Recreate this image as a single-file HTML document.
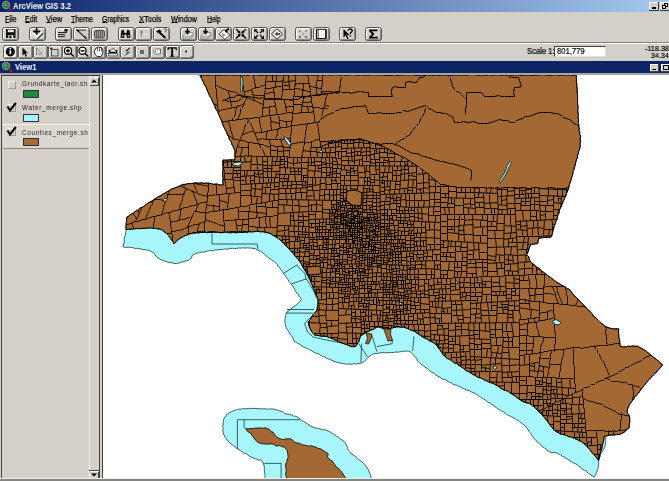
<!DOCTYPE html>
<html><head><meta charset="utf-8">
<style>
*{margin:0;padding:0;box-sizing:border-box}
html,body{width:669px;height:481px;overflow:hidden;background:#d4d0c8;font-family:"Liberation Sans",sans-serif;position:relative}
.a{position:absolute}
#title{left:0;top:0;width:669px;height:11.5px;background:linear-gradient(90deg,#0a246a 0%,#a6caf0 100%)}
.tt{color:#fff;font-weight:bold;font-size:9px;line-height:11px;white-space:nowrap;transform-origin:0 0}
.mn{font-size:8.5px;color:#000;white-space:nowrap;transform-origin:0 0;line-height:10px;top:13.6px}
.mn u{text-decoration:underline;text-underline-offset:0px}
.mn{-webkit-text-stroke:0.25px #000}
.b1{top:26.6px;height:14.4px;width:17.2px;border:1px solid #555;border-radius:2.5px;background:#d4d0c8;box-shadow:inset 1px 1px 0 #fff,inset -1px -1px 0 #8c8a84;overflow:hidden}
.b2{top:45px;height:14px;width:15px;border:1px solid #606060;border-radius:2px;background:#d4d0c8;box-shadow:inset 1px 1px 0 #fff,inset -1px -1px 0 #8c8a84;overflow:hidden}
.lg{font-size:6.3px;letter-spacing:0.7px;color:#1a1a1a;white-space:nowrap;line-height:8px;width:66px;overflow:hidden}
.ic{position:absolute;left:0;top:0}
.tt,.mn,.lg,.tx{will-change:transform}
.tx{-webkit-text-stroke:0.2px #000}
</style></head><body>
<div id="title" class="a"></div>
<svg class="a" style="left:1px;top:0px" width="12" height="12" viewBox="0 0 12 12">
<circle cx="5" cy="5" r="3.6" fill="#2a7a4a" stroke="#8a8a7a" stroke-width="1.2"/>
<path d="M3.5 3.5 L5.5 3 L6 5.5 L4 6.5Z" fill="#30d040"/>
<path d="M4.5 3 L6.5 3.5 L6 6Z" fill="#4060e0"/>
<line x1="7.6" y1="7.6" x2="11" y2="11" stroke="#c02010" stroke-width="1.4"/>
</svg>
<div class="a tt" style="left:13px;top:0.5px;transform:scaleX(0.85)">ArcView GIS 3.2</div>
<div class="a" style="left:649px;top:1.5px;width:10px;height:9px;background:#d4d0c8;box-shadow:inset -1px -1px 0 #404040,inset 1px 1px 0 #fff"><div class="a" style="left:3px;top:5.5px;width:4px;height:1.5px;background:#000"></div></div>
<div class="a" style="left:660px;top:1.5px;width:10px;height:9px;background:#d4d0c8;box-shadow:inset -1px -1px 0 #404040,inset 1px 1px 0 #fff"><div class="a" style="left:4px;top:1.5px;width:4px;height:3.5px;border:1px solid #000;border-top-width:1.5px"></div><div class="a" style="left:2px;top:3.5px;width:4px;height:3.5px;border:1px solid #000;border-top-width:1.5px;background:#d4d0c8"></div></div>


<div class="a mn" style="left:4.5px;transform:scaleX(0.83)"><u>F</u>ile</div>
<div class="a mn" style="left:24.6px;transform:scaleX(0.83)"><u>E</u>dit</div>
<div class="a mn" style="left:45.7px;transform:scaleX(0.88)"><u>V</u>iew</div>
<div class="a mn" style="left:70.9px;transform:scaleX(0.83)"><u>T</u>heme</div>
<div class="a mn" style="left:102.3px;transform:scaleX(0.80)"><u>G</u>raphics</div>
<div class="a mn" style="left:139px;transform:scaleX(0.88)"><u>X</u>Tools</div>
<div class="a mn" style="left:171.4px;transform:scaleX(0.86)"><u>W</u>indow</div>
<div class="a mn" style="left:207px;transform:scaleX(0.78)"><u>H</u>elp</div>

<div class="a b1" style="left:2.3px"></div><div class="a b1" style="left:28.8px"></div><div class="a b1" style="left:54.5px"></div><div class="a b1" style="left:72.8px"></div><div class="a b1" style="left:91px"></div><div class="a b1" style="left:117.6px"></div><div class="a b1" style="left:134.8px"></div><div class="a b1" style="left:152.8px"></div><div class="a b1" style="left:179.8px"></div><div class="a b1" style="left:197.8px"></div><div class="a b1" style="left:215.3px"></div><div class="a b1" style="left:233px"></div><div class="a b1" style="left:250.8px"></div><div class="a b1" style="left:268.6px"></div><div class="a b1" style="left:295.2px"></div><div class="a b1" style="left:313.2px"></div><div class="a b1" style="left:339.2px"></div><div class="a b1" style="left:364.8px"></div>
<div class="a" style="left:0;top:42.2px;width:669px;height:1px;background:#808080"></div>
<div class="a" style="left:0;top:43.2px;width:669px;height:1px;background:#fff"></div>
<div class="a b2" style="left:3px;width:15px;background:#f0f0ec"></div><div class="a b2" style="left:17.5px;width:15px"></div><div class="a b2" style="left:32.5px;width:15px"></div><div class="a b2" style="left:47.5px;width:15px"></div><div class="a b2" style="left:62px;width:15px"></div><div class="a b2" style="left:76.5px;width:15px"></div><div class="a b2" style="left:91px;width:15px"></div><div class="a b2" style="left:105.5px;width:15px"></div><div class="a b2" style="left:120px;width:15px"></div><div class="a b2" style="left:134.5px;width:15px"></div><div class="a b2" style="left:149.5px;width:15px"></div><div class="a b2" style="left:164.5px;width:15px"></div><div class="a b2" style="left:179px;width:14.5px"></div><svg class="a" style="left:0;top:0" width="669" height="62" viewBox="0 0 669 62"><rect x="6" y="29" width="9.5" height="9" fill="#111"/><rect x="7.8" y="29.6" width="6" height="2.6" fill="#e8e8e8"/><rect x="8.3" y="35.2" width="5" height="2.8" fill="#e8e8e8"/><rect x="9.3" y="35.8" width="2.2" height="2.2" fill="#111"/><path d="M31.5 33 L37 38.5 L43 32.5 L41 31.5 L37 35.5 L33.5 32Z" fill="#f4f4f4"/><path d="M37 38.5 L43 32.5 L43.2 34 L37.5 39.5Z" fill="#222"/><rect x="33" y="30.6" width="7.2" height="1.8" fill="#000"/><rect x="35.7" y="28.2" width="1.8" height="6.4" fill="#000"/><rect x="58" y="30.5" width="9" height="8" fill="#c8c8c8"/><path d="M58 32.5H67M58 34.6H65M58 36.6H65" stroke="#222" stroke-width="1"/><rect x="64.5" y="29" width="3" height="2.6" fill="#000"/><path d="M60 31 L64 29.5" stroke="#fff" stroke-width="1.3"/><path d="M78 30.2H86" stroke="#333" stroke-width="1"/><path d="M76.5 29.5 L86.5 38.5" stroke="#000" stroke-width="1.6"/><path d="M79 31.5 L84 36" stroke="#ddd" stroke-width="0.6"/><rect x="94.5" y="30.5" width="10" height="7.5" rx="1.5" fill="#9a9a9a" stroke="#333" stroke-width="0.8"/><path d="M96.5 31V37.5M98.5 31V37.5M100.5 31V37.5M102.5 31V37.5" stroke="#444" stroke-width="0.7"/><path d="M120.5 37.5 L121.5 30.5 L123.5 29.5 L124.5 33 L126.5 33 L127.5 29.5 L129.5 30.5 L130.5 37.5 L127 38 L126.5 34.5 L124.5 34.5 L124 38Z" fill="#000"/><rect x="121.8" y="35" width="1.5" height="1.5" fill="#bbb"/><rect x="127.8" y="35" width="1.5" height="1.5" fill="#bbb"/><circle cx="141.5" cy="32" r="1.6" fill="#8a8a8a"/><path d="M141.5 33.5V37" stroke="#8a8a8a" stroke-width="0.9"/><path d="M143.5 34.5H147" stroke="#fff" stroke-width="1"/><path d="M156 31.5 L159.5 29.5 L161.5 31.5 L159 33.5Z" fill="#000"/><path d="M159 32 L165.5 38" stroke="#000" stroke-width="1.8"/><path d="M164 29.2 Q165.5 28 166.6 29.2 Q167 30.5 165.5 31.2 V32.2" fill="none" stroke="#000" stroke-width="0.7"/><path d="M183 35.5 L187 32.5 L193 32.5 L193 36.5 L189 39 L183 39Z" fill="#e8e8e8" stroke="#666" stroke-width="0.6"/><path d="M183 36.5H189M183 38H189M189 36.5L193 34M189 38L193 35.5" stroke="#777" stroke-width="0.6"/><path d="M187.5 28.3V33M185.5 31L187.5 33.5L189.5 31" stroke="#000" stroke-width="1.5" fill="none"/><path d="M201 35.5 L205 32.5 L211 32.5 L211 36.5 L207 39 L201 39Z" fill="#e8e8e8" stroke="#666" stroke-width="0.6"/><path d="M201 36.5H207M201 38H207M207 36.5L211 34M207 38L211 35.5" stroke="#777" stroke-width="0.6"/><path d="M205.5 28.3V33M203.5 31L205.5 33.5L207.5 31" stroke="#000" stroke-width="1.5" fill="none"/><path d="M219 34 L224 29.5 L230 35 L225 39.5Z" fill="#f2f2f2" stroke="#333" stroke-width="0.9"/><path d="M225.5 31.5 L229 28.5" stroke="#000" stroke-width="1.8"/><path d="M224.5 30 L226.5 33 L228 30.5Z" fill="#000"/><circle cx="223.5" cy="35" r="0.9" fill="none" stroke="#222" stroke-width="0.6"/><path d="M236 29 L240 33M246 29 L242 33M236 38.5 L240 34.5M246 38.5 L242 34.5" stroke="#000" stroke-width="1.4"/><path d="M240.5 33.5 L237.5 33 L240 30.5Z M241.5 33.5 L244.5 33 L242 30.5Z M240.5 34 L237.5 34.5 L240 37Z M241.5 34 L244.5 34.5 L242 37Z" fill="#000"/><path d="M255.5 30.5 L258 33M262.5 30.5 L260 33M255.5 37.5 L258 35M262.5 37.5 L260 35" stroke="#000" stroke-width="1.2"/><path d="M254 29 L257.5 29.2 L254.2 32.5Z M264 29 L260.5 29.2 L263.8 32.5Z M254 39 L257.5 38.8 L254.2 35.5Z M264 39 L260.5 38.8 L263.8 35.5Z" fill="#000"/><path d="M271.5 34 L277 28.8 L282.5 34 L277 39.2Z" fill="#f6f6f6" stroke="#222" stroke-width="1"/><path d="M274.5 34 L277.5 31.5V33H280V35H277.5V36.5Z" fill="#555"/><circle cx="300" cy="31" r="1.2" fill="#999"/><circle cx="306" cy="31" r="1.2" fill="#999"/><circle cx="300" cy="37" r="1.2" fill="#777"/><circle cx="306" cy="37" r="1.2" fill="#777"/><circle cx="303" cy="34" r="1.2" fill="#aaa"/><path d="M301 30H305M298 33V35" stroke="#fff" stroke-width="0.8"/><rect x="316.5" y="29.3" width="9.5" height="9.2" fill="#f8f8f8" stroke="#000" stroke-width="0.9"/><rect x="325" y="29.8" width="1.6" height="9" fill="#222"/><path d="M317.2 31H319M317.2 33H319M317.2 35H319M317.2 37H319" stroke="#000" stroke-width="0.8"/><path d="M343.5 29 L343.5 37.5 L345.5 35.5 L347.5 39 L348.7 38.4 L346.8 35 L349.5 35Z" fill="#000"/><path d="M347.8 30.5 Q348.5 28.8 350.3 28.8 Q352.3 29 352.2 30.8 Q352 32 350.6 32.6 L350.4 34" fill="none" stroke="#000" stroke-width="1.3"/><rect x="349.7" y="35" width="1.4" height="1.4" fill="#000"/><path d="M369 29.5H377.5V31.3H371.8L374.5 34L371.8 36.7H377.8V38.5H369V37L372 34L369 31Z" fill="#000"/><circle cx="10.3" cy="51.8" r="4.6" fill="#000"/><rect x="9.5" y="50.3" width="1.7" height="4" fill="#fff"/><rect x="9.5" y="48" width="1.7" height="1.4" fill="#fff"/><path d="M22.5 47.5 L22.5 55.5 L24.3 53.7 L25.8 56.8 L27 56.2 L25.6 53.2 L28 53.2Z" fill="#000"/><path d="M36.5 47.5 L36.5 55 M36.5 47.5 L42 54 L37.5 54" stroke="#777" stroke-width="0.8" fill="none"/><rect x="51.5" y="49.5" width="6.5" height="6.5" fill="none" stroke="#333" stroke-width="0.8"/><path d="M49.5 48.5H52.5M51 47V50" stroke="#222" stroke-width="0.8"/><circle cx="68" cy="50.8" r="3.6" fill="#fff" stroke="#000" stroke-width="1.3"/><path d="M66 50.8H70M68 48.8V52.8" stroke="#000" stroke-width="1.4"/><path d="M70.6 53.4 L73.8 56.6" stroke="#000" stroke-width="1.4"/><circle cx="82.5" cy="50.8" r="3.6" fill="#fff" stroke="#000" stroke-width="1.3"/><path d="M80.5 50.8H84.5" stroke="#000" stroke-width="1.4"/><path d="M85.1 53.4 L88.3 56.6" stroke="#000" stroke-width="1.4"/><path d="M94 51 L95.5 49.5 L96 48 L97.5 47.5 L98.5 47 L100 47.5 L101.5 47.5 L102.5 49 L103 51 L102.5 54 L101 56.5 L97 56.5 L95 54Z" fill="#fff" stroke="#000" stroke-width="0.8"/><path d="M97.5 48V51.5M99.5 47.5V51M101.5 48V51.5" stroke="#000" stroke-width="0.6"/><rect x="108.5" y="53.5" width="9" height="2.5" fill="#ddd" stroke="#333" stroke-width="0.7"/><circle cx="109.5" cy="51" r="1" fill="#000"/><circle cx="116.5" cy="51" r="1" fill="#000"/><path d="M110 51 L113 48 L116 51" stroke="#555" stroke-width="0.7" fill="none"/><rect x="109" y="52" width="8" height="1" fill="#000"/><path d="M129.5 47.5 L125 51 L128 51.5 L124 56.5 L130 52 L127 51.5 L130.5 48Z" fill="#333"/><rect x="140" y="50" width="4" height="4" fill="#666"/><circle cx="138.5" cy="48.5" r="0.6" fill="#888"/><circle cx="146" cy="55" r="0.6" fill="#888"/><circle cx="138.5" cy="55" r="0.6" fill="#888"/><path d="M153 51.5 L155.5 49 H160.5 V54 H155.5Z" fill="#f6f6f6" stroke="#555" stroke-width="0.8"/><circle cx="155.5" cy="51.5" r="0.7" fill="#333"/><path d="M167.5 47.3H176.8V50.3H176L175.3 48.6H173.1V55.6L174.6 56V56.8H169.7V56L171.2 55.6V48.6H169L168.3 50.3H167.5Z" fill="#000"/><path d="M176.5 56.5 L177.5 57.6 L178.3 56.5Z" fill="#000"/><circle cx="186" cy="51.5" r="1" fill="#000"/><path d="M191 56.5 L192 57.6 L192.8 56.5Z" fill="#000"/></svg>
<div class="a tx" style="left:526.5px;top:46px;font-size:8.5px;line-height:10px;white-space:nowrap;transform:scaleX(0.9);transform-origin:0 0">Scale 1:</div>
<div class="a" style="left:554.3px;top:45.6px;width:52px;height:11px;background:#fff;border-top:1px solid #404040;border-left:1px solid #404040;border-bottom:1px solid #e0e0e0;border-right:1px solid #e0e0e0"></div>
<div class="a tx" style="left:557px;top:46px;font-size:8.5px;line-height:10px;white-space:nowrap;transform:scaleX(0.9);transform-origin:0 0">801,779</div>
<div class="a tx" style="left:644.5px;top:44.5px;font-size:8px;line-height:7px;white-space:nowrap;transform:scaleX(0.9);transform-origin:0 0">-118.38</div>
<div class="a tx" style="left:651px;top:51.5px;font-size:8px;line-height:7px;white-space:nowrap;transform:scaleX(0.9);transform-origin:0 0">34.34</div>

<div class="a" style="left:0;top:61px;width:669px;height:12px;background:#0a2466"></div>
<svg class="a" style="left:1px;top:61px" width="12" height="12" viewBox="0 0 12 12">
<circle cx="5" cy="5" r="3.6" fill="#2a7a4a" stroke="#8a8a7a" stroke-width="1.2"/>
<path d="M3.5 3.5 L5.5 3 L6 5.5 L4 6.5Z" fill="#30d040"/>
<path d="M4.5 3 L6.5 3.5 L6 6Z" fill="#4060e0"/>
<line x1="7.6" y1="7.6" x2="11" y2="11" stroke="#c02010" stroke-width="1.4"/>
</svg>
<div class="a tt" style="left:15px;top:61.5px;transform:scaleX(0.85)">View1</div>
<div class="a" style="left:650px;top:63.5px;width:9px;height:8px;background:#d4d0c8;box-shadow:inset -1px -1px 0 #404040,inset 1px 1px 0 #fff"><div class="a" style="left:2px;top:5px;width:4px;height:1.2px;background:#000"></div></div>
<div class="a" style="left:661px;top:63.5px;width:9px;height:8px;background:#d4d0c8;box-shadow:inset -1px -1px 0 #404040,inset 1px 1px 0 #fff"><div class="a" style="left:2px;top:1.5px;width:6px;height:5px;border:1px solid #000;border-top-width:1.5px"></div></div>

<div class="a" style="left:0;top:73px;width:669px;height:2px;background:#a8a6a0"></div>
<!-- TOC -->
<div class="a" style="left:1px;top:75px;width:99px;height:404px;border-left:1px solid #404040;border-top:1px solid #404040;border-right:1px solid #404040;background:#d4d0c8"></div>
<div class="a" style="left:2.5px;top:124px;width:86px;height:24.5px;border-top:1px solid #f4f4f0;border-bottom:1px solid #8a8880;background:#dcd8d0"></div>
<div class="a" style="left:7.5px;top:81px;width:8.5px;height:7.5px;border-top:1px solid #f4f2ee;border-left:1px solid #f4f2ee;border-right:1px solid #9a9890;border-bottom:1px solid #9a9890;background:#d4d0c8"></div>
<div class="a" style="left:7.5px;top:104px;width:8.5px;height:7.5px;border-top:1px solid #f4f2ee;border-left:1px solid #f4f2ee;border-right:1px solid #9a9890;border-bottom:1px solid #9a9890;background:#d4d0c8"></div>
<div class="a" style="left:7.5px;top:128px;width:8.5px;height:7.5px;border-top:1px solid #f4f2ee;border-left:1px solid #f4f2ee;border-right:1px solid #9a9890;border-bottom:1px solid #9a9890;background:#d4d0c8"></div>
<svg class="a" style="left:5px;top:100px" width="14" height="40" viewBox="0 0 14 40">
<path d="M2.5 6.5 L5 10.5 L10.8 3" fill="none" stroke="#000" stroke-width="2.1"/>
<path d="M2.5 30.5 L5 34.5 L10.8 27" fill="none" stroke="#000" stroke-width="2.1"/>
</svg>
<div class="a lg" style="left:22px;top:80.2px">Grundkarte_laor.sh</div>
<div class="a lg" style="left:22px;top:104.4px">Water_merge.shp</div>
<div class="a lg" style="left:22px;top:128.6px">Counties_merge.sh</div>
<div class="a" style="left:22.5px;top:89.6px;width:16.5px;height:8px;background:#1f8a3c;border:1px solid #303030"></div>
<div class="a" style="left:22.5px;top:113.6px;width:16.5px;height:8px;background:#a8f4fc;border:1px solid #303030"></div>
<div class="a" style="left:22.5px;top:137.5px;width:16.5px;height:8px;background:#a86a38;border:1px solid #303030"></div>
<!-- scrollbar -->
<div class="a" style="left:89px;top:76px;width:9.5px;height:403px;background:#d4d0c8;border-left:1px solid #f0f0ec"></div>
<div class="a" style="left:89px;top:76.5px;width:9.5px;height:9.5px;background:#d4d0c8;box-shadow:inset 1px 1px 0 #fff,inset -1px -1px 0 #404040"></div>
<svg class="a" style="left:90px;top:78px" width="8" height="6"><path d="M1 4.5 L4 1.5 L7 4.5Z" fill="#000"/></svg>
<div class="a" style="left:89px;top:469.5px;width:9.5px;height:9.5px;background:#d4d0c8;box-shadow:inset 1px 1px 0 #fff,inset -1px -1px 0 #404040;border-top:1px solid #404040"></div>
<svg class="a" style="left:90px;top:472px" width="8" height="6"><path d="M1 1.5 L4 4.5 L7 1.5Z" fill="#000"/></svg>
<!-- divider -->
<div class="a" style="left:102px;top:75px;width:1px;height:404px;background:#404040"></div>
<div class="a" style="left:103px;top:75px;width:566px;height:404px;background:#fff"></div>

<svg class="a" style="left:0;top:0;filter:blur(0.22px)" width="669" height="481" viewBox="0 0 669 481">
<defs><clipPath id="cm"><path d="M200.0 75.0L199.8 75.0L200.0 75.1L200.4 74.7L200.2 75.2L200.6 74.8L201.5 75.0L201.8 75.0L202.1 74.8L202.6 75.3L203.1 75.2L203.8 74.7L204.6 75.1L205.0 74.7L206.2 75.0L207.0 75.3L207.9 75.3L208.6 75.2L209.7 75.3L211.0 74.7L211.6 74.8L213.4 75.0L214.3 74.9L215.5 74.9L216.7 75.1L218.3 75.3L219.7 75.3L221.3 75.3L222.7 74.8L224.4 75.3L226.0 75.0L227.5 74.8L229.2 75.1L230.6 74.7L232.7 75.3L234.0 75.2L236.1 74.8L237.9 75.2L240.2 74.7L242.0 74.7L244.0 74.9L246.2 75.3L248.0 75.3L249.9 74.7L252.3 74.7L254.2 74.9L256.7 74.8L258.5 75.3L261.0 75.3L263.7 74.9L265.7 75.0L268.2 75.1L270.5 75.1L273.2 75.0L275.3 75.2L277.6 74.9L280.6 75.0L282.9 74.7L285.3 75.1L287.6 75.1L290.6 74.7L293.3 75.0L295.9 74.9L298.6 75.2L300.8 74.7L304.0 75.3L306.4 75.0L309.4 74.9L312.0 74.9L314.8 75.1L317.5 74.9L320.7 74.7L323.4 75.2L326.0 74.8L329.3 74.8L331.7 75.0L334.9 74.7L337.6 74.9L340.8 75.0L343.8 74.8L346.4 75.1L349.7 75.0L352.2 74.7L355.3 74.8L358.5 75.2L361.0 74.8L364.4 75.1L367.4 74.9L369.9 74.9L373.4 74.8L376.1 74.9L379.1 74.9L382.5 74.8L384.9 75.3L388.5 75.3L391.2 75.3L394.5 74.8L397.4 75.2L400.3 75.0L403.1 74.9L406.0 74.7L409.2 74.9L412.4 74.7L415.4 75.1L418.4 75.3L421.4 75.1L423.7 75.2L426.8 74.9L430.0 75.0L432.8 75.3L435.9 74.9L438.5 75.3L441.6 75.2L444.4 74.8L447.4 75.2L450.0 75.2L453.4 75.2L456.1 74.7L458.8 75.3L461.2 74.8L464.1 75.0L467.0 75.0L470.0 74.7L472.2 74.7L475.0 74.7L478.3 75.2L480.3 75.0L483.1 74.9L485.8 75.1L488.5 74.9L490.8 74.9L493.3 75.0L496.3 74.9L498.3 74.8L501.0 75.1L503.7 74.9L506.2 75.1L508.3 74.9L510.7 75.1L513.0 75.1L515.3 74.8L517.6 75.1L519.5 74.9L522.0 75.3L524.5 74.9L526.6 75.2L528.3 75.0L530.2 75.2L532.6 75.3L534.7 75.1L536.6 75.0L538.1 75.1L539.9 74.8L542.3 74.7L543.6 74.7L545.9 74.8L547.1 75.2L548.8 75.2L550.8 75.2L552.6 75.1L554.0 74.7L555.5 75.0L556.9 74.7L558.4 75.3L559.3 74.9L560.9 75.2L562.0 74.8L563.2 75.1L564.7 74.9L565.6 74.9L566.6 74.9L567.4 75.0L569.0 74.9L569.8 74.8L570.6 75.2L571.4 75.0L572.0 75.1L573.0 74.8L573.0 75.2L574.2 75.0L574.4 75.2L574.7 74.8L575.1 75.1L575.5 74.8L576.0 75.3L576.0 75.1L576.2 75.2L576.4 74.8L576.4 75.0L576.2 75.0L576.4 76.1L576.3 77.5L576.5 79.6L576.4 81.9L576.8 84.0L576.9 86.7L577.3 89.2L577.2 92.0L577.5 94.3L577.6 97.1L577.5 99.0L577.6 100.9L577.5 103.3L577.9 105.7L578.1 107.3L577.8 109.5L577.8 112.0L578.4 114.3L578.1 116.4L578.2 118.2L578.6 119.9L578.3 122.4L578.7 124.0L578.8 126.2L579.2 128.6L579.1 130.4L579.7 132.5L579.8 134.4L580.6 136.2L580.4 137.9L580.3 140.2L580.4 142.0L580.0 144.2L580.3 145.5L580.0 147.5L579.4 149.6L578.6 151.4L578.4 153.4L577.5 155.4L577.4 157.6L576.4 160.0L576.0 161.4L575.5 163.3L575.2 165.4L574.5 167.0L574.0 169.4L573.1 171.6L572.9 173.2L572.5 175.3L571.5 177.8L571.1 179.8L570.5 181.7L569.7 183.5L569.0 185.8L568.9 187.4L568.2 189.0L567.5 191.4L566.4 193.6L566.0 195.4L564.9 197.4L564.3 199.3L563.2 201.1L562.6 203.2L561.7 205.2L561.0 207.0L560.1 208.7L559.3 210.5L559.1 213.0L558.0 214.7L557.4 217.2L557.0 219.3L556.1 220.9L555.4 222.8L554.8 224.9L554.1 226.4L553.8 228.0L552.9 231.2L552.1 234.6L551.7 236.2L551.2 237.0L550.3 237.1L548.1 237.6L545.2 237.4L542.4 237.7L540.0 238.1L539.0 238.0L538.1 240.9L537.8 243.4L536.2 243.7L532.8 244.2L531.0 244.5L530.3 245.6L529.2 248.1L528.3 251.0L527.2 253.9L526.7 254.6L529.0 257.0L529.1 258.3L530.0 261.0L531.2 262.1L531.9 263.0L533.6 264.1L535.4 266.1L537.0 267.4L539.0 268.3L540.9 270.1L542.3 271.3L544.2 272.7L545.7 273.7L547.4 275.4L549.1 276.4L550.7 277.6L551.9 278.6L553.6 279.9L555.6 281.3L557.2 282.5L559.5 283.7L561.4 285.0L563.3 286.0L565.6 287.1L567.0 288.5L568.9 289.1L570.0 290.0L571.3 291.7L572.4 293.7L573.5 294.6L574.3 295.9L576.3 297.2L577.7 298.9L579.3 300.6L581.4 302.6L583.7 305.0L584.6 306.0L586.0 307.7L587.4 308.9L589.2 310.8L591.0 312.3L592.4 314.3L593.8 316.5L595.6 317.6L597.5 319.4L599.2 321.1L600.4 322.4L602.3 323.9L603.8 325.2L604.9 326.2L608.2 327.6L610.9 328.4L614.2 329.0L616.2 328.6L618.1 329.1L618.6 328.7L618.7 329.1L618.5 331.1L618.7 333.8L618.9 337.5L619.7 340.3L619.9 343.3L620.0 345.5L619.8 346.0L623.6 347.0L625.3 346.6L626.5 346.8L628.8 346.2L630.4 346.4L632.4 346.0L634.9 346.2L637.7 346.3L639.8 347.4L641.5 348.4L643.3 349.3L645.3 350.5L647.0 352.0L649.4 353.8L651.2 355.3L653.6 357.3L655.6 358.8L657.3 360.2L659.1 361.5L660.3 363.2L661.5 363.7L661.9 364.8L662.3 364.8L661.8 365.9L660.2 367.9L657.3 371.0L656.5 372.3L655.0 373.3L653.6 374.6L652.8 375.8L651.1 377.3L649.3 379.3L647.8 380.6L646.2 382.9L644.8 384.8L643.7 385.9L642.3 388.1L640.9 389.4L639.7 391.4L638.4 393.2L636.9 394.6L635.2 396.4L634.2 398.3L632.3 400.7L631.2 402.4L630.0 403.8L629.1 405.6L628.5 406.9L627.8 408.0L627.2 411.5L627.6 413.3L628.8 414.7L629.6 417.0L629.8 419.5L629.7 422.1L629.2 425.1L629.2 426.9L628.9 428.0L628.1 428.7L626.2 430.4L624.1 432.3L621.0 433.8L619.2 434.4L616.5 434.6L614.3 435.0L611.1 435.1L608.3 435.4L606.6 436.0L605.1 436.3L604.3 436.0L604.3 436.8L603.9 437.8L603.7 440.1L603.2 442.4L602.4 445.2L601.8 448.6L600.7 451.7L599.9 454.0L599.7 456.7L599.1 459.0L598.5 460.4L598.7 460.7L598.3 460.3L597.6 459.6L596.9 458.0L595.0 456.2L593.6 454.1L591.7 452.4L590.2 450.3L588.5 448.1L586.2 445.6L584.4 444.1L583.0 442.8L581.0 441.4L578.9 440.5L576.8 439.3L575.1 438.8L572.7 437.7L571.1 436.9L568.8 436.7L567.3 436.0L565.2 435.0L562.9 434.5L561.6 434.2L559.9 433.9L558.2 432.5L556.0 431.6L554.4 430.0L553.2 428.7L551.6 427.2L550.2 425.2L549.0 423.7L547.7 421.4L546.0 419.7L544.8 418.0L543.5 416.6L542.2 415.1L540.2 412.9L538.9 411.7L537.2 410.1L535.7 408.2L533.9 406.6L532.8 406.0L531.4 404.7L529.2 403.2L526.9 403.0L524.9 402.3L522.4 401.3L520.6 400.2L518.6 398.7L517.1 397.9L515.0 396.0L513.0 394.7L511.2 393.5L509.5 392.4L507.6 391.1L505.1 390.4L503.3 389.7L501.8 388.9L500.0 387.8L498.2 386.2L496.9 385.5L494.2 384.0L492.7 383.2L491.2 382.9L488.8 381.9L486.9 381.0L485.1 380.4L482.7 379.0L480.7 378.0L478.2 377.5L476.2 376.2L474.3 375.0L472.9 374.5L470.6 372.9L468.7 371.6L466.8 371.0L464.8 369.3L463.1 368.0L461.6 367.3L460.1 366.1L458.3 365.0L456.6 363.4L454.4 363.0L452.4 361.4L451.0 360.3L449.4 359.1L447.6 358.7L446.0 357.5L444.8 356.0L443.1 354.8L442.1 352.9L440.5 350.8L439.8 349.2L438.3 348.0L437.5 345.9L435.9 344.8L434.4 343.4L432.0 341.8L430.0 341.2L427.9 339.6L426.0 338.6L424.7 338.0L422.0 336.6L420.0 335.0L418.0 333.7L416.8 333.1L414.8 331.4L412.6 330.6L410.1 329.8L407.8 328.6L405.3 327.7L403.0 327.0L400.7 327.2L398.8 326.9L396.6 326.9L393.5 327.6L390.8 328.4L387.8 329.0L384.9 329.1L383.1 328.2L381.0 327.8L379.1 326.9L377.1 327.1L374.7 328.4L373.1 329.5L370.5 330.2L368.9 331.3L366.5 332.1L364.6 333.5L362.6 334.7L360.2 336.4L359.7 338.9L358.7 342.2L357.1 344.2L356.1 345.9L354.4 346.6L351.1 346.6L349.2 345.9L346.7 344.5L343.9 343.7L341.8 342.8L339.3 342.0L337.2 340.9L335.1 340.0L332.8 338.9L330.6 338.1L328.8 337.4L326.4 336.4L324.0 336.2L321.1 336.2L319.1 335.7L316.6 335.4L314.7 335.0L313.2 333.6L311.6 331.5L310.4 329.1L309.2 326.6L308.5 323.2L308.2 321.8L308.8 321.4L310.4 319.4L311.7 317.2L313.1 314.8L314.7 313.1L316.6 310.8L317.3 308.2L317.4 306.5L317.9 304.3L318.0 301.5L318.0 299.5L317.4 297.3L316.3 295.1L315.1 292.2L314.5 290.3L313.4 288.4L312.6 286.2L311.9 284.4L310.8 282.0L310.0 279.9L308.9 278.2L308.2 276.1L306.9 274.3L306.0 272.1L305.0 270.4L304.0 269.0L302.9 267.0L302.0 265.3L300.9 263.2L299.5 261.2L298.4 259.6L296.9 258.0L295.5 256.6L294.0 254.4L292.9 253.1L290.9 251.1L289.6 249.5L288.6 248.2L287.0 247.0L285.2 245.1L283.9 243.5L282.5 242.1L280.8 240.3L279.2 239.2L277.7 238.0L275.0 236.4L273.4 235.6L270.8 233.8L269.0 233.2L266.9 232.5L265.3 232.3L262.8 231.7L260.7 231.8L258.0 231.4L256.2 231.3L254.4 231.6L252.6 231.9L251.0 231.8L248.8 231.7L247.0 232.4L244.8 232.1L242.8 232.5L240.0 232.5L238.3 232.3L236.3 232.8L234.3 232.6L232.6 232.4L230.6 232.8L228.5 232.6L225.9 232.1L223.9 232.3L221.6 232.7L219.5 232.6L218.0 232.1L216.0 232.3L213.6 232.2L212.0 232.4L209.3 232.4L207.3 232.7L205.4 232.2L202.9 232.5L200.7 232.5L198.8 232.9L197.0 232.6L195.1 233.0L193.7 233.1L192.0 233.5L189.7 233.8L187.5 234.8L185.3 235.6L183.7 236.3L182.3 237.2L180.7 238.0L178.3 239.3L176.4 241.7L174.6 243.0L174.0 243.6L173.6 243.5L173.4 242.1L172.6 241.2L171.1 239.5L169.7 237.0L168.1 235.0L166.2 233.2L163.7 231.4L162.0 230.0L159.4 229.0L157.7 228.9L155.6 228.4L153.4 228.4L150.6 227.8L148.3 228.1L145.2 228.4L142.8 228.3L140.0 228.7L137.2 228.5L134.1 228.9L132.3 228.9L130.1 229.2L128.2 229.5L127.2 229.4L126.0 229.6L126.0 229.6L125.9 228.8L126.0 226.3L126.2 223.4L126.7 220.2L126.5 218.2L126.9 217.3L126.8 217.2L127.1 216.7L127.9 216.9L128.9 216.1L129.5 215.1L130.6 214.5L132.3 213.5L133.7 212.8L135.0 211.6L137.0 210.4L138.6 209.4L140.2 207.9L142.8 207.0L144.7 205.7L146.4 204.2L149.1 202.4L151.1 201.5L153.3 200.0L155.5 198.5L157.9 197.0L160.3 195.8L162.9 194.2L165.1 192.9L167.4 191.5L169.4 190.6L171.4 189.1L173.3 188.5L175.3 187.7L177.4 187.0L179.3 186.1L180.7 185.4L183.0 184.4L185.6 184.3L188.4 183.5L190.5 183.7L193.5 183.2L196.2 182.8L198.8 183.2L201.5 182.8L203.8 183.3L206.8 183.1L208.7 183.2L211.5 183.6L213.5 184.3L215.6 184.1L217.5 184.1L218.8 184.9L220.1 184.6L221.4 185.0L222.5 185.0L222.9 185.3L222.9 185.4L223.1 184.9L223.0 183.4L222.7 181.4L223.1 178.7L222.7 175.8L222.6 172.6L223.0 169.6L223.0 166.4L222.6 163.6L222.8 161.7L222.9 160.3L222.9 160.0L224.0 160.1L226.2 160.2L229.0 159.9L231.7 159.7L234.3 160.0L235.0 160.0L234.7 159.5L235.0 157.3L234.8 154.3L235.0 151.7L234.5 150.0L234.5 149.8L232.7 145.7L231.9 144.6L231.6 143.1L231.2 141.8L229.9 140.2L229.1 138.7L228.9 137.0L227.5 134.9L226.8 132.8L225.8 130.7L224.8 128.8L223.8 126.9L222.8 124.8L221.9 122.0L221.3 120.2L220.4 118.0L219.3 115.6L218.4 113.9L217.7 111.6L216.5 110.0L215.3 108.2L214.9 105.9L213.7 103.7L212.4 101.3L211.4 98.6L210.0 96.7L208.9 94.0L207.7 91.5L206.9 89.4L206.0 86.9L204.4 84.6L203.4 82.5L202.8 80.9L201.8 79.0L201.0 77.5L200.8 76.4L200.6 75.8L200.0 75.1L200.0 75.0Z"/></clipPath><clipPath id="cf"><polygon clip-rule="evenodd" points="100.0,70.0 700.0,70.0 700.0,490.0 100.0,490.0 100.0,70.0 330.0,74.0 590.0,74.0 590.0,188.0 570.0,188.0 460.0,187.0 440.0,184.0 425.0,172.0 410.0,161.0 392.0,151.0 380.0,145.0 359.0,139.0 320.0,141.0 320.0,119.0 340.0,92.0 330.0,74.0"/></clipPath><clipPath id="cv"><rect x="103" y="75" width="566" height="404"/></clipPath></defs>
<g clip-path="url(#cv)">
<path d="M126.0 229.6L126.0 230.5L125.7 232.6L125.2 235.4L124.2 238.3L124.3 241.6L123.7 244.0L123.1 246.1L123.0 247.0L123.4 247.1L124.0 246.9L125.7 247.5L128.0 247.2L130.3 247.4L132.7 247.6L135.0 248.4L137.8 248.3L141.1 249.1L143.2 249.5L145.7 249.7L147.5 250.3L149.3 250.4L152.2 252.0L154.1 253.2L155.0 254.8L156.1 256.4L158.3 258.2L159.8 259.1L161.4 260.0L163.6 260.6L166.0 261.5L167.7 262.2L170.1 262.5L172.3 262.9L174.0 263.4L176.2 263.6L177.7 263.3L180.1 262.7L181.9 261.8L184.1 261.8L186.0 260.9L188.4 260.3L189.7 259.3L191.1 258.0L191.8 256.9L192.1 255.4L194.5 254.1L198.7 252.6L199.7 252.7L201.2 252.0L203.2 252.1L204.7 251.9L206.8 251.2L208.6 250.8L210.6 250.5L213.2 250.8L215.1 249.8L218.0 249.9L220.0 249.4L222.5 249.6L224.8 249.0L227.0 249.1L229.4 248.6L232.3 248.2L234.6 248.6L236.8 248.3L238.7 248.0L240.8 248.1L243.0 247.8L245.4 248.1L247.2 247.8L248.5 248.1L250.0 248.0L253.0 248.3L255.6 248.8L258.0 250.3L260.4 251.1L261.9 252.0L263.2 253.1L265.2 254.8L266.2 255.9L267.8 257.0L268.9 258.0L270.0 258.7L272.6 260.6L274.3 261.7L276.0 263.1L277.3 264.6L278.4 266.3L279.8 267.7L280.6 269.4L282.0 271.3L283.4 273.2L284.6 274.7L285.9 276.6L286.8 278.1L288.2 279.8L289.1 281.5L290.7 283.2L291.8 285.0L293.3 287.1L294.5 289.0L295.8 291.6L297.9 293.8L299.2 296.2L300.4 297.6L301.2 299.1L301.3 299.5L299.1 302.4L297.9 303.5L296.3 305.0L294.5 306.5L292.3 307.5L291.1 309.0L289.0 310.6L287.0 312.0L286.0 314.0L285.6 315.6L285.2 318.1L284.8 320.6L285.1 323.2L285.7 325.9L286.2 327.5L287.5 329.8L288.9 331.9L290.0 334.0L291.0 335.4L292.4 337.0L293.4 339.1L294.0 340.9L295.8 342.2L297.2 343.0L299.3 344.1L301.3 345.4L303.6 347.1L306.0 348.0L307.8 348.8L309.6 349.9L311.1 350.4L313.2 351.7L315.4 352.9L317.0 353.4L319.1 354.1L320.6 355.3L322.3 356.3L324.6 356.9L326.5 358.3L328.2 358.8L329.9 359.6L332.3 360.4L333.7 361.1L336.4 362.2L338.4 362.5L340.8 363.2L342.7 363.6L345.3 364.0L347.7 364.1L349.4 364.1L351.7 364.2L354.2 363.8L356.7 364.0L358.2 363.6L360.2 363.3L362.6 362.7L364.6 360.9L366.0 359.7L367.7 357.7L370.1 355.9L371.8 354.6L373.9 353.8L376.2 353.5L379.1 353.1L381.0 352.7L382.9 352.7L384.9 352.7L386.9 352.7L389.3 352.5L391.7 352.6L393.7 352.4L395.5 352.0L398.1 352.2L400.7 351.7L402.4 351.5L404.7 351.2L406.8 351.1L408.2 351.0L411.0 352.3L412.6 353.9L413.9 355.6L415.7 357.5L417.0 359.7L418.2 361.5L419.5 363.1L422.4 365.0L423.8 365.9L424.9 367.3L427.0 368.1L428.4 369.7L430.2 370.9L431.8 372.4L434.2 373.4L435.8 375.2L438.0 376.2L439.9 377.3L441.1 378.3L443.6 379.4L445.3 379.7L447.3 380.8L449.1 382.2L451.0 382.6L452.7 384.0L454.4 384.7L456.5 385.2L458.3 386.3L460.5 387.0L462.3 388.2L464.5 388.9L467.0 390.2L469.3 390.7L470.9 391.7L472.9 392.6L474.9 393.3L476.2 394.2L478.2 395.6L479.9 396.6L481.6 397.8L483.2 398.7L485.2 400.0L486.6 401.1L488.1 402.3L490.0 403.0L491.6 404.4L493.8 405.6L495.8 407.2L497.5 408.7L500.0 410.0L501.2 410.7L503.3 411.8L505.2 413.0L506.7 414.3L508.4 415.4L510.4 416.2L513.0 417.7L514.4 418.4L516.7 419.9L518.4 420.6L519.8 421.8L521.0 422.7L522.4 423.7L524.8 425.5L526.1 427.0L527.4 428.7L528.2 430.0L529.1 431.6L530.6 433.3L531.6 435.0L532.9 436.7L533.8 438.2L535.9 440.5L537.1 441.5L539.2 443.4L540.9 444.6L542.6 446.9L544.6 448.1L546.2 449.3L547.7 450.5L549.3 451.7L551.9 452.6L554.1 452.4L556.0 452.9L557.4 453.3L558.9 454.0L560.6 455.0L562.4 456.4L565.0 457.4L566.4 458.6L568.3 459.4L570.0 460.8L571.6 461.8L573.7 463.0L575.9 463.9L577.3 465.0L579.0 466.1L580.7 467.4L582.9 469.4L584.9 470.4L586.7 471.8L588.5 473.3L589.7 474.2L592.6 476.0L594.2 477.0L594.5 477.0L595.1 475.7L596.1 474.0L596.4 472.6L597.5 469.7L598.3 467.6L598.7 464.0L598.7 460.7L598.5 459.0L599.4 457.9L600.0 456.2L600.2 454.8L601.2 453.3L602.0 452.1L602.9 450.3L603.6 449.4L604.4 447.4L605.2 445.6L605.3 443.6L605.5 441.8L605.8 439.7L605.1 437.1L603.5 434.9L602.3 432.4L600.1 429.6L597.6 426.9L594.0 423.4L590.0 420.0L589.3 419.1L587.8 418.4L586.8 418.0L586.3 416.9L584.7 415.9L583.7 415.2L582.7 414.7L581.3 413.5L580.4 412.7L578.8 412.0L577.7 411.0L576.4 410.3L575.3 409.6L574.0 408.8L572.5 407.8L570.9 407.1L569.6 406.2L568.1 405.1L566.3 404.3L564.8 402.8L563.0 401.9L561.6 401.3L560.0 399.9L558.7 399.2L556.5 397.9L554.9 397.1L553.7 396.5L551.8 395.0L549.9 394.0L548.1 392.8L546.5 392.3L544.8 390.7L542.8 389.7L541.1 388.9L539.4 388.0L537.0 386.6L535.7 385.7L533.5 384.6L531.8 383.8L529.7 382.8L527.8 381.1L526.0 380.2L523.5 379.5L521.6 378.1L519.9 377.2L517.9 375.6L515.8 374.5L514.0 373.5L512.1 372.3L509.8 371.2L508.3 370.4L506.2 369.2L503.8 367.7L502.1 366.8L499.5 365.5L497.5 364.7L496.1 363.2L494.0 362.2L491.9 361.4L489.8 360.3L487.6 358.6L485.7 357.9L483.4 356.6L481.5 355.2L479.5 354.3L477.6 353.4L475.5 352.5L473.8 351.4L471.7 350.1L469.7 349.1L467.6 347.8L465.8 346.6L463.6 345.2L461.5 344.3L459.9 343.5L458.1 342.1L456.3 341.0L454.3 339.8L452.4 339.1L450.7 338.2L448.7 337.1L446.9 335.9L444.7 334.8L443.3 333.6L441.6 332.8L439.4 331.3L437.7 330.4L436.2 329.9L434.6 328.7L432.6 327.4L431.1 326.7L429.5 325.6L428.0 324.5L426.0 323.6L424.6 323.1L422.8 322.0L421.7 320.7L420.0 320.0L417.7 318.8L416.2 317.8L414.2 316.2L412.0 315.0L410.4 313.6L408.0 312.5L406.6 310.9L404.0 309.6L402.5 308.7L400.4 307.1L398.8 306.1L397.0 304.9L394.7 303.5L393.4 302.5L391.3 301.2L389.7 299.9L387.6 298.5L386.3 297.1L384.0 295.6L382.2 294.2L380.5 293.3L378.7 292.2L377.4 290.9L375.8 289.6L374.1 288.5L372.2 287.3L370.2 285.4L368.5 284.2L367.0 283.2L365.6 282.1L363.5 280.7L362.2 279.4L360.2 278.4L358.8 277.2L357.2 276.2L355.9 274.4L354.2 273.7L352.3 272.1L350.8 271.1L349.4 270.3L347.5 268.7L346.0 267.9L344.7 266.6L342.8 265.4L341.6 264.4L339.5 263.2L338.0 262.3L336.4 261.0L334.8 260.0L333.9 259.0L332.0 258.3L330.2 256.9L329.2 255.6L327.6 254.9L325.6 253.8L324.3 252.9L322.8 251.8L321.1 251.5L319.7 250.2L318.0 249.2L317.1 248.6L315.2 247.3L313.6 246.9L312.1 246.0L310.9 245.2L309.2 244.0L307.3 243.7L306.0 243.1L304.8 242.4L303.0 241.7L301.7 240.9L300.0 240.0L297.6 239.3L295.6 238.5L293.8 237.1L291.2 236.4L289.1 235.6L287.0 234.8L284.5 234.3L282.3 233.6L280.7 233.4L278.1 232.2L276.4 232.3L274.1 231.2L271.7 231.3L270.1 230.2L267.5 230.1L265.5 229.9L263.4 229.5L261.2 229.0L259.7 228.8L257.0 228.1L255.4 228.0L253.1 227.8L251.2 227.9L249.0 227.5L247.0 227.2L245.3 226.8L243.1 227.0L240.8 226.9L239.1 226.6L237.2 226.7L234.9 226.4L232.9 226.2L231.2 225.8L229.2 226.1L227.6 226.3L225.5 226.0L223.8 226.2L222.1 226.2L219.7 225.5L218.3 225.4L216.1 225.8L214.3 225.5L212.8 225.4L210.7 225.7L208.6 225.3L207.1 225.4L205.1 225.2L203.2 224.9L201.6 224.8L200.0 225.0L197.9 224.7L195.0 225.0L192.8 224.6L190.3 224.8L187.4 224.8L184.7 224.6L182.5 224.7L179.8 224.6L176.6 224.6L174.4 225.1L171.2 224.9L169.0 225.4L166.4 225.2L163.6 225.4L161.1 226.0L158.4 225.9L156.1 226.1L153.0 226.7L150.6 226.5L148.6 227.1L146.6 227.4L143.8 227.5L142.3 227.4L140.2 227.7L138.0 227.7L136.5 228.3L134.9 228.5L132.9 228.5L131.5 229.2L130.2 228.7L129.2 228.9L128.3 229.4L127.6 229.2L126.6 229.5L126.5 229.5L126.1 229.9L126.0 229.6Z" fill="#a6f6fc" stroke="#1a3a3a" stroke-width="0.8"/>
<path d="M222.8 426.4L223.1 424.2L223.3 421.4L223.6 419.3L224.9 417.2L226.2 415.2L227.5 414.1L229.0 413.0L231.2 411.7L233.1 411.1L235.0 410.2L237.4 409.6L239.6 409.0L241.6 409.0L243.7 408.6L245.4 408.8L248.2 408.5L250.2 408.3L253.1 408.5L255.0 408.4L257.2 408.6L258.8 408.7L261.1 408.9L263.7 408.7L265.8 408.9L268.1 409.2L269.7 408.9L272.1 409.0L273.9 409.1L275.5 409.6L278.3 410.2L279.8 411.0L281.7 411.4L283.4 412.2L284.8 413.5L286.7 414.0L289.1 414.3L291.4 414.9L293.4 416.0L295.8 416.3L298.0 417.4L299.8 418.4L301.5 420.2L303.3 421.3L305.7 422.7L307.7 424.0L309.2 425.3L311.8 426.6L313.8 427.4L315.9 428.0L318.3 428.4L320.0 428.9L322.8 429.7L325.1 429.8L327.6 430.8L329.6 431.5L331.2 432.8L332.9 433.5L335.2 435.2L336.6 436.3L338.5 437.3L340.5 439.1L342.2 440.1L344.3 441.6L345.3 442.8L346.4 444.8L347.2 446.5L347.7 448.6L348.5 450.4L350.0 451.9L351.2 453.7L353.0 454.9L354.8 456.0L356.4 457.3L358.2 458.9L360.3 460.6L361.8 461.8L363.5 463.3L365.4 465.3L366.6 467.8L368.2 469.4L369.1 471.8L370.1 474.1L370.7 475.8L371.4 478.8L371.3 481.0L371.0 481.3L370.9 480.9L370.5 481.2L369.5 481.0L368.3 480.9L367.1 481.1L366.1 480.8L364.6 480.7L362.6 481.1L361.0 481.3L359.2 481.1L356.7 481.2L354.5 481.1L352.7 481.3L350.2 481.0L347.5 481.2L344.5 481.3L342.3 481.0L339.4 481.0L336.2 481.1L333.1 481.2L330.8 480.9L327.8 480.7L324.7 480.8L321.7 481.0L318.6 480.7L315.0 481.2L312.3 481.0L308.9 480.8L306.1 480.7L303.6 481.2L300.7 481.1L297.4 480.7L294.8 480.7L292.0 481.0L289.3 480.7L286.5 481.0L284.0 481.0L281.7 480.8L279.5 481.0L277.5 480.8L275.4 481.0L274.1 480.9L271.9 480.9L270.5 481.1L269.5 481.0L267.9 480.9L267.1 481.0L266.3 481.3L265.9 481.1L265.7 481.1L265.4 481.0L265.6 480.3L265.4 479.1L264.9 476.5L264.9 473.4L264.4 471.2L264.3 468.7L264.3 466.7L263.6 464.0L263.1 462.5L262.1 461.1L260.7 460.1L258.5 460.0L255.8 459.0L253.1 457.8L251.8 457.3L249.7 456.3L247.9 455.0L246.7 453.9L244.7 453.4L242.7 452.3L240.8 450.8L238.9 449.7L237.4 448.8L235.7 447.6L233.8 445.9L231.9 444.5L230.4 443.4L229.0 441.9L227.5 440.5L226.2 438.7L224.8 436.8L223.9 434.6L223.3 432.9L222.8 430.8L223.2 428.4L222.8 426.4Z" fill="#a6f6fc" stroke="#1a3a3a" stroke-width="0.8"/>
<path d="M212.0 233.5L212.0 244.0L257.0 244.0L258.0 249.0M283.1 273.7L296.9 264.9L299.1 267.8L305.0 273.7L306.0 280.0M291.8 283.9L306.4 278.8L313.7 291.1L316.6 298.4M318.4 300.0L319.1 310.2L313.3 314.6L304.6 323.3L307.5 332.0L313.3 337.1L326.4 340.0L345.3 343.7L355.0 347.0M287.0 309.5L314.0 309.5M286.0 313.1L313.3 313.1M361.6 343.7L360.9 362.6M371.8 335.0L376.9 351.7M376.9 346.6L392.2 343.7L392.2 339.3M414.0 336.4L412.6 351.0M358.7 343.7L367.5 356.8M237.4 419.7L300.2 419.7M237.4 419.7L237.4 448.8M244.1 419.7L244.1 428.0M264.3 463.4L281.1 463.4L281.1 481.0" fill="none" stroke="#1a3a3a" stroke-width="0.8"/>
<path d="M200.0 75.0L199.8 75.0L200.0 75.1L200.4 74.7L200.2 75.2L200.6 74.8L201.5 75.0L201.8 75.0L202.1 74.8L202.6 75.3L203.1 75.2L203.8 74.7L204.6 75.1L205.0 74.7L206.2 75.0L207.0 75.3L207.9 75.3L208.6 75.2L209.7 75.3L211.0 74.7L211.6 74.8L213.4 75.0L214.3 74.9L215.5 74.9L216.7 75.1L218.3 75.3L219.7 75.3L221.3 75.3L222.7 74.8L224.4 75.3L226.0 75.0L227.5 74.8L229.2 75.1L230.6 74.7L232.7 75.3L234.0 75.2L236.1 74.8L237.9 75.2L240.2 74.7L242.0 74.7L244.0 74.9L246.2 75.3L248.0 75.3L249.9 74.7L252.3 74.7L254.2 74.9L256.7 74.8L258.5 75.3L261.0 75.3L263.7 74.9L265.7 75.0L268.2 75.1L270.5 75.1L273.2 75.0L275.3 75.2L277.6 74.9L280.6 75.0L282.9 74.7L285.3 75.1L287.6 75.1L290.6 74.7L293.3 75.0L295.9 74.9L298.6 75.2L300.8 74.7L304.0 75.3L306.4 75.0L309.4 74.9L312.0 74.9L314.8 75.1L317.5 74.9L320.7 74.7L323.4 75.2L326.0 74.8L329.3 74.8L331.7 75.0L334.9 74.7L337.6 74.9L340.8 75.0L343.8 74.8L346.4 75.1L349.7 75.0L352.2 74.7L355.3 74.8L358.5 75.2L361.0 74.8L364.4 75.1L367.4 74.9L369.9 74.9L373.4 74.8L376.1 74.9L379.1 74.9L382.5 74.8L384.9 75.3L388.5 75.3L391.2 75.3L394.5 74.8L397.4 75.2L400.3 75.0L403.1 74.9L406.0 74.7L409.2 74.9L412.4 74.7L415.4 75.1L418.4 75.3L421.4 75.1L423.7 75.2L426.8 74.9L430.0 75.0L432.8 75.3L435.9 74.9L438.5 75.3L441.6 75.2L444.4 74.8L447.4 75.2L450.0 75.2L453.4 75.2L456.1 74.7L458.8 75.3L461.2 74.8L464.1 75.0L467.0 75.0L470.0 74.7L472.2 74.7L475.0 74.7L478.3 75.2L480.3 75.0L483.1 74.9L485.8 75.1L488.5 74.9L490.8 74.9L493.3 75.0L496.3 74.9L498.3 74.8L501.0 75.1L503.7 74.9L506.2 75.1L508.3 74.9L510.7 75.1L513.0 75.1L515.3 74.8L517.6 75.1L519.5 74.9L522.0 75.3L524.5 74.9L526.6 75.2L528.3 75.0L530.2 75.2L532.6 75.3L534.7 75.1L536.6 75.0L538.1 75.1L539.9 74.8L542.3 74.7L543.6 74.7L545.9 74.8L547.1 75.2L548.8 75.2L550.8 75.2L552.6 75.1L554.0 74.7L555.5 75.0L556.9 74.7L558.4 75.3L559.3 74.9L560.9 75.2L562.0 74.8L563.2 75.1L564.7 74.9L565.6 74.9L566.6 74.9L567.4 75.0L569.0 74.9L569.8 74.8L570.6 75.2L571.4 75.0L572.0 75.1L573.0 74.8L573.0 75.2L574.2 75.0L574.4 75.2L574.7 74.8L575.1 75.1L575.5 74.8L576.0 75.3L576.0 75.1L576.2 75.2L576.4 74.8L576.4 75.0L576.2 75.0L576.4 76.1L576.3 77.5L576.5 79.6L576.4 81.9L576.8 84.0L576.9 86.7L577.3 89.2L577.2 92.0L577.5 94.3L577.6 97.1L577.5 99.0L577.6 100.9L577.5 103.3L577.9 105.7L578.1 107.3L577.8 109.5L577.8 112.0L578.4 114.3L578.1 116.4L578.2 118.2L578.6 119.9L578.3 122.4L578.7 124.0L578.8 126.2L579.2 128.6L579.1 130.4L579.7 132.5L579.8 134.4L580.6 136.2L580.4 137.9L580.3 140.2L580.4 142.0L580.0 144.2L580.3 145.5L580.0 147.5L579.4 149.6L578.6 151.4L578.4 153.4L577.5 155.4L577.4 157.6L576.4 160.0L576.0 161.4L575.5 163.3L575.2 165.4L574.5 167.0L574.0 169.4L573.1 171.6L572.9 173.2L572.5 175.3L571.5 177.8L571.1 179.8L570.5 181.7L569.7 183.5L569.0 185.8L568.9 187.4L568.2 189.0L567.5 191.4L566.4 193.6L566.0 195.4L564.9 197.4L564.3 199.3L563.2 201.1L562.6 203.2L561.7 205.2L561.0 207.0L560.1 208.7L559.3 210.5L559.1 213.0L558.0 214.7L557.4 217.2L557.0 219.3L556.1 220.9L555.4 222.8L554.8 224.9L554.1 226.4L553.8 228.0L552.9 231.2L552.1 234.6L551.7 236.2L551.2 237.0L550.3 237.1L548.1 237.6L545.2 237.4L542.4 237.7L540.0 238.1L539.0 238.0L538.1 240.9L537.8 243.4L536.2 243.7L532.8 244.2L531.0 244.5L530.3 245.6L529.2 248.1L528.3 251.0L527.2 253.9L526.7 254.6L529.0 257.0L529.1 258.3L530.0 261.0L531.2 262.1L531.9 263.0L533.6 264.1L535.4 266.1L537.0 267.4L539.0 268.3L540.9 270.1L542.3 271.3L544.2 272.7L545.7 273.7L547.4 275.4L549.1 276.4L550.7 277.6L551.9 278.6L553.6 279.9L555.6 281.3L557.2 282.5L559.5 283.7L561.4 285.0L563.3 286.0L565.6 287.1L567.0 288.5L568.9 289.1L570.0 290.0L571.3 291.7L572.4 293.7L573.5 294.6L574.3 295.9L576.3 297.2L577.7 298.9L579.3 300.6L581.4 302.6L583.7 305.0L584.6 306.0L586.0 307.7L587.4 308.9L589.2 310.8L591.0 312.3L592.4 314.3L593.8 316.5L595.6 317.6L597.5 319.4L599.2 321.1L600.4 322.4L602.3 323.9L603.8 325.2L604.9 326.2L608.2 327.6L610.9 328.4L614.2 329.0L616.2 328.6L618.1 329.1L618.6 328.7L618.7 329.1L618.5 331.1L618.7 333.8L618.9 337.5L619.7 340.3L619.9 343.3L620.0 345.5L619.8 346.0L623.6 347.0L625.3 346.6L626.5 346.8L628.8 346.2L630.4 346.4L632.4 346.0L634.9 346.2L637.7 346.3L639.8 347.4L641.5 348.4L643.3 349.3L645.3 350.5L647.0 352.0L649.4 353.8L651.2 355.3L653.6 357.3L655.6 358.8L657.3 360.2L659.1 361.5L660.3 363.2L661.5 363.7L661.9 364.8L662.3 364.8L661.8 365.9L660.2 367.9L657.3 371.0L656.5 372.3L655.0 373.3L653.6 374.6L652.8 375.8L651.1 377.3L649.3 379.3L647.8 380.6L646.2 382.9L644.8 384.8L643.7 385.9L642.3 388.1L640.9 389.4L639.7 391.4L638.4 393.2L636.9 394.6L635.2 396.4L634.2 398.3L632.3 400.7L631.2 402.4L630.0 403.8L629.1 405.6L628.5 406.9L627.8 408.0L627.2 411.5L627.6 413.3L628.8 414.7L629.6 417.0L629.8 419.5L629.7 422.1L629.2 425.1L629.2 426.9L628.9 428.0L628.1 428.7L626.2 430.4L624.1 432.3L621.0 433.8L619.2 434.4L616.5 434.6L614.3 435.0L611.1 435.1L608.3 435.4L606.6 436.0L605.1 436.3L604.3 436.0L604.3 436.8L603.9 437.8L603.7 440.1L603.2 442.4L602.4 445.2L601.8 448.6L600.7 451.7L599.9 454.0L599.7 456.7L599.1 459.0L598.5 460.4L598.7 460.7L598.3 460.3L597.6 459.6L596.9 458.0L595.0 456.2L593.6 454.1L591.7 452.4L590.2 450.3L588.5 448.1L586.2 445.6L584.4 444.1L583.0 442.8L581.0 441.4L578.9 440.5L576.8 439.3L575.1 438.8L572.7 437.7L571.1 436.9L568.8 436.7L567.3 436.0L565.2 435.0L562.9 434.5L561.6 434.2L559.9 433.9L558.2 432.5L556.0 431.6L554.4 430.0L553.2 428.7L551.6 427.2L550.2 425.2L549.0 423.7L547.7 421.4L546.0 419.7L544.8 418.0L543.5 416.6L542.2 415.1L540.2 412.9L538.9 411.7L537.2 410.1L535.7 408.2L533.9 406.6L532.8 406.0L531.4 404.7L529.2 403.2L526.9 403.0L524.9 402.3L522.4 401.3L520.6 400.2L518.6 398.7L517.1 397.9L515.0 396.0L513.0 394.7L511.2 393.5L509.5 392.4L507.6 391.1L505.1 390.4L503.3 389.7L501.8 388.9L500.0 387.8L498.2 386.2L496.9 385.5L494.2 384.0L492.7 383.2L491.2 382.9L488.8 381.9L486.9 381.0L485.1 380.4L482.7 379.0L480.7 378.0L478.2 377.5L476.2 376.2L474.3 375.0L472.9 374.5L470.6 372.9L468.7 371.6L466.8 371.0L464.8 369.3L463.1 368.0L461.6 367.3L460.1 366.1L458.3 365.0L456.6 363.4L454.4 363.0L452.4 361.4L451.0 360.3L449.4 359.1L447.6 358.7L446.0 357.5L444.8 356.0L443.1 354.8L442.1 352.9L440.5 350.8L439.8 349.2L438.3 348.0L437.5 345.9L435.9 344.8L434.4 343.4L432.0 341.8L430.0 341.2L427.9 339.6L426.0 338.6L424.7 338.0L422.0 336.6L420.0 335.0L418.0 333.7L416.8 333.1L414.8 331.4L412.6 330.6L410.1 329.8L407.8 328.6L405.3 327.7L403.0 327.0L400.7 327.2L398.8 326.9L396.6 326.9L393.5 327.6L390.8 328.4L387.8 329.0L384.9 329.1L383.1 328.2L381.0 327.8L379.1 326.9L377.1 327.1L374.7 328.4L373.1 329.5L370.5 330.2L368.9 331.3L366.5 332.1L364.6 333.5L362.6 334.7L360.2 336.4L359.7 338.9L358.7 342.2L357.1 344.2L356.1 345.9L354.4 346.6L351.1 346.6L349.2 345.9L346.7 344.5L343.9 343.7L341.8 342.8L339.3 342.0L337.2 340.9L335.1 340.0L332.8 338.9L330.6 338.1L328.8 337.4L326.4 336.4L324.0 336.2L321.1 336.2L319.1 335.7L316.6 335.4L314.7 335.0L313.2 333.6L311.6 331.5L310.4 329.1L309.2 326.6L308.5 323.2L308.2 321.8L308.8 321.4L310.4 319.4L311.7 317.2L313.1 314.8L314.7 313.1L316.6 310.8L317.3 308.2L317.4 306.5L317.9 304.3L318.0 301.5L318.0 299.5L317.4 297.3L316.3 295.1L315.1 292.2L314.5 290.3L313.4 288.4L312.6 286.2L311.9 284.4L310.8 282.0L310.0 279.9L308.9 278.2L308.2 276.1L306.9 274.3L306.0 272.1L305.0 270.4L304.0 269.0L302.9 267.0L302.0 265.3L300.9 263.2L299.5 261.2L298.4 259.6L296.9 258.0L295.5 256.6L294.0 254.4L292.9 253.1L290.9 251.1L289.6 249.5L288.6 248.2L287.0 247.0L285.2 245.1L283.9 243.5L282.5 242.1L280.8 240.3L279.2 239.2L277.7 238.0L275.0 236.4L273.4 235.6L270.8 233.8L269.0 233.2L266.9 232.5L265.3 232.3L262.8 231.7L260.7 231.8L258.0 231.4L256.2 231.3L254.4 231.6L252.6 231.9L251.0 231.8L248.8 231.7L247.0 232.4L244.8 232.1L242.8 232.5L240.0 232.5L238.3 232.3L236.3 232.8L234.3 232.6L232.6 232.4L230.6 232.8L228.5 232.6L225.9 232.1L223.9 232.3L221.6 232.7L219.5 232.6L218.0 232.1L216.0 232.3L213.6 232.2L212.0 232.4L209.3 232.4L207.3 232.7L205.4 232.2L202.9 232.5L200.7 232.5L198.8 232.9L197.0 232.6L195.1 233.0L193.7 233.1L192.0 233.5L189.7 233.8L187.5 234.8L185.3 235.6L183.7 236.3L182.3 237.2L180.7 238.0L178.3 239.3L176.4 241.7L174.6 243.0L174.0 243.6L173.6 243.5L173.4 242.1L172.6 241.2L171.1 239.5L169.7 237.0L168.1 235.0L166.2 233.2L163.7 231.4L162.0 230.0L159.4 229.0L157.7 228.9L155.6 228.4L153.4 228.4L150.6 227.8L148.3 228.1L145.2 228.4L142.8 228.3L140.0 228.7L137.2 228.5L134.1 228.9L132.3 228.9L130.1 229.2L128.2 229.5L127.2 229.4L126.0 229.6L126.0 229.6L125.9 228.8L126.0 226.3L126.2 223.4L126.7 220.2L126.5 218.2L126.9 217.3L126.8 217.2L127.1 216.7L127.9 216.9L128.9 216.1L129.5 215.1L130.6 214.5L132.3 213.5L133.7 212.8L135.0 211.6L137.0 210.4L138.6 209.4L140.2 207.9L142.8 207.0L144.7 205.7L146.4 204.2L149.1 202.4L151.1 201.5L153.3 200.0L155.5 198.5L157.9 197.0L160.3 195.8L162.9 194.2L165.1 192.9L167.4 191.5L169.4 190.6L171.4 189.1L173.3 188.5L175.3 187.7L177.4 187.0L179.3 186.1L180.7 185.4L183.0 184.4L185.6 184.3L188.4 183.5L190.5 183.7L193.5 183.2L196.2 182.8L198.8 183.2L201.5 182.8L203.8 183.3L206.8 183.1L208.7 183.2L211.5 183.6L213.5 184.3L215.6 184.1L217.5 184.1L218.8 184.9L220.1 184.6L221.4 185.0L222.5 185.0L222.9 185.3L222.9 185.4L223.1 184.9L223.0 183.4L222.7 181.4L223.1 178.7L222.7 175.8L222.6 172.6L223.0 169.6L223.0 166.4L222.6 163.6L222.8 161.7L222.9 160.3L222.9 160.0L224.0 160.1L226.2 160.2L229.0 159.9L231.7 159.7L234.3 160.0L235.0 160.0L234.7 159.5L235.0 157.3L234.8 154.3L235.0 151.7L234.5 150.0L234.5 149.8L232.7 145.7L231.9 144.6L231.6 143.1L231.2 141.8L229.9 140.2L229.1 138.7L228.9 137.0L227.5 134.9L226.8 132.8L225.8 130.7L224.8 128.8L223.8 126.9L222.8 124.8L221.9 122.0L221.3 120.2L220.4 118.0L219.3 115.6L218.4 113.9L217.7 111.6L216.5 110.0L215.3 108.2L214.9 105.9L213.7 103.7L212.4 101.3L211.4 98.6L210.0 96.7L208.9 94.0L207.7 91.5L206.9 89.4L206.0 86.9L204.4 84.6L203.4 82.5L202.8 80.9L201.8 79.0L201.0 77.5L200.8 76.4L200.6 75.8L200.0 75.1L200.0 75.0Z" fill="#a36834" stroke="#000" stroke-width="0.8"/>
<g clip-path="url(#cm)"><g clip-path="url(#cf)"><path transform="translate(0.5 0.5)" d="M342 74l0 3 0 2 0 3 0 2 0 3 0 2 0 3 1 2-1 3 0 2 0 3 0 2 0 3 0 2 0 3 0 2-1 3 1 2-1 3 0 2 0 3 0 2 0 3 0 2 0 3 0 2 0 3 0 2 0 3 0 2 0 3 0 2 0 3 0 2 0 3 0 2 0 3 0 2-1 3 0 2 0 3 0 2 0 3 0 2 0 3 0 2 0 3 0 2 0 3 0 2 0 3 0 2 0 3 0 2 0 3 0 2 0 3 0 2 0 3 0 2-1 3 0 2 0 3 0 2 0 3 0 2 0 3 0 2 0 3 0 2 0 3 0 2 0 3 0 2 0 3 0 2 0 3 0 2 0 3 0 2 0 3 0 3-1 2 0 3 0 2 0 3 0 2 0 3 0 2 0 3 0 2 0 3 0 2 0 3 0 2 0 3 0 2 0 3 0 2 0 3 0 2 0 3 0 2 0 3-1 2 0 3 0 2 0 3 0 2 0 3 0 2 0 3 0 2 0 3 0 2 0 3 0 2 0 3 0 2 0 3 0 2 0 3 0 2 0 3 0 2 0 3-1 2 0 3 0 2 0 3 0 2 0 3 0 2 0 3 0 2 0 3 0 2 0 3 0 2 0 3 0 2 0 3 0 2 0 3 0 2 0 3 0 2 0 3-1 2 0 3 0 2 0 3 0 2 0 3 0 2 0 3 0 2 0 3 0 2 0 3 0 2 0 3M339 269l-3-1-2 0-3 0-2 0-3 0-2-1-3 0-2 0-3 0-2 0-3 0-2-1-3 0-2 0-3 0-3 0-2-1-3 0-2 0-3 0-2 0-3-1-2 0-3 0-2 0-3 0-2 0-3-1-2 0-3 0-2 0-3 0-2-1-3 0-2 0-3 0-2 0-3 0-2-1-3 0-2 0-3-1-2 0-3 0-2 0-3 0-2 0-3 0-2 0-3-1-2 0-3 0-3 0-2-1-3 0-2 0-3 0-2 0-3 0-2-1-3 0-2 0-3-1-2 0-3 0-2 0-3 0-2 0-3 0-2 0-3-1-2 0-3 0-2 0-3 0-2 0-3-1-2 0-3 0-2-1-3 0-2 0-3 0-2-1-3 1-2-1-3 0M208 480l0-3 0-2 0-3 1-2 0-3 0-2 0-3 0-2 0-3 0-2 0-3 0-2 0-3 0-2 1-3 0-2 0-3 0-2 0-3 0-2 0-3 0-2 0-3 0-2 0-3 1-2 0-3 0-2 0-3 0-2 0-3 0-2 0-3 0-2 0-3 0-2 1-3 0-2 0-3 0-2 0-3 0-2 0-3 0-2 0-3 0-2 0-3 1-2 0-3 0-2 0-3 0-2 0-3 0-2 0-3 0-2 0-3 0-2 1-3 0-2 0-3 0-2 0-3 0-2 0-3 0-2 0-3 0-2 0-3 1-2 0-3 0-2 0-3 0-3 0-2 0-3 0-2 0-3 0-2 0-3 0-2 0-3 1-2 0-3 0-2 0-3 0-2 0-3M120 395l3 0 2-1 3 0 2 0 3 0 2-1 3 0 2 0 3 0 2-1 3 0 3 0 2-1 3 0 2 0 3 0 2-1 3 0 2 0 3 0 2-1 3 0 3 0 2-1 3 0 2 0 3 0 2-1 3 0 2 0 3 0 2-1 3 0 3 0 2 0 3-1M120 427l90 6M166 480l-2-50M120 460l45-4M143 480l2-22M129 480l1-21M120 470l10-1M130 471l14-1M137 480l0-10M137 474l6 0M130 463l14 2M138 464l0 6M138 458l1 6M134 459l0 5M156 480l1-23M144 467l13 0M150 480l0-13M143 475l7 0M144 472l6 0M150 457l0 10M144 462l6 0M157 461l-7 0M157 467l9 0M156 474l10 0M160 480l0-6M157 461l8 0M136 428l3 30M120 445l17-2M129 444l-1 15M120 451l8-1M120 454l8 0M138 453l-10 0M133 459l0-6M134 444l0 9M120 438l17-1M128 437l1 7M134 437l0 6M130 428l-1 9M126 428l-1 9M120 432l6 0M136 432l-7 1M165 446l-27 1M153 457l0-11M147 458l-1-12M165 450l-12 1M159 456l0-5M159 451l0-5M148 429l1 17M148 440l-11-1M142 447l0-7M148 433l-12 0M142 440l0-7M143 429l0 4M164 437l-16-2M158 446l0-10M148 440l10 0M153 446l0-6M152 436l0 4M157 430l0 6M152 429l1 7M165 461l44-1M188 480l-1-20M179 480l0-19M166 468l13 0M171 480l1-12M166 474l6 0M172 475l7-1M176 468l0 6M172 461l0 7M179 470l9 0M183 480l0-10M179 476l4-1M183 476l5 0M197 480l2-20M188 472l10 0M192 480l0-8M192 477l5 0M193 460l0 12M188 468l5-1M198 466l-5 0M198 468l11 1M202 480l-1-11M198 474l4-1M202 474l6 0M203 460l0 9M198 465l5 0M209 465l-6-1M191 432l1 28M165 447l26 0M180 447l0 14M173 447l0 14M165 453l8 0M165 457l8-1M180 455l-7 0M192 455l-12-1M186 461l0-7M186 447l-1 7M185 451l-5 0M175 431l-1 16M164 439l11 1M170 440l0 7M170 431l0 9M182 431l1 16M182 440l-7 0M177 447l1-7M182 436l-7 0M191 438l-9 0M209 445l-18 1M209 452l-17 0M199 460l0-8M204 460l0-8M202 452l0-7M197 452l0-7M199 432l-1 13M199 437l-8 0M198 442l-7 0M195 432l0 5M210 439l-12 1M204 433l0 7M204 437l-5-1M176 389l-1 42M153 391l-1 38M120 408l3 0 2 1 3 0 3 0 3 0 2 0 3 0 3 0 2 0 3 1 3 0 2 0M137 409l0 19M120 416l17 1M126 417l1 11M120 423l6 0M130 409l-1 8M134 409l-1 8M152 421l-15 1M145 429l1-8M144 409l0 12M144 415l-7 1M152 416l-8 0M138 393l-1 16M131 394l0 2 0 3 0 2 0 3 0 2 0 3M120 402l3 0 2 0 3 0 3 0M138 401l-7 0M153 400l-15 0M143 409l0-9M137 405l6 0M146 392l0 8M175 412l-23 2M164 430l0-17M152 419l12 0M158 413l1 6M175 423l-11 1M170 431l0-8M164 427l6 1M175 419l-11 0M163 390l-1 23M162 403l-9 0M162 409l-10 0M158 413l0-4M176 403l-14 0M168 412l-1-9M176 398l-14-1M168 403l-1-6M171 403l0-5M170 390l0 7M211 415l-36-3M194 432l-1-18M175 422l19 1M182 431l0-9M175 427l7 0M178 422l0 5M182 427l12 0M187 422l1 5M185 413l0 9M181 413l0 9M193 417l-8 0M188 422l0-5M210 426l-16-1M203 433l0-8M210 429l-7 1M201 425l0-11M193 418l8 0M194 421l7 0M198 414l0 4M210 420l-9 1M205 425l0-5M207 420l0-6M191 387l-1 26M191 401l-15 1M181 413l0-11M175 407l6 0M191 407l-10 0M191 396l-15 0M185 402l0-6M181 402l0-6M184 388l0 8M211 400l-20 0M203 414l-1-14M191 408l11 0M198 414l0-6M196 400l-1 8M211 406l-9 0M204 386l-1 14M203 394l-12-1M196 387l0 6M211 391l-8 0M207 400l-1-9M120 319l3 0 2 0 3 0 2 0 3 0 2 0 3 1 2 0 3 0 2 0 3 0 2 1 3 0 2 0 3 0 3 1 2 0 3 0 2 0 3 0 2 0 3 1 2 0 3 0 2 0 3 1 2 0 3 0 3 0 2 0 3 1 2 0 3 0 2 0 3 0 2 1 3 0M172 323l0 2 0 3 0 2 0 3 0 2 0 3 0 3 0 2 0 3 0 2 0 3 0 2 0 3 0 3 0 2 0 3 0 2 0 3 0 2 0 3 0 3 0 2 0 3 0 2 0 3 0 2M120 361l3 0 2 0 3 0 2 1 3 0 3 0 2 0 3 0 2 1 3 0 3 0 2 1 3 0 3 0 2 0 3 1 2 0 3 0 3 0 2 0M148 363l-1 3 0 3 0 2 0 3 0 2-1 3 0 3 0 2 0 3 0 3 0 2M120 378l3-1 2 0 3 0 3 0 2 0 3 0 3 0 2 0 3 0 3 0M131 377l1 3 0 3 0 2 0 3 1 3 0 3M120 387l2 0 3 0 2 1 3 0 2 1M127 388l0 6M146 385l-3 0-3-1-2 0-3 0-3 0M139 393l0-9M131 362l0 2 0 3 1 2 0 3 0 2 0 3M120 367l3 0 3 0 3 1 2 0M124 361l1 6M140 363l0 2 0 3 1 3 0 3 1 3M141 371l-9-1M147 371l-6 0M172 379l-2 0-3-1-3 0-2 0-3 0-2-1-3 0-2 0-3 0-2-1M156 391l0-14M146 383l10-1M146 387l10-1M151 377l0 6M163 390l0-12M156 383l7 0M156 387l7 0M172 383l-9 1M167 383l0-5M160 364l0 3 1 3 0 2 0 3 0 3M161 369l-3 0-3 1-3 0-2 0-3 0M153 377l0-7M155 364l-1 6M172 371l-11 0M167 378l0-7M167 365l0 6M139 320l0 3 1 2 0 3 0 2 0 3 1 2 0 3 0 2 0 3 1 2 0 3 0 2 0 3 0 2 1 3 0 2 0 3M120 336l3 0 2 0 3 0 2 0 3 0 3 0 2 0 3 0M120 351l3-1 2 0 3 0 3 0 3-1 2 0 3 0 3 0M132 350l0 2 1 3 0 2 0 2 1 3M120 355l13 0M131 336l0 3 0 2 0 3 0 3 0 3M120 343l11-1M125 343l0 2 0 3 0 2M142 344l-3-1-3 0-3-1-2 0M138 349l-1-6M127 319l0 3 0 3 1 3 0 2 1 3 0 3M172 347l-2 0-3 0-2-1-3 0-3 0-2-1-3 0-2 0-3 0-2-1-3 0-3 0M159 364l1-2 0-3 0-3 0-2 0-3 0-3 0-2M142 355l3-1 2 0 3 0 2-1 3 0 2 0 3 0M152 364l0-3 0-2 1-3 0-2M152 359l8 0M150 345l0 3 0 3 0 3M172 358l-2 0-3 0-2 0-3-1-2 0M166 365l0-7M164 358l1-12M160 352l5 0M172 351l-7 1M154 321l0 3 0 3 0 2 0 3 0 2 0 3 0 3 0 2 0 3M154 335l-3 0-2 0-3 0-3 0-2 0M172 332l-2 0-3 0-3 0-2 0-3 0-2 0-3 0M165 346l-1-3 0-2-1-3 0-3-1-3M172 341l-8 0M162 322l0 2-1 3 0 3 0 2M166 322l1 10M212 361l-40 1M189 388l0-26M172 378l17 0M180 389l0-11M172 383l8 0M176 378l0 5M180 384l9 1M172 369l17 1M181 369l-1 9M182 362l1 7M176 362l1 7M200 386l-2-25M189 376l11 0M189 381l11 0M195 376l0 5M189 369l10 1M194 369l0 7M194 361l0 8M199 366l-5 0M212 371l-13 0M212 377l-12 0M206 386l0-9M206 377l0-6M205 371l0-10M199 367l6-1M212 365l-7 0M213 338l-2 0-3 0-2 0-3 1-3 0-2 0-3 0-2 0-3 0-2 0-3 0-2 0-3 0-3 0-2 0-3 1M195 361l-2-22M184 362l0-3 0-3 0-3-1-3 0-2 0-3 0-3 0-3M172 352l12 1M179 362l0-9M172 348l3 0 3-1 2 0 3 0M178 347l-1 3 0 2M178 339l0 3 1 3 0 2M183 344l-5-1M183 351l11 1M191 361l-1-10M184 355l7 0M183 347l11 0M213 347l-19 1M204 361l0-14M195 356l9 0M194 352l10 0M198 348l0 4M213 354l-9-1M213 357l-9 1M208 354l0-7M204 347l0-8M213 343l-9 0M208 347l1-4M193 324l0 3 0 3-1 3 0 3 0 3M185 324l0 2 0 3 0 2-1 3 0 3 0 2M185 329l-3 0-4 0-3 0-3 0M179 339l1-10M178 323l0 3 1 3M193 331l-9-1M189 324l-1 7M202 325l0 14M202 332l-9 0M214 330l-12 1M206 338l1-8M208 325l0 5M170 256l0 3 0 2-1 3 0 2-1 3 0 2 0 3 0 2-1 3 0 2 0 3-1 2 0 3 0 2-1 3 0 2 0 3-1 3 0 2 0 3-1 2 0 3-1 2 0 3 0 2-1 3M120 304l2-1 3-1 2-1 3-1 2-1 3-1 2-1 2-1 3-1 2-1 3 0 2-1 3-1 2-1 2-1 3-1 2-1 3-1 2-1M142 295l0 3 0 3 0 3-1 2 1 3 0 3-1 3 0 2 0 3M120 311l3 0 2-1 3 0 3 0 3-1 2 0 3 0 3-1M131 309l1 4 0 3 0 3M126 310l1 3 0 3 1 3M130 300l0 2-1 3 0 2-1 3M164 303l-3 0-3-1-2 0-3 0-3 0-3 0-2-1-3 0M151 321l0-3 0-2 0-3 0-3 1-3 0-2 0-3M142 309l10-1M163 313l-3 0-3 0-3 0-3 0M153 291l0 3 0 3 0 2 1 3M165 295l-3 0-3 0-3 0-3-1M120 290l2-1 3-1 2-1 2-1 3-1 2-1 2-1 2-1 3-1 2-1 2-1 3-1 2-2 2-1 3-1 2-1 2 0 3-1 2-1 2-1 3-1M141 281l-1 2 0 3 0 3 0 2-1 3 0 3M120 295l3 0 3 0 2-1 3 0 3 0 3-1 2 0M129 294l1 3 0 3M129 286l0 3 0 3 0 2M157 274l-1 2-1 3-1 3-1 2-1 3 0 3-1 2M153 285l-2 0-3 0-3 1-2 0-3 0M168 277l-3 1-3 0-2 1-3 1-3 1M150 254l0 3 0 3 0 3 0 2 1 3 0 3 0 3 0 2M120 270l3 0 2-1 3-1 2 0 3 0 2 0 3 0 2-1 3 0 2 0 3-1 2-1M139 267l-1 3 0 2 0 3 0 2-1 3 0 2M141 254l-1 2-2 3-1 3 0 3-1 3M215 297l-3 0-2 0-3 0-2 0-3 0-2 1-3 0-2 0-3 1-3 0-2 0-3 0-2 0-3 0-2 1-3 0-2 0-3 0-2 1-3 0M183 323l0-2 0-3 0-3 0-2 0-3 0-3 0-2-1-3 0-3M170 322l1-2 0-2 0-3 0-2 1-3 0-2 1-3 0-2 0-3M163 311l3 0 3 0 3 0M162 318l3 0 3-1 3 0M172 310l3 0 2 1 3 0 3 1M172 306l3 0 2-1 3 0 2 0M201 325l-1-3 0-2 0-3-1-3 0-3 0-2-1-3 0-3 0-2-1-3M183 312l2 0 3 0 3 0 3 1 2 0 3 0M194 324l-2-12M189 299l0 3 1 2 0 3 1 3 0 2M198 306l-8 0M214 313l-2 0-3 0-2-1-3 0-2 0-3-1M207 325l-1-13M200 319l7 0M204 312l0 7M205 312l0-3-1-3 0-3 0-3 0-2M198 304l6 1M214 305l-10-1M209 313l1-8M209 305l0-8M215 301l-6 0M196 258l0 2-1 3 0 3-1 2-1 3 0 2-1 3-1 2 0 3 0 3-1 2-1 3 0 2-1 3 0 2-1 3M193 274l-3 1-2 0-3 1-3 1-2 0-3 1-2 1-3 0-2 1-3 1M179 300l0-3 1-2 0-3 0-2 1-3 0-2 0-3 0-2 0-3M166 287l3 0 3 1 3 0 2 0 3 0M174 300l0-2-1-3 0-2-1-3 0-2M165 293l7-1M173 295l3 0 4 0M173 279l0 9M190 284l-9 0M189 291l-9 2M187 257l-1 3-1 2-1 3 0 2-1 3-1 2-1 3 0 2M184 267l-3 0-2 0-3 1-2 0-3 0-2 0M177 257l0 2 0 3-1 3 0 2M216 275l-3 0-2 0-3 0-2-1-3 0-3 0-2 0-3 0-2-1M215 282l-2 1-3 0-3 0-3 0-3 0-2 1-3 0-3 0-3 0M203 298l0-3 1-3 0-3 1-3 0-3M195 298l0-3 0-2 0-3 0-3 0-3M215 291l-3 0-3 0-2 0-3 0M208 297l-1-6M208 291l0-8M206 283l0-3-1-3 0-3M199 284l-1-3 0-2 0-3-1-2M198 279l7-1M202 258l0 3 0 3 1 2 0 3 0 2 0 3M203 268l-3-1-3 0-3 0M337 353l-124 6M336 430l-126-6M284 480l2-53M243 480l-3-54M209 455l33 0M225 480l0-25M209 468l16 1M215 480l1-12M208 473l7 0M208 478l7-1M212 473l0 4M215 475l10 0M221 480l0-5M216 455l1 13M209 461l7-1M214 461l0 7M209 465l5 0M217 464l-3 0M213 455l1 6M225 462l-8 0M225 467l18 1M236 480l-1-13M225 474l10 0M230 480l-1-6M231 467l0 7M235 474l8 0M239 480l0-6M232 455l0 12M225 460l7 0M225 463l7 0M228 455l1 5M242 461l-10-1M236 455l1 5M210 440l31 1M224 441l-1 14M209 447l15 0M215 447l0 8M219 447l0 8M217 440l0 7M213 440l0 7M210 443l3 0M232 441l1 14M233 448l-9 0M227 441l1 7M241 446l-8 1M237 455l-1-9M233 452l4 0M224 425l0 16M218 425l-1 15M210 431l8 0M210 436l7 0M214 431l0 5M224 431l-6 0M224 436l-7 0M220 441l0-5M232 425l-1 16M232 432l-8 0M227 425l0 7M241 433l-9 0M236 441l-1-8M232 437l3 0M237 425l0 8M266 480l3-53M242 457l26-1M255 480l1-24M242 467l14-1M248 480l1-13M243 474l5 0M249 473l6 0M249 456l-1 11M242 463l7 0M256 462l-7 0M255 470l12 0M259 480l1-10M255 476l4 0M259 474l8 0M263 470l0 4M256 464l11-1M262 463l-1 7M263 456l0 7M256 461l7 0M259 461l0 2M267 460l-4 0M241 444l27 0M256 444l0 12M242 452l14-1M249 452l0 4M249 444l0 8M268 449l-12 0M263 456l0-7M263 444l0 5M254 426l-1 18M241 433l12 1M246 433l0 11M241 438l5 0M253 440l-7 0M246 426l0 7M269 436l-16 0M261 444l0-8M258 444l0-8M253 441l5 0M258 440l3 0M261 426l0 10M269 432l-8-1M268 452l17 0M267 462l17 1M276 480l1-17M267 472l9 0M271 480l1-8M266 477l5-1M271 477l5 0M271 463l0 9M276 467l-5 0M276 473l8 0M276 469l8 0M281 463l0 6M276 452l0 11M267 458l9 1M272 458l0 5M285 457l-9 0M280 452l-1 5M268 442l17 0M278 442l0 10M268 447l10 0M274 447l0 5M269 436l17 0M278 436l0 6M274 436l0 6M277 427l0 9M269 431l8-1M272 431l0 5M274 427l0 4M335 454l-50-2M310 480l1-27M296 480l-1-28M284 467l11 0M290 480l0-13M284 475l6 0M284 472l6 0M287 467l0 5M290 475l6 0M285 460l10 0M289 460l0 7M295 464l16 0M304 480l-1-16M296 470l7 0M298 464l1 6M303 473l7 0M301 453l0 11M295 459l6 0M311 458l-10 0M305 464l0-6M307 453l-1 5M335 469l-24 1M322 480l0-11M317 480l1-11M310 475l7 0M317 474l5 0M335 475l-13 0M329 480l0-5M327 475l0-6M320 469l1-16M311 463l10 0M317 469l0-6M316 453l0 10M311 458l5 0M321 459l-5 0M335 461l-14 0M328 469l0-8M321 464l7 1M327 461l-1-7M321 457l5 1M331 461l0-7M314 453l1-24M285 443l30-1M299 453l0-10M291 452l0-9M285 448l6 0M291 447l8 0M295 443l0 4M308 453l0-11M299 447l9 0M304 442l0 5M308 447l6 0M298 428l0 15M286 436l12 0M291 436l0 7M298 439l-7 0M291 428l0 8M286 431l5 1M308 428l0 14M308 436l-10 0M304 442l-1-6M303 428l0 8M303 431l-5 0M315 434l-7 0M336 444l-22 0M323 454l0-10M314 450l9 0M318 444l0 6M329 454l-1-10M324 444l0-15M315 438l9 0M319 444l0-6M336 436l-12 0M331 444l-1-8M324 441l6-1M336 440l-6 0M329 436l0-7M259 426l-1-69M211 392l48 0M237 425l-2-33M211 409l25-1M221 425l-1-16M210 416l11 0M217 425l0-9M216 409l0 7M221 418l16 0M229 425l1-7M225 425l0-7M227 408l0 10M236 412l-9 1M231 418l0-5M232 408l0 4M220 392l1 17M211 400l10 0M215 400l0 9M211 404l4 0M221 404l-6 0M217 400l0 4M216 392l0 8M221 397l-5 0M229 392l0 16M229 400l-8 0M229 403l-8 0M224 392l0 8M236 401l-7 0M236 413l23-1M248 426l0-14M237 420l11 0M244 426l0-6M243 412l0 8M248 419l11 0M247 392l1 20M236 401l11 0M242 401l-1 12M236 408l5 0M248 408l-7 0M245 412l0-4M241 392l0 9M247 397l-6 0M259 400l-12 0M259 407l-11 0M254 412l0-5M253 407l0-7M252 392l0 8M252 396l-5 0M259 396l-7 0M233 358l0 34M212 375l21-1M223 374l-1 18M212 385l11 0M218 385l0 7M233 385l-10 0M228 392l0-7M221 359l-1 15M212 367l8 0M233 366l-13 1M225 374l0-8M233 370l-8 0M229 374l-1-4M228 370l0-4M226 359l0 7M233 363l-7-1M258 376l-25 0M243 392l1-16M233 383l10 0M237 392l0-9M233 387l4 0M237 388l6 0M238 376l0 7M258 384l-15 0M250 392l-1-8M243 388l6 0M254 392l1-8M249 388l5 0M253 384l-1-8M243 381l9-1M248 376l0 5M245 358l0 18M245 367l-12 0M241 376l-1-9M233 372l7 0M245 371l-5 1M239 358l0 9M239 362l-6 0M245 362l-6 0M258 366l-13 0M253 376l0-10M245 372l8 0M249 366l1 6M252 357l0 9M252 363l-7-1M258 361l-6 1M336 396l-77 0M305 428l-1-32M276 427l1-31M259 412l18-1M270 427l-1-16M259 420l10 0M265 427l0-7M265 423l4 0M265 412l0 8M269 416l-4 0M269 419l7 0M269 423l7 1M273 427l0-3M269 416l7 0M266 396l0 16M259 402l7 0M259 408l7 0M262 396l0 6M259 398l3 0M277 405l-11 0M277 401l-11 0M272 405l0-4M269 405l0-4M272 396l0 5M274 396l0 5M276 413l29 1M289 428l-1-14M276 422l12 0M281 427l0-5M282 414l0 8M276 417l6 1M288 419l-6 0M288 420l17 0M298 428l0-8M297 414l1 6M292 396l-1 18M277 405l14 0M286 405l-1 9M281 405l0 9M277 409l4 0M286 409l-5 0M291 409l-5-1M284 396l0 9M305 407l-14 0M299 414l-1-7M305 411l-7 0M301 414l0-3M297 396l0 11M297 402l-5 0M294 407l0-5M304 400l-7 0M304 404l-7 0M301 404l0-4M325 429l-2-33M305 411l19-1M305 419l19-1M316 429l0-10M311 429l-1-10M305 424l5 0M316 424l9 0M320 429l0-5M321 418l0 6M324 421l-3 0M314 410l0 9M319 410l0 9M319 415l-5 0M324 413l-5 0M312 396l0 14M304 405l8 0M308 405l0 6M324 402l-12 0M319 410l0-8M324 406l-5 0M319 396l0 6M336 414l-12 0M336 421l-11 1M331 429l-1-8M330 421l-1-7M324 418l6 1M327 414l0 4M336 406l-12 0M329 414l0-8M331 406l-1-10M324 401l7 0M327 396l0 5M336 402l-5 0M333 402l1-6M336 399l-3 0M292 396l2-41M278 396l2-40M258 376l21 0M267 396l0-20M258 384l9 0M259 389l8-1M262 396l0-8M262 392l5 0M263 384l0 4M267 387l11 0M272 396l0-9M273 376l0 11M267 382l6 0M270 382l-1 5M278 381l-5 0M278 384l-5 0M258 367l21-1M269 367l0 9M264 367l0 9M279 370l-10 1M275 376l0-6M272 376l0-6M279 374l-4 0M271 356l0 11M263 357l0 10M258 362l5 1M271 361l-8 0M268 367l0-6M280 362l-9 0M279 371l14 0M278 382l15 0M284 396l0-14M278 388l6 0M284 390l8 0M286 371l1 11M279 376l7 0M282 376l0 6M279 379l3 0M293 376l-7-1M290 371l0 5M287 355l1 16M279 364l9 1M280 359l8 0M284 355l0 4M294 363l-6 0M294 367l-6 0M294 358l-7 0M337 375l-44 1M318 396l-1-21M306 396l0-20M293 384l13 0M298 396l-1-12M292 390l6 0M295 396l0-6M298 390l8 0M302 396l0-6M299 376l0 8M293 379l6 0M306 380l-7 0M306 385l12 1M312 396l0-11M306 392l6 0M312 390l6 0M315 396l0-6M312 375l1 10M306 380l7 0M310 375l0 5M317 380l-4 0M337 386l-19 1M329 396l0-10M322 396l0-9M318 390l4 1M322 392l7 0M326 396l0-4M326 387l0 5M329 389l-3 0M336 391l-7 0M333 396l0-5M332 391l0-5M327 387l1-12M317 382l10 0M323 387l0-5M320 387l0-5M323 375l0 7M337 382l-10 0M333 386l0-4M332 382l0-7M311 375l-1-21M294 364l16 1M300 376l0-11M293 370l7 0M297 365l0 5M300 369l10 0M304 376l0-7M305 365l1 4M302 354l1 11M294 361l9 0M299 355l0 6M310 359l-7 1M306 365l0-5M326 375l0-22M310 364l16-1M318 375l-1-12M310 369l7 0M317 369l9 0M321 375l0-6M319 354l0 9M310 358l9 0M314 354l0 4M337 366l-11 0M337 370l-11 0M330 375l0-5M333 370l-1-4M337 358l-11 0M332 366l0-8M273 356l-4-93M214 310l57 0M241 358l1-48M214 330l28 0M229 358l-1-28M213 344l15 0M213 352l16 0M221 359l0-7M217 359l0-7M217 355l4 1M221 344l0 8M222 330l0 14M213 337l9 0M219 337l0 7M222 341l-3 0M228 337l-6 0M228 334l-6 0M228 346l13 0M235 358l1-12M229 352l6 0M231 358l0-6M229 355l2 0M235 352l6 0M228 339l13 0M234 339l0 7M235 330l0 9M228 334l7 0M242 333l-7 0M225 310l1 20M214 319l12 1M220 320l1 10M221 310l0 10M214 315l7 0M242 321l-16 0M232 330l0-9M226 326l6 0M237 330l0-9M242 325l-5 0M234 310l0 11M242 316l-8 0M241 337l31-1M255 357l-1-20M241 348l14-1M249 357l1-10M249 353l6 0M241 342l14 1M249 342l0 5M249 337l-1 5M255 346l17-1M264 357l-1-12M255 350l8 0M263 351l9 0M267 345l0 6M261 336l0 10M255 342l6 0M256 310l-2 27M242 320l13 1M242 329l13 0M247 329l0 8M252 329l-1 8M251 333l-4 0M248 321l0 8M242 324l6 0M255 324l-7 0M250 329l1-5M248 310l0 11M242 316l6 0M255 315l-7 1M271 324l-16 0M261 336l0-12M254 330l7 0M258 324l0 6M271 330l-10 0M266 336l0-6M261 333l5 0M265 330l0-6M262 310l-1 14M262 316l-7-1M262 320l-7 0M258 324l0-4M258 320l0-5M258 310l0 5M271 317l-9 1M267 324l0-7M262 321l5-1M267 310l0 7M271 314l-4 0M241 261l0 3 1 2 0 3 0 3 0 2 1 3 0 2 0 3 0 2 0 3 0 2 1 3 0 3 0 2 0 3 0 2 1 3 0 2 0 3M215 283l3 1 2 0 3 0 2 0 3 0 2 0 3 0 2 0 3 0 2 0 3 0M231 284l-1 26M215 298l16 0M221 298l1 12M215 291l3 0 2 0 3 0 3 0 2 0 3 0M223 291l0 7M218 291l0 7M227 291l0 7M225 284l-1 7M244 296l-13 1M245 304l-14 0M236 310l0-6M239 304l0-8M244 300l-5 0M243 290l-12 1M237 296l0-6M241 296l0-6M227 260l0 3 0 2 0 3 1 3-1 2 1 3 0 2 0 3 0 3M216 274l3 0 3 0 3 0 2 0M222 274l0 3 0 3 0 4M216 267l3-1 3 0 2-1 3 0M221 260l0 6M242 272l-15 0M236 284l1-12M243 277l-7 1M235 261l0 3 1 2 0 3 0 3M236 267l-3 0-3 0-3 0M270 289l-27 1M255 310l0-20M244 301l11-1M251 310l0-10M245 306l6 0M251 305l4 0M244 295l11 1M250 296l0 4M250 290l0 6M270 299l-15 0M262 310l0-11M255 306l7-1M258 310l0-5M271 305l-9 0M266 310l0-5M269 310l0-5M266 305l1-6M264 299l0-10M270 293l-6 0M269 275l-27-1M256 290l1-15M249 290l1-15M243 283l7-1M250 282l6 0M261 290l0-15M256 283l5 0M256 286l5 0M270 282l-9 0M265 282l0-7M270 279l-5 0M258 263l0 12M250 262l1 13M250 269l-8-1M258 268l-8 0M269 269l-11 0M265 275l0-6M269 271l-4 0M264 263l0 6M338 310l-67-2M308 354l1-45M272 333l36 0M294 355l0-22M272 348l22-1M285 355l0-8M279 356l-1-9M272 352l6 0M282 356l0-9M285 351l9 0M290 347l0 4M280 333l1 14M272 341l8 0M277 341l0 6M272 345l5 0M277 333l0 8M294 340l-14 0M287 347l0-7M287 333l1 7M284 333l0 7M284 336l-4 0M294 346l14 0M302 354l-1-8M300 333l0 13M294 338l6 0M308 341l-8-1M288 309l-1 24M271 321l17 0M278 321l0 12M271 326l7 0M275 326l0 7M287 327l-9 1M284 321l0 6M277 308l1 13M271 314l6 1M271 312l6 0M275 312l0 2M288 316l-11 0M283 321l0-5M283 309l1 7M288 313l-4 0M299 309l0 24M299 320l-11 0M299 327l-12 1M292 333l0-5M295 333l0-6M294 328l1-8M299 323l-4 0M299 315l-11-1M292 320l0-5M294 309l0 6M309 322l-10 0M309 327l-10 1M303 333l0-6M304 327l0-5M309 315l-10-1M304 322l0-7M304 309l-1 6M338 333l-30 0M318 354l2-21M308 342l11 0M308 349l11-1M314 354l0-6M313 342l0 6M313 333l0 9M337 342l-18 1M330 353l0-11M324 353l0-10M324 348l6-1M326 342l1-9M324 343l-1-10M320 337l3 0M331 342l0-9M337 337l-6 0M327 333l-2-23M309 322l17 1M319 333l1-10M320 327l7 0M318 310l1 13M309 316l10 0M325 315l-6 0M338 320l-12 0M338 325l-11 1M331 326l0-6M310 309l-1-43M270 286l39 0M291 309l0-23M270 299l21 0M281 308l0-9M276 308l0-9M276 305l5-1M287 309l-1-10M281 304l6 0M283 299l1 5M281 302l3 0M287 302l-3 0M287 304l4 0M278 286l0 13M270 291l8 0M270 294l8 1M274 291l0 3M291 292l-13-1M284 299l0-7M288 299l-1-7M284 296l4 0M291 296l-3 0M283 286l0 6M291 298l18-1M301 309l0-12M291 304l10 1M297 309l0-4M297 298l0 7M291 301l6 0M294 298l0 3M301 301l-4 0M301 303l8 1M305 297l0 6M298 286l1 12M291 291l7 1M296 292l0 6M295 286l0 6M309 291l-11 0M302 297l1-6M299 294l4 0M306 297l0-6M309 294l-3 0M304 286l0 5M309 288l-5 0M289 265l-1 21M269 276l19-1M281 275l0 11M270 282l11 0M275 282l0 4M277 282l0 4M275 276l0 6M270 279l5 0M272 276l0 3M278 276l0 6M288 279l-7 1M285 275l0 4M276 264l1 12M269 271l8-1M273 271l0 5M274 264l-1 7M277 267l-3 0M282 264l0 11M282 269l-5 0M289 269l-7 0M309 275l-21-1M297 286l0-11M288 281l9-1M292 286l0-6M293 274l-1 6M297 278l-4 0M303 286l0-11M297 280l6-1M300 275l1 5M297 277l3 1M309 282l-6-1M307 286l0-5M305 281l1-6M300 266l1 9M300 270l-11 0M294 275l0-5M291 274l0-4M296 275l0-5M294 272l2 0M294 265l0 5M297 265l0 5M309 270l-9 1M304 275l0-5M305 266l0 4M338 287l-29-1M326 310l0-23M309 300l17-1M319 310l-1-10M319 303l7 1M316 287l0 13M309 295l7-1M312 294l0 6M309 297l3 0M309 290l7 0M313 290l0 4M313 286l0 4M326 293l-10-1M321 299l0-7M321 287l0 5M321 289l-5 0M319 292l0-3M318 287l0 2M338 298l-12 0M332 310l0-12M326 304l6 0M338 303l-6 1M338 292l-12 0M333 298l0-6M329 298l0-6M332 292l0-5M321 287l1-20M309 276l12 0M314 287l0-11M309 281l5 0M311 276l0 5M314 281l7 0M316 267l0 9M309 272l7 0M313 272l0 4M312 267l0 5M309 270l3 0M321 271l-5 0M339 277l-18 0M329 287l1-10M321 282l9 1M326 287l0-5M326 277l0 5M321 280l5 0M330 280l-4-1M338 281l-8 0M335 287l0-6M329 284l6-1M332 281l0 2M338 283l-3 0M335 281l0-4M332 281l0-4M330 277l0-9M321 272l9 0M326 277l0-5M326 268l0 4M335 277l0-9M330 272l5-1M332 268l0 4M339 273l-4 0M339 271l-4 0M336 271l0-3M341 158l-3 0-2 0-3-1-2 0-3 0-2 0-3 0-2 0-3 0-2 0-3 0-2 0-3 0-2 0-3 0-2 0-3 0-2 0-3 0-2 0-3 0-2-1-3 0-2 0-3 0-2 0-3 0-3 0-2 0-3 0-2 0-3 0-2 0-3 0-2 0-3-1-2 1-3-1-2 1-3 0-2 0-3 0-2 0-3 0-2-1-3 0-2 1-3 0-2 0-3 0-2-1-3 0-2 0-3 0-2 0-3 0-2 0-3 0-2 0-3 0-2 0-3 0-2 0-3 0-2 0-3-1-2 0-3 0-2 0-3 0-2 0-3 0-2 0-3 0-2-1-3 1-2-1-3 0-2 0-3 0-2 0-3 0-2 0-3 0-2 0-3 0-2 0-3 0M201 258l0-2 1-3 0-2 0-3 0-2 1-3 0-2 0-3 0-2 1-3 0-2 0-3 0-2 0-3 1-3 0-2 0-3 0-2 0-3 1-2 0-3 0-2 1-3 0-2 0-3 0-2 1-3 0-2 0-3 0-2 0-3 0-2 1-3 0-2 0-3 1-3 0-2 0-3 0-2 1-3 0-2M120 225l2 0 3-1 2 0 3-1 2-1 3-1 2 0 3-1 2-1 3 0 2-1 3-1 2-1 3 0 2-1 3 0 2-1 2-1 3-1 2 0 3-1 2-1 3 0 2-1 3-1 2-1 3 0 2-1 3-1 2 0 3-1 2-1 2-1 3 0 2-1M174 256l0-2 0-3-1-3 0-2 0-3-1-2 0-3 0-3-1-2 0-3 0-2-1-3 0-3 0-2-1-3 0-3-1-2M150 254l1-2 0-3 0-2 0-3 1-2 0-3 0-3 1-2-1-3 1-2 0-3 0-3 1-2 0-3 0-2M120 229l2 1 3 1 2 1 2 1 2 1 3 1 2 1 2 1 2 1 3 1 2 2 2 1 2 1 2 1M137 253l0-2-1-3 0-2-1-3 0-2 0-3-1-2M131 222l1 3 1 2 1 2 1 3 0 2 1 3M153 232l2 0 3 0 3 0 2 1 3 0 3 0 2 0M151 244l3 0 3 0 3 0 2 1 3 1 3 0 2 1 3 0M171 231l3 0 2-1 3 0 3-1 2-1 3-1 2-1 3-1 2-1 3 0 2-1 3-1 3-1M173 248l3-1 2 0 3-1 2-1 3 0 2-1 3-1 2-1 3-1 2-1 3-1 2-1M191 258l0-3 0-2-1-3 0-3 0-2 0-3M174 249l2 0 3 0 3 0 3 0 3-1 3 0M184 244l-1 5M188 226l0 3 0 3-1 3 1 3-1 3 0 2M204 231l-3 0-3 0-2 1-3 0-2 1-3 0M199 223l-1 3-1 3 0 3M198 204l-1 2-1 2-1 3-2 2-1 2-1 3-1 2-1 2-1 2-1 3M170 222l2-1 3 0 3-1 3-1 2 0 3-1 3-1 2 0M181 208l-1 3 0 3-1 3-1 3M205 212l-2 0-3 0-3-1-3 0M180 154l-1 3-1 2-1 3-1 2-1 3 0 2-1 3 0 2-1 3-1 2-1 3 0 2-1 3-1 2-1 3-1 2 0 2-1 3-1 2-1 3-1 2 0 3-1 2-1 3M170 154l-1 2-2 2-1 3-1 2-1 2-1 3-1 2-1 2-1 2-1 3-2 2-1 2-1 2-1 3-2 2-1 2-2 2-1 2-1 3-1 2-1 2-2 2-1 2-1 3-1 2-1 2-1 3-1 2-1 2-2 2M120 190l3-1 2-1 3-1 2 0 3-1 2-1 3-2 2 0 3-1 2-1 3-1 2-1 3-1 2 0 3-1M120 197l3 0 2 0 3-1 2 0 3 0 3 0 2 0 3 0 2-1 3 0 3-1M126 197l1 2 1 2 1 3 1 3 1 2 1 3 1 2 2 2 1 3M134 196l0 2 1 3 1 2 0 3 1 2 1 3 1 2M136 206l-3 0-3 1M137 184l-1 2-1 3-1 2-1 3-1 2M146 181l0 2 1 3 0 3 0 3 0 2M142 153l0 3 1 2 0 3 0 2 1 3 0 2 1 3 1 2 0 2 1 3 0 2M120 173l3 0 2 0 3 0 2 1 3 0 2 0 3 0 3 1 2 0 3 0M135 174l-1 2-1 3 0 2-1 3-1 2M131 153l1 3 1 2 0 3 2 3 1 2 0 3 1 3 2 2M157 154l-1 2-1 3-1 2-1 2-1 3-1 2 0 2-1 3 0 2-1 3-1 2M152 167l-2 0-3 0-3 0M164 165l-12 4M171 181l-2 0-3 1-3 0-3 0-3 1-3 0M145 218l1-2 1-3 1-2 1-2 1-3 2-2 0-2 2-3 0-2 1-3 1-2 1-3 2-2 1-2 1-3M146 200l3 1 3 1M165 201l-3-1-2-1-3 0-3 0M174 173l-3-1-2-1-2-1-3 0-2-1M165 182l-1-3 0-2-1-3 0-2-1-3M207 196l-3-1-2 0-2-1-3-1-2-1-3-1-2-1-2-1-3-1-2-1-2-1-3-1-2-1-2-1-3-1M179 209l0-2 1-3 1-2 1-3 0-2 1-2 1-3 1-2 1-2M167 194l3 0 3 0 2 0 3 0 3 0 3-1M197 204l-1-3-1-3-1-2-1-3-1-3M210 168l-3 1-2 0-3 1-2 0-3 1-2 1-3 0-2 1-2 1-3 0-2 1-3 0-2 1-3 0-2 1M197 192l-1-2-1-2-1-3-1-2-1-3-1-2-2-3-1-2M184 187l-1-3-1-2-1-2 0-3-1-2M208 186l-3-1-2 0-3-1-2 0-3-1-2-1M197 183l1-2 1-3 1-3 0-2 1-3M209 178l-3-1-3-1-4-1M184 154l1 3 1 3 0 2 1 3 1 2 1 3 1 2M188 167l-2 0-3 1-3 0-2 1-3 0M200 155l0 2 0 3 0 2 0 3 0 3 0 2M275 264l5-108M205 213l3-1 2-1 3 0 2 0 3-1 2 0 3-1 2 0 3 0 2-1 3 0 2-1 3 0 2-1 3 0 2 0 3-1 2-1 3 0 2-1 3 0 2 0 3-1 2 0 3-1 2 0 3-1 2 0 3 0M246 262l0-3 0-3 0-2 0-3 0-2 0-3 1-2 0-3 0-3 0-2 0-3 1-2 0-3 0-3 0-2 0-3 0-2 0-3 0-3 1-2 0-3 0-2M204 232l2 0 3-1 2 0 3 0 2 1 3 0 3 0 2 0 3 0 2-1 3 0 3 0 2 0 3 0 2 0 3 0 2 0M219 260l0-3 1-2 0-3 0-3 0-2 1-3 0-2 0-3 1-2 0-3 0-3M203 241l2 0 3 0 3 1 2 0 3 1 2 0 3 1M202 248l3 0 2 1 3 0 2 0 3 0 3 0 2 0M210 259l0-3-1-2 0-3-1-2M214 259l0-2 0-3-1-3 0-2M232 261l0-3 1-3 0-2 0-3 1-3 0-2 0-3 1-3 0-2 1-3 0-3M221 245l2 0 3 0 3 0 2 0 3 0M227 231l0 3 0 3 0 3 0 2 1 3M235 238l-2 0-3 0-3 0M234 247l2 0 3-1 2 0 3 0 3 0M233 253l3 0 2 0 3 0 2 0 3 0M240 261l0-3 0-2 0-3M235 241l3 0 3-1 3 0 3 0M240 240l1 6M241 231l-1 3 0 4 0 3M223 209l0 3 0 3 0 3 0 2 1 3 0 3 0 3 0 2M205 219l2 1 3 1 3 1 3 1 2 1 3 1 3 0M248 218l-2 1-3 0-3 0-3 0-2 0-3 1-3 0-3 0-2 0M237 231l-2-12M241 231l0-2 1-3 0-2 0-3 1-2M236 225l6 0M248 224l-6 0M237 207l1 3 0 3 0 3 0 3M249 211l-3 0-3 0-3 0-2 0M248 226l2 0 3 0 3 1 2 0 3 0 2 0 3 0 3 0 2 0 3 0 3 0M247 246l2 0 3 0 2 0 3 0 3 0 2-1 3 0 3 0 2 0 3 0 3-1M260 263l1-18M246 255l3 0 3 0 3 0 3 0 2 0M253 262l-1-7M252 246l0 3 0 3 0 3M260 255l15 0M267 263l-1-8M269 245l0 10M275 251l-6 0M264 227l0 2 1 3 0 3 0 2 0 3 0 2 1 3M247 236l3 0 2 0 3-1 2 0 3 0 2-1 3 0M257 235l0 3 1 2 0 3 0 3M257 226l0 3 1 3 0 3M276 235l-11 0M269 245l0-10M265 241l4 0M248 218l3 0 3 0 2-1 3 0 2 0 3-1 3 0 2 0 3 0 2-1 3 0M265 216l0 3 0 3 1 2 0 3M259 217l0 10M269 216l1 11M265 202l0 3 1 3 0 3 0 2 0 3M249 211l17 2M257 212l-1 5M256 204l0 8M265 206l-9 0M277 207l-12 0M272 201l0 6M240 155l0 3 0 3 0 2 0 3 0 2 0 3 0 2 0 3 0 2 0 3 0 2 0 3 0 3 0 2 0 3 0 2 0 3 0 2 0 3 0 2M209 177l2 0 3 1 2 0 3 0 3 1 2 0 3 0 2 0 3 0 3 1 2 0 3 0M207 196l2-1 3 0 3-1 2 0 3 0 2 0 3-1 2 0 3 0 2 0 3-1 3 0 2 0M218 194l1 3 0 3 0 2 0 3 0 2 0 3M206 204l3 1 2 0 3 0 2 1 3 0M213 205l0 3 1 3M229 193l-1 3 0 2 0 3-1 3 0 2 0 3M227 202l-8-2M224 179l1 3 0 3 1 2 0 3 0 3M215 178l0 3 0 2 1 3 0 3 0 3 0 3M233 179l0 3 0 3 1 2 0 3 0 2M234 187l-8 1M223 155l0 3 0 2 0 3 0 3 0 2 1 3 0 2 0 3 0 3M210 167l13 0M214 167l1 3 0 2 0 3 0 3M240 167l-17 0M232 179l1-12M224 173l9 0M240 173l-7 0M240 177l-7 0M237 177l0-4M240 170l-7 0M236 173l0-3M231 155l0 12M231 161l-8 1M227 167l0-6M226 155l0 6M240 161l-9 0M235 167l0-6M279 182l-39 2M261 203l1-20M240 195l3 0 2 0 3 0 3 0 2 1 3 0 3 0 2 1M251 204l0-8M256 203l1-7M251 183l-1 13M240 190l3 0 2 0 3 0 3 0M262 189l-11-1M254 196l1-8M255 183l0 5M278 194l-17-1M269 201l0-8M274 200l-1-6M270 193l0-11M262 187l8 0M265 193l0-6M266 182l1 5M278 189l-8 0M274 189l0-7M278 186l-4 0M262 156l1 27M263 170l-23 0M254 183l0-13M240 176l14-1M246 184l-1-8M240 180l5 0M250 183l0-7M250 180l4 0M247 170l-1 6M244 170l0 6M263 177l-9-1M259 183l0-6M258 176l0-6M254 173l4 1M263 173l-5 1M251 156l-1 14M251 161l-11 1M244 156l1 6M262 164l-11 0M257 170l0-6M256 156l1 8M279 171l-16 0M271 182l0-11M263 177l8 0M268 182l0-5M267 171l0 6M279 177l-8 0M274 182l0-5M275 177l1-6M279 174l-3 0M272 156l-1 15M272 165l-10 0M267 171l0-6M263 168l4 0M272 168l-5 0M267 156l0 9M267 161l-5 0M279 165l-7 0M280 161l-8 0M275 165l0-4M277 156l-1 5M340 200l-62-1M309 266l-1-67M277 225l32 1M275 249l34-2M289 265l0-16M275 258l14 0M284 264l-1-6M280 264l0-6M277 264l0-6M280 261l4 0M282 249l0 9M275 254l7 0M278 254l0 4M289 254l-7 0M286 249l-1 5M289 256l20 0M298 266l1-10M289 260l9 0M294 265l-1-5M294 262l4 0M296 265l0-3M293 256l0 4M295 256l1 4M303 266l0-10M298 261l5-1M303 261l6 1M303 263l6 1M306 266l0-2M299 248l0 8M294 248l0 8M289 251l5 0M299 252l-5 0M297 248l0 4M305 248l-1 8M304 252l-5-1M309 251l-5 0M309 249l-4 0M288 225l1 23M276 235l13 1M276 243l13-1M283 243l0 6M286 242l0 7M282 235l0 8M276 240l6 0M279 240l0 3M289 239l-7 0M285 243l0-4M285 235l0 4M284 225l0 10M276 231l8-1M289 229l-5 1M309 237l-20-1M300 248l-1-12M289 241l11 0M294 248l0-7M295 236l0 5M297 236l0 5M297 239l-2 0M309 243l-9 0M303 248l0-5M306 248l0-5M303 245l3 0M304 243l0-6M300 240l4 0M298 226l0 10M298 231l-9 0M294 236l0-5M294 225l-1 6M309 232l-11-1M302 237l0-6M298 234l4 0M305 237l0-6M302 234l3 0M309 234l-4 0M302 226l0 5M305 226l0 5M277 213l31-2M290 212l0 13M298 212l0 14M298 220l-8 0M294 225l0-5M293 212l0 8M293 216l-3-1M308 220l-10 0M303 226l0-6M298 222l5 0M308 216l-10 0M303 220l0-4M302 212l1 4M292 199l0 13M278 204l14 1M283 204l1 8M287 199l-1 5M298 199l1 13M299 205l-7 0M308 206l-9 0M339 232l-30 0M327 268l1-36M309 249l19 0M320 267l-1-18M309 259l10 0M315 267l1-8M309 263l7 0M312 267l1-4M316 263l4 0M314 249l-1 10M309 255l4 0M309 253l4 0M319 255l-6 0M316 259l0-4M319 258l-3 0M319 257l8 0M320 262l7 0M323 267l0-5M323 257l-1 5M319 260l3 0M327 259l-5 0M324 249l0 8M319 253l5 0M328 253l-4 0M316 232l1 17M309 242l8 0M313 242l0 7M309 245l4 0M311 245l0 4M317 246l-4 0M309 237l7 0M313 237l-1 5M309 239l3 0M316 239l-4 0M312 232l0 5M328 239l-12 0M322 249l1-10M317 245l6 0M319 249l0-4M328 244l-5 0M326 249l0-5M322 247l4 0M326 244l0-5M323 242l3 0M328 242l-2 0M321 232l1 7M322 236l-6 0M319 239l0-3M319 232l0 4M328 236l-6 0M325 239l0-3M323 239l0-3M328 238l-3 0M325 232l0 4M339 248l-11 0M339 259l-12 0M334 268l0-9M327 264l7 1M331 268l0-3M332 268l1-3M330 259l0 5M339 263l-5 0M339 265l-5 0M337 268l0-3M337 265l0-2M337 263l0-4M334 261l3 0M339 253l-11 0M333 259l1-6M330 259l1-6M331 256l2 0M339 256l-6 0M337 256l0-3M339 255l-2 0M333 253l0-5M331 253l0-5M331 250l2 0M336 253l0-5M333 250l3 0M339 239l-11 0M334 248l1-9M328 244l7 0M332 248l0-4M332 239l0 5M339 243l-4 0M333 239l0-7M328 236l5 0M330 232l0 4M339 235l-6 0M336 239l0-4M333 237l3 0M339 237l-3 0M336 235l-1-3M340 218l-32 1M325 232l1-14M315 232l0-13M309 227l6 0M309 223l6 0M311 223l0 4M315 226l10 0M319 232l0-6M315 229l4 0M317 232l0-3M317 226l0 3M322 232l0-6M319 229l3 0M322 229l3 0M319 219l0 7M315 223l4 0M326 222l-7 0M322 226l0-4M323 218l0 4M333 232l1-14M325 224l9 0M330 232l0-8M325 229l5 0M328 232l0-3M328 230l2 0M330 229l4 0M330 227l4 0M332 224l0 3M329 218l0 6M334 222l-5 0M331 218l0 4M334 220l-3 0M340 224l-6 0M339 228l-5 1M336 232l1-4M336 229l0-5M334 227l2 0M339 226l-3 0M337 228l0-2M340 222l-6-1M337 224l-1-3M334 223l2 0M337 221l0-3M322 218l0-18M308 211l14 0M315 219l0-8M308 214l7 0M316 200l0 11M308 205l8-1M311 204l0 7M322 205l-6-1M340 209l-18 0M329 218l0-9M322 212l7 1M340 214l-11-1M334 218l0-4M329 216l5-1M331 214l0 1M336 218l1-4M334 216l2 0M334 217l2 0M335 218l0-1M335 216l0 1M340 216l-4 0M338 216l0-2M335 214l0-5M332 214l0-5M329 211l3 1M332 212l3 0M340 211l-5 0M337 214l0-3M337 211l0-2M336 211l0-2M331 209l0-9M340 204l-9 0M336 209l0-5M334 209l-1-5M331 207l2 0M340 206l-4 0M338 209l0-3M336 204l0-4M340 202l-4 0M338 204l0-2M306 199l2-42M279 181l28 0M295 199l1-18M278 188l17 0M286 199l-1-11M278 193l7 0M285 193l10 0M291 199l0-6M290 188l0 5M287 181l0 7M282 181l1 7M287 185l-5 0M291 181l0 7M291 185l-4 0M296 184l-5 0M295 188l12-1M295 192l12 0M301 199l0-7M300 188l0 4M302 181l0 7M296 184l6 0M307 185l-5 0M305 181l0 4M279 167l28 1M294 168l1 13M279 174l16 0M288 174l0 7M284 174l0 7M279 178l5 0M288 178l-4 0M287 181l-1-3M285 167l0 7M290 168l0 6M294 171l-4 0M301 168l0 13M301 174l-6 0M301 171l-7 0M298 174l0-3M298 168l0 3M307 175l-6 0M303 181l0-6M307 177l-4 0M293 157l0 11M287 156l0 12M280 161l7 0M284 161l0 6M279 164l5 0M284 156l0 5M280 159l4 0M293 163l-6-1M301 157l0 11M301 162l-8 1M297 157l0 5M308 162l-7 0M340 177l-33 0M319 200l1-23M307 190l12 0M314 199l-1-9M306 196l7-1M312 177l0 13M307 184l5 0M307 186l5 0M320 184l-8 1M315 177l0 8M340 189l-20 0M329 200l0-11M324 200l0-11M319 195l5 0M324 194l5 0M340 194l-11 1M336 200l0-5M333 200l0-5M336 195l0-6M333 195l0-6M331 189l0-12M326 189l-1-12M320 183l5 0M325 184l6 0M340 183l-9 0M337 189l0-6M336 183l-1-6M331 180l5 0M321 177l0-20M307 165l14 0M307 170l14 1M314 177l0-7M315 165l0 5M318 165l0 5M321 168l-3 0M314 157l0 8M308 162l6 0M311 162l0 3M311 157l0 5M321 161l-7 0M332 177l0-20M321 167l11 0M326 177l0-10M321 172l5 0M326 172l6 0M329 177l0-5M326 175l3 0M329 174l3 0M330 167l0 5M325 157l1 10M321 162l4 0M321 164l5 0M332 163l-7 0M329 167l0-4M329 157l0 6M341 168l-9 0M336 177l0-9M332 173l4 0M332 171l4 0M340 173l-4 0M341 164l-9 0M337 168l0-4M337 164l-1-6M332 161l4 0M215 74l0 3 0 2 0 3 0 2 0 3 1 2 0 3 0 2 0 3 1 2 0 3 0 2 0 3 1 2-1 3 1 3 0 2 0 3 1 2 0 3 0 2 0 3 0 2 0 3 0 2 0 3 0 2 0 3 1 3 0 2 1 3 0 2M176 74l0 2 0 3 0 3-1 2 0 3-1 2 0 2 0 3 0 3 0 2-1 2 0 3 0 2-1 3 0 2 0 3 0 2-1 3 0 2 0 3 0 2-1 3 0 2 0 3 0 2-1 3 0 2 0 3-1 2 0 3 0 2-1 3M171 125l-3 0-3-1-2 0-3-1-2 0-3-1-2 0-3-1-2-1-3 0-2-1-3 0-2-1-3 0-2-1-3 0-2-1-3 0-2-1-3 0M148 154l0-3 0-3-1-2-1-3 0-2 0-3-1-3-1-2 0-3 0-2 0-3-1-3 0-2M120 134l2 1 3 1 2 0 3 1 2 1 3 0 2 1 2 1 3 0 2 1 3 1M135 153l-1-2-1-2-1-3-1-2-1-3 0-2-1-2M138 119l0 2-1 3-1 3-2 2-1 3-1 3-1 2M120 129l2-1 3-1 2-1 3-1 2-1 2 0 3-1M120 129l3 1 3 0 3 0 2 0 3 0M128 126l-1 4M145 131l-11-2M169 137l-2-1-3 0-2-1-3 0-2-1-2-1-3 0-2-1-3 0-2-1M158 154l-1-3-1-3-1-2-1-3 0-3-1-2-1-3-1-3M169 140l-3 1-2 0-2 1-3 0-2 1-3 0M158 134l0-3 0-3-1-3 0-2M159 74l-1 2-1 3-1 2 0 3-1 2-1 3-1 2 0 2-1 3-1 2-1 3 0 2-1 2 0 3-1 2-1 3-1 2-1 3 0 2M151 100l-3 0-2-1-3 0-3-1-2 0-3 0-2 0-3 0-2-1-3 0-2 0-3 0M138 119l-1-3-1-3 0-2-1-3 0-2-1-3 0-2 0-3M120 111l3-1 2-1 3-1 2 0 3-1 2-1M136 74l0 3 0 2-1 3 0 3 0 3 0 2 0 3 0 3-1 2M135 84l-2 1-3 0-2 1-3 1-2 0-3 0M153 91l-2-1-3 0-2-1-3 0-3-1-2 0-3-1M147 74l1 3 1 2 1 3 1 3 1 3 0 2M173 100l-2 1-2 0-3 1-2 1-2 2-3 0-2 1-2 1-3 1-2 1-2 1M161 123l-1-2 0-3 0-2-1-3 0-2 0-3-1-2M146 115l3 0 3 0 2 0 3 1 3 0M172 111l-2 0-3 1-2 1-3 1-2 0M174 90l-2 1-3 0-3 1-2 0-3 1-3 0-3 0-2 1M162 104l0-2 0-2 0-3 1-3 0-2M218 118l-2-1-3-1-2-1-2-1-3-1-2-1-2-1-3-1-2-1-3-1-2-1-2-1-3-1-2-1-2-1-3-1-2-1-2-1-3-1M183 154l1-2 1-2 2-3 1-2 1-2 1-3 1-2 1-3 1-2 2-2 1-3 1-2 1-2 1-3 1-2 2-2 1-3 1-2M170 129l3 0 2-1 3-1 3 0 2-1 3-1 3 0 2-1 3-1 2 0 3-1M169 142l2-1 3-1 2-1 3-1 2-1 3-1 2-1 3 0 2-1 3-1M182 154l-1-2 0-3-1-2-1-3-1-2-1-3M190 124l-1 3-1 2-1 2-1 3-1 2M194 108l-1 2-1 3-1 2-2 3-1 2-1 3-1 2M171 121l2-1 3-1 3 0 2-1 3-1 2-1 3-1 2-1M220 136l-3-1-3-1-2-1-3-1-2-1-3-1-2-1-3-1-2-1M195 155l1-3 2-2 1-2 1-3 1-2 1-2 2-3 1-2 0-3 1-2M191 154l1-2 1-2 0-3 0-2 1-3 0-2 1-3 0-2 1-3 1-2 0-2M190 140l5-1M187 147l2 1 3 1M194 143l3-1 2 0 3-1M217 105l-2-1-3-1-2-1-2-1-3-1-2-1-2-1-3-1-2-1-2 0-3-2-2-1-2-1-3-1-2 0-3-1-2-1-2-1M192 107l1-3 1-2 1-3 1-3M203 111l1-2 1-3 1-3 1-2M201 74l0 3-1 2 0 3-1 2 0 3 0 2-1 3 0 3-1 2M186 74l1 3 0 2 1 3 0 2 1 3 0 2 0 3 1 2M295 74l0 3 0 2 0 3 0 2-1 3 0 2 0 3 0 2-1 2 0 3 0 3 0 2 0 3 0 2-1 3 0 2 0 3 0 2-1 2 0 3 0 3 0 2 0 3-1 2 0 3 0 2 0 2 0 3 0 3-1 2 0 3 0 2 0 3M292 112l-2 0-3 0-2 1-3 0-2 1-3 0-2 0-3 1-3 0-2 0-3 1-2 0-3 1-2 0-3 0-2 1-3 0-2 0-3 0-3 1-2 0-3 0-2 1-3 0-2 0-3 1-2 0-3 1-2 0M265 156l-1-2-1-3-1-2-2-2-1-3-1-2-1-2-1-3-1-2-1-3-1-2-1-3-1-2-1-2-2-2-1-3M234 155l1-2 1-2 0-3 1-2 1-3 1-2 1-2 1-3 1-2 1-3 1-2 0-2 1-3 2-2 1-2M219 132l3 1 3 1 2 1 3 1 2 2 2 1 3 0 3 1M228 121l1 3 1 3 0 2 1 3 1 3 1 3M240 140l3 0 2 1 3 1 3 0 3 1 3 0 2 1M248 156l0-3 0-3 0-3 0-3 0-2M237 146l3 1 3 0 2 0 3 0M240 155l2-8M242 134l3-1 3-1 2-1 3 0M291 125l-2 1-3 1-2 0-3 0-2 1-3 1-2 0-2 1-3 0-2 1-3 0-2 1-3 0-2 0-3 1M290 138l-2 0-3 0-2 1-3 0-3 0-2 0-3 0-2 0-3 0-2 0-3-1-3 1-2 0M270 156l0-2 0-3 0-2 0-3 0-2-1-3 0-2M259 144l3 0 2 1 3 1 3 1M290 147l-3 0-2 0-3-1-2 0-3 0-2 0-3-1-2 0M277 156l0-10M270 150l7 0M289 150l-12 1M283 156l0-5M283 151l0-5M282 146l-2-8M275 138l1-2 1-3 0-2 1-3M266 139l0-3 0-3 1-3M271 130l0-3-1-3 1-3-1-3 0-3M261 132l0-3-1-2 0-3-1-2 0-3-1-2M280 128l-1-3 0-3 0-3-1-3 0-2M270 121l9 2M292 121l-3 0-3 0-2 0-3-1-2 0M286 126l0-5M266 74l0 3-1 2 0 3 0 3 0 2 0 3-1 2 0 3 0 3-1 2 0 3 0 3-1 2 0 3 0 2 0 3M263 104l-3-1-2-1-2-1-3-1-2-1-2-1-3-1-2-1-2-1-3-1-2-1-2-1-3-1-2 0-3-1-2-1-3-1-2-1-2-1-2-1M237 120l1-3 1-2 1-3 0-3 2-2 1-2 1-3 1-2 2-3M218 111l2-1 2-1 3 0 2-1 3 0 2-1 3 0 2-1 3-1 2-1 2-1M232 120l0-2 2-2 1-3 0-3 1-2 1-3M228 90l0 2 1 3 0 2 1 3 0 2 1 3 0 2M240 74l1 3 0 2 0 3 1 2 1 2 0 3 1 3 0 2 1 3M265 84l-2 1-3 1-2 1-3 0-2 1-2 1-2 1-3 1-2 1M254 100l-3-11M264 95l-3 0-3 0-3 0-2-1M253 74l0 3 1 2 0 3 1 3 0 3M293 99l-2 0-3 0-2 0-3 0-2 0-3 0-2 0-3 0-2 0-3 0-2 0-3 0M277 114l-1-3 0-2-1-3 0-2-1-3 0-2M262 108l3-1 3 0 2-1 3 0 2-1M269 115l0-3 0-3 0-3M286 112l0-2-1-3 0-3-1-2 0-3M293 106l-3 0-2 0-3 1M283 74l0 3 0 3-1 2 0 3 0 3 0 3 0 2-1 3 0 3M282 86l-2 0-3 0-2 1-3 0-2 1-3 0-3 0M274 99l0-3 0-3-1-3 0-3M264 93l3 0 3-1 4 0M276 74l0 3 0 2-1 3 0 2 0 3M275 81l-2 0-3 0-2 0-3 0M272 74l0 7M283 80l-4 1-4 0M294 89l-3 0-3 0-3 0-3 0M288 74l1 15M289 81l-6 1M289 85l-7 0M295 80l-6 1M341 119l-2 0-3 1-2 0-3 0-2 1-3 0-2 0-3 0-2 0-3 1-2 0-3 1-2 0-3 0-2 1-3 0-2 0-3 1-2 0-3 0M322 157l0-2 0-3-1-2 0-3-1-2 0-3-1-2 0-3 0-2-1-3 0-3 0-2-1-3 0-2M301 157l1-3 0-2 1-3 0-3 1-2 0-3 0-2 1-3 0-3 0-2 1-3 0-2 1-3M290 144l3-1 2 0 3-1 3 0 3-1M304 143l2-1 3 0 3-1 2-1 3-1 2 0M310 157l0-3 0-2 0-3 1-3 0-2 0-3M302 150l8 1M310 147l11 0M317 157l-1-10M310 151l6 0M316 152l6 0M341 137l-3 0-2 0-3 0-3 0-3 0-2 0-3 0-3-1M341 146l-20 2M329 157l1-10M322 152l7 0M327 157l-1-5M325 147l0 5M335 158l0-11M329 152l6 0M341 151l-6 0M338 158l0-7M328 147l0-10M320 141l8 0M335 147l0-10M328 142l7 0M331 137l1 5M341 142l-6 0M338 146l0-4M337 142l0-5M330 137l1-3 0-3 0-2 0-3 1-3 0-3M341 129l-2 0-3 0-2 0-3 0M307 74l1 3 0 2 0 3 1 2 0 3 1 2 0 3 0 2 1 3 0 2 0 3 1 2 0 3 1 2 0 3 1 3 0 2 0 3 1 2M311 97l-3-1-3 0-3 0-3 0-3 0-2 0M313 111l-3 1-2 0-3 0-3 0-2 0-3 1-2 0-3 0M300 113l1-3 0-3 1-3 0-2 1-3 0-3M293 104l9 0M312 106l-2 0-3 0-3 0-3 0M308 112l-1-6M311 101l-3 1-3 0-3 0M309 83l-3 0-3 0-3 0-3 0-3 1M302 96l0-2 0-3 1-3 0-2 0-3M294 88l3 0 3 1 3 0M310 91l-3 0-2-1-3 0M342 92l-3 0-2 1-3-1-3 1-2 0-3 0-2 1-3 0-3 0-2 1-3 0-3 0M319 122l1-3 1-2 1-3 0-3 1-2 1-3 0-2 1-3 0-2 1-3 1-3M312 107l3 0 3 0 2 1 3 0M342 114l-3-1-3-1-2-1-3-2-2 0-3-1-3-1M342 106l-3 0-2 0-3-1-3 1-2 0-3-1-2 0M323 74l-1 2 0 3 0 2 0 3-1 2 0 3 0 2 0 3M321 88l-2 0-3-1-2 0-2-1-3 0M317 94l-1-3 0-4M318 74l-1 3 0 2-1 3 0 2-1 3M322 80l-5 0M670 269l-3 0-2-1-3 0-2 1-3 0-2 0-3 0-2 1-3 0-2 0-3 1-2-1-3 0-2 1-3-1-2 1-3 0-2 0-3 0-2 0-3 0-2-1-3 1-2 0-3 0-2 0-3 0-2 1-3 0-2-1-3 1-2 0-3-1-2 1-3 0-2 0-3 1-2 0-3 0-2 0-3 0-2 0-3 0-3 0-2 1-3 0-2 0-3 0-2 0-3 0-2 0-3 0-2 0-3 0-2 0-3 0-2 0-3 1-2 0-3 0-2 0-3 0-2 0-3 0-2 0-3 0-2 1-3 0-2 0-3 0-2 0-3 0-2 0-3 0-2 0-3 0-2 1-3 0-2 0-3 0-2 0-3 0-2 0-3 0-2 0-3 0-3 1-2 0-3 0-2 0-3 0-2 0-3 0-2 0-3 0-2 1-3 0-2 0-3 0-2 0-3 0-2 0-3 0-2 0-3 0-2 1-3 0-2 0-3 0-2 0-3 0-2 0-3 0-2 0-3 0-2 1-3 0-2 0-3 0-2 0-3 0-2 0-3 0-2 0-3 0-2 1-3 0-2 0-3 0-3 0-2 0-3 0M519 480l0-3 0-2 0-3 0-2 0-3 0-2 0-3 0-2 0-3 0-2 0-3 0-2 0-3 0-2 0-3 0-2 0-3 0-2 0-3 0-2 0-3 0-2 0-3 0-2 0-3 0-2 0-3 0-2 0-3 0-2 0-3 0-2 0-3 0-2 0-3 0-2 0-3 0-2 0-3 0-2 0-3 0-2 0-3 0-2 0-3 0-2 0-3 0-2 0-3 0-2 0-3 0-2 0-3 0-2 0-3 0-2 0-3 0-2 0-3 0-2 0-3 0-2 0-3 0-2 1-3 0-2-1-3 0-2 0-3 0-2 0-3 0-2 0-3 0-2 0-3 0-2 0-3 0-2 0-3 0-2 0-3 0-2M337 379l182 3M442 480l0-3 0-2 0-3 0-2 0-3 0-2 0-3 0-2 0-3 0-2 0-3 0-3 0-2 0-3 0-2 0-3 0-2-1-3 0-2 0-3 0-2 0-3 0-3 0-2 0-3 0-2 0-3 0-2 0-3 0-2 0-3 0-2 0-3 0-2 0-3 0-3 0-2 0-3 0-2M336 431l105 3M395 480l1-47M360 480l1-48M335 460l25 1M349 480l1-19M335 471l14 1M343 480l0-9M343 476l6 0M341 460l0 11M335 466l6 0M350 465l-9 0M345 472l0-7M349 472l11 0M350 466l10-1M355 461l0 4M336 445l25 1M349 445l1 16M335 454l15 0M344 454l0 6M339 454l0 6M344 457l-5 0M350 457l-6 0M342 445l0 9M345 445l0 9M345 449l-3 0M361 453l-11 0M355 461l1-8M350 431l0 14M342 431l0 14M336 438l6 0M350 437l-8 0M346 431l0 6M346 434l-4 0M361 437l-11 0M354 445l0-8M350 442l4 0M355 431l0 6M361 450l35 1M377 480l0-29M360 464l17-1M360 470l17 0M370 480l0-10M360 474l10 0M367 464l0 6M372 464l0 6M369 450l0 14M360 456l9-1M377 458l-8 0M377 463l19 0M377 472l19 0M388 480l0-8M382 480l0-8M388 475l7 0M389 463l-1 9M382 463l0 9M388 467l-6 0M387 451l0 12M377 457l10 0M382 451l0 6M396 457l-9 0M390 463l1-6M380 432l1 19M372 432l-1 19M361 443l10 1M365 443l0 7M368 432l-1 11M361 437l6 0M361 440l6 0M372 438l-5 0M372 436l-5 0M380 441l-8 0M381 447l-10 0M377 447l0-6M376 432l0 9M380 437l-4 0M396 443l-15 1M389 451l0-7M384 451l0-7M389 432l-1 12M396 437l-7 0M392 443l0-6M396 450l46 1M420 480l-3-29M396 466l23-2M406 480l1-15M396 471l11 1M400 465l0 6M407 471l12 0M413 480l1-9M406 475l7 0M411 471l0 4M413 465l-1 6M407 450l-1 15M396 459l11-1M401 450l0 9M396 453l5 1M407 454l-6 0M412 450l0 15M412 459l-5 0M418 459l-6-1M419 467l23 1M432 480l0-3 0-3-1-3 0-3M424 480l1-13M420 473l4 1M424 474l8 1M427 468l0 6M427 451l1 17M418 460l10 0M442 460l-14 2M437 468l-1-7M433 451l0 10M442 457l-9-1M438 461l0-5M415 433l1 18M396 443l19 1M407 443l0 7M407 433l0 10M403 433l0 10M396 439l7 0M407 438l-4 0M415 438l-8 0M429 434l0 17M429 443l-14 1M421 451l0-7M424 433l0 10M424 438l-9 0M419 444l0-6M442 441l-13-1M436 434l0 7M378 379l2 53M336 401l43-1M360 400l1 32M336 414l24-1M350 413l0 18M345 414l-1 17M336 423l8 0M336 420l9-1M350 424l-6 0M350 418l-5 0M360 423l-10 0M356 432l1-9M350 428l6 0M353 423l-1 5M360 418l-10 0M355 423l0-5M356 413l0 5M353 413l0 5M346 400l0 14M336 409l10 0M340 409l0 5M343 409l0 5M341 401l0 8M346 404l-5 0M360 408l-14-1M351 413l1-5M355 413l0-5M354 400l0 8M350 400l0 8M350 403l-4 0M354 404l-4 0M379 419l-19 1M369 432l1-12M360 425l10 0M366 432l0-7M361 429l5-1M380 426l-10 0M374 432l1-6M370 429l4 0M375 426l0-7M379 409l-19 1M370 420l0-10M360 416l10-1M365 420l0-4M365 410l0 6M371 400l0 10M365 400l0 10M371 406l-6 0M379 405l-8 0M375 410l0-5M357 379l-1 21M337 390l20-1M345 390l1 11M342 390l0 11M336 395l6 0M345 394l-3 0M356 395l-11 0M352 400l0-5M348 400l0-5M350 390l0 5M349 379l0 11M343 379l0 11M337 386l6 0M349 384l-6 0M346 390l0-6M345 379l0 5M357 385l-8 0M354 379l0 6M357 382l-3 0M378 388l-21 1M368 400l1-11M361 400l0-11M356 396l5 0M356 392l5 0M361 394l7 1M365 400l0-5M364 389l0 6M378 394l-10 0M372 400l0-6M373 394l0-5M368 379l0 10M368 385l-11 0M363 389l0-4M363 379l0 6M361 379l-1 6M368 382l-5 0M378 384l-10 0M373 389l0-5M373 379l0 5M408 380l2 53M409 410l-30-1M396 433l1-23M379 424l18-1M390 432l0-9M380 428l10 0M384 432l0-4M384 423l0 5M387 423l-1 5M390 427l6 0M390 409l0 14M379 418l11 0M386 418l0 5M385 409l0 9M390 414l-5 0M397 417l-7 0M410 419l-13-1M402 433l0-15M396 427l6 0M397 422l5 0M410 426l-8 0M405 419l0-9M410 414l-5 0M390 380l1 29M390 395l-12-1M391 401l-12 0M386 409l0-8M379 405l7-1M383 409l0-5M381 401l1 3M391 405l-5 0M385 401l0-7M385 380l-1 14M385 386l-7 0M390 386l-5 0M390 390l-6 0M387 390l0-4M409 394l-19-2M409 402l-18-1M401 410l0-9M395 410l0-9M391 405l4 0M400 401l1-8M397 401l0-8M397 398l4 0M400 380l1 13M400 386l-10 0M394 393l0-7M400 389l-6 0M397 393l0-4M397 389l0-3M395 380l0 6M408 387l-8 0M441 409l-32-1M428 434l-2-26M410 419l17 1M419 433l-1-14M410 425l9 0M414 419l-1 6M419 427l9-1M422 433l1-6M419 408l0 11M410 414l9-1M414 414l0 5M427 413l-8 0M441 421l-14 1M433 434l0-12M428 429l5-1M441 428l-8 0M435 422l0-13M427 416l8-1M431 422l1-6M441 415l-6 0M425 380l1 28M426 392l-17 0M418 408l0-16M409 401l9 0M413 392l0 9M426 399l-8 0M426 404l-8 0M417 380l0 12M417 387l-9 0M414 392l0-5M412 380l1 7M425 386l-8-1M421 392l0-7M417 389l4 0M421 380l1 6M441 394l-15-1M433 408l0-14M426 401l7 0M426 404l7 0M429 408l0-4M426 397l7 0M441 401l-8 1M432 381l0 13M432 387l-7-1M441 388l-9 0M437 394l0-6M436 381l0 7M441 385l-5 0M441 435l3 0 2 0 3 1 2 0 3 0 2 0 3 0 2 0 3 1 2 0 3 0 2 0 3 0 2 0 3 1 2 0 3 0 2 0 3 0 2 0 3 0 2 0 3 1 2 0 3 0 2 0 3 0 2 0 3 1 2 0 3 0M477 480l0-3 0-2-1-3 0-2 0-3 0-2 0-3-1-2 0-3-1-2 0-3 0-2 0-3-1-2 0-3 0-2 0-3M442 456l2 1 3 0 3 0 2 1 3 0 2 0 3 1 2 0 3 0 3 0 2 1 3 0 2 1M456 480l0-3 0-2 0-3 0-3 0-3 0-2 0-3 0-3M442 470l3 0 3 0 3 0 2 0 3 0M450 480l0-3 0-2 0-3 0-2M442 465l3 0 3-1 3 0 2 0 3-1M450 464l0 6M447 464l-1 6M448 457l0 7M456 470l3 0 3 0 3-1 3 0 2 0 3 0 3-1M469 480l0-3-1-2 0-3 0-3M461 480l0-3 0-2 0-3 0-2M468 474l3 1 3 0 3 0M474 480l-1-5M468 460l0 9M461 436l0 3 0 2 0 3 0 2 0 3 1 2 0 3 0 2 0 3M442 447l19 2M450 448l-1 9M442 452l8 0M462 453l-3 0-3 0-3 0-3 0M455 458l0-3 0-2M454 448l1 5M450 436l0 12M461 442l-11 1M474 449l-3 1-3 0-3 0-3 0M467 460l0-4 0-3 0-3M462 455l5 0M466 437l0 13M466 443l-5 0M473 444l-7 0M495 480l0-3 1-2 0-3 0-2 1-3 0-2 0-3 0-3 1-2 0-3 0-2 0-3 0-2 1-3 0-3 0-2M476 464l2 0 3 0 2-1 3 0 3 0 2 0 3 0 3 0M484 480l0-3 0-2 0-3 1-3 0-3 0-2M476 471l3 0 3 0 2 1M481 464l-1 7M484 473l3 0 3 0 3 0 3 1M487 438l0 3 1 2 0 3 0 2 1 3 0 2 0 3 0 2 0 3 1 2M474 453l3 0 3 0 3 0 3 0 3 0M481 453l0 3 0 2 0 3 0 3M475 459l6 0M480 438l0 2 1 3 0 2 0 3 1 2 0 3M473 445l8 0M473 441l8 1M488 445l-7 1M498 452l-3 0-3 0-3 0M497 459l-3 0-2 0-3-1M497 460l3 0 2 1 3 0 3 0 3 0 2 0 3 1 3 0M508 480l0-3 0-2-1-3 0-3 0-3 0-2-1-3M496 468l11 1M496 473l11 0M497 465l10 0M507 469l12 0M514 462l-1 2 0 3-1 2M505 439l0 3 0 3 1 2 0 3 0 3 0 3 0 2 1 3M498 450l3 0 2 1 3 0M519 449l-3 0-2 0-3 0-3 0-2 0M511 461l0-3 0-3 0-3 0-3M506 454l5 1M519 455l-8 0M513 440l0 3 0 3 0 3M513 444l-7 1M519 443l-6 0M486 382l4 56M462 381l-4 55M441 412l19 2M441 424l18 2M452 425l-1 11M441 430l10 0M447 425l-1 5M459 431l-8 0M449 413l1 12M441 419l8 0M446 419l0 6M459 421l-9 0M454 426l0-5M441 401l19 0M452 401l0 12M441 408l11-1M447 408l0 5M446 401l0 7M460 407l-8 0M441 389l20-1M451 389l1 12M445 389l0 12M441 396l4 0M452 395l-7 0M461 394l-9-1M457 388l0 5M453 381l0 7M445 381l1 8M441 384l5 0M458 381l0 7M488 411l-28 2M472 437l1-25M459 427l13 0M467 437l-1-10M458 433l8-1M462 427l-1 6M459 419l14 0M464 419l1 8M470 419l-1 8M466 412l-1 7M489 424l-17 2M481 438l-1-13M472 430l9 0M489 419l-16 0M482 425l-1-6M480 419l0-8M471 381l0 31M471 398l-10 1M471 405l-11 0M465 412l0-7M471 389l-10 1M471 393l-10 0M467 381l0 8M487 397l-16 1M479 411l0-13M471 404l8 0M471 409l8-1M488 405l-9 0M484 405l0-8M481 382l-1 16M481 388l-10-1M476 382l0 6M487 390l-6-1M487 386l-6 0M519 405l-31 1M519 418l-30 2M500 439l1-20M489 430l11 0M508 439l1-21M500 428l8-1M500 433l8-1M504 428l1 5M519 427l-11 0M514 427l1-9M519 423l-5-1M501 419l1-14M496 419l-1-13M488 413l7 1M488 410l7 1M509 418l0-13M519 411l-10 1M514 418l-1-6M514 411l1-6M504 382l0 23M504 390l-17 2M504 399l-17-1M496 406l-1-8M497 398l0-7M492 398l1-7M504 395l-7 0M496 382l0 9M496 388l-9 0M491 391l0-3M504 385l-8 1M519 393l-15 0M512 405l0-12M504 400l8 1M504 396l8 0M508 393l0 3M519 398l-7 0M511 382l0 11M428 279l4 102M338 332l92 4M375 334l1 45M337 358l39-2M354 357l0 22M337 365l17 1M347 365l1 14M337 373l10-1M344 372l-1 7M341 365l0 8M347 369l-6-1M354 373l-6 0M347 357l-1 8M337 362l9 0M343 362l0 3M342 357l0 5M354 361l-8 0M350 366l0-5M365 356l-2 23M364 369l-10 0M364 374l-10 0M359 379l0-5M359 374l0-5M364 364l-10 0M359 369l1-5M360 357l0 7M376 366l-12 0M376 373l-12-1M370 379l0-6M370 373l0-7M376 369l-6 0M371 356l0 10M371 361l-7-1M368 366l0-5M367 356l0 5M376 360l-5 0M360 333l0 24M347 333l0 24M337 347l10-1M337 351l10 0M342 351l0 6M337 354l5 0M342 346l0 5M337 338l10 1M360 343l-13 0M360 349l-13-1M354 357l0-9M347 354l7-1M350 348l0 6M353 348l0-5M347 346l6 0M352 333l0 10M360 338l-8 0M356 343l0-5M355 333l1 5M375 347l-15 0M367 356l0-9M360 352l7 0M362 357l1-5M363 347l0 5M367 349l-4 0M372 356l-1-9M367 351l4 0M376 351l-5 0M375 341l-15 0M367 347l0-6M372 347l0-6M368 334l0 7M368 337l-8 0M364 333l0 4M375 337l-7 0M372 341l0-4M402 335l1 45M402 353l-26-2M388 380l0-28M376 367l12 0M381 380l0-13M376 372l5 0M381 374l7 0M376 358l12 0M382 358l0 9M376 362l6-1M379 362l0 5M388 363l-6 0M383 352l0 6M379 352l0 6M376 354l3 0M383 355l-4 0M403 363l-15 1M403 370l-15 1M397 380l0-10M388 376l9 0M393 380l0-4M393 371l0 5M397 373l-4 0M403 375l-6-1M401 380l-1-6M394 371l0-7M398 370l0-7M394 368l4 0M396 363l0-10M388 357l8 1M392 364l0-6M392 360l4 0M393 352l0 6M388 355l5 0M402 359l-6 0M387 334l0 18M387 341l-12 1M382 352l1-11M375 348l7-1M379 352l0-5M380 342l-1 5M387 347l-5 0M387 344l-4 0M382 334l0 8M387 338l-5 0M402 345l-15-1M397 353l-1-9M391 352l1-8M391 348l6 0M402 349l-5 0M394 335l0 9M394 340l-7-1M391 344l0-5M390 335l1 4M391 336l-4 0M402 339l-8 0M398 344l0-5M431 356l-29-2M420 380l-1-25M403 369l17 1M410 380l0-11M403 374l7 0M407 369l0 5M415 380l0-11M410 373l5 0M415 374l5 0M415 377l5 0M410 355l0 14M403 362l7 0M407 355l0 7M402 358l5 0M410 358l-3 0M420 361l-10-1M420 365l-10 0M414 369l0-4M416 365l0-4M432 371l-12-1M432 376l-12 0M426 380l0-4M424 380l-1-4M424 376l1-6M431 363l-11 0M425 370l0-7M420 366l5 0M426 363l0-8M431 359l-5 0M413 336l0 19M413 343l-11-1M406 355l0-12M402 349l4 0M402 351l4 0M413 348l-7 0M409 335l-1 8M409 338l-7 0M413 339l-4 0M431 346l-18 0M423 355l0-9M417 355l0-9M417 351l6 1M419 355l0-4M421 336l0 10M421 341l-8 0M430 341l-9 0M425 346l0-5M425 336l0 5M383 280l-1 54M338 308l44 2M360 309l1 24M338 323l23-1M352 322l0 11M346 322l0 11M352 326l-6 1M361 327l-9 0M356 322l0 5M351 309l0 13M338 315l13-1M346 309l-1 5M360 316l-9 0M355 322l0-6M351 318l4 0M361 319l-6-1M355 309l0 7M355 312l-4 0M382 321l-21 0M369 334l0-13M361 328l8 0M364 333l0-5M364 331l5 0M361 324l8 0M364 324l0 4M366 324l1 4M364 321l0 3M374 334l0-13M369 326l5 0M382 326l-8 0M379 334l-1-8M374 329l4 1M382 329l-4 0M382 332l-3 0M378 326l0-5M371 310l0 11M365 310l0 11M365 316l-5 0M363 321l0-5M365 312l-5 0M363 309l0 3M371 316l-6-1M368 321l0-5M368 310l0 6M382 315l-11-1M377 321l0-6M379 321l1-6M377 318l2 0M376 310l0 4M380 310l0 5M359 281l-1 28M338 293l20 1M349 294l-1 15M338 302l11 0M342 302l1 6M344 294l0 8M338 297l6 0M342 297l0 5M349 298l-5 0M349 296l-5 0M347 294l0 2M358 301l-9 0M354 309l-1-8M349 305l4 0M351 309l0-4M353 294l0 7M353 297l-4 0M358 297l-5 0M356 301l0-4M350 282l0 12M338 287l12 0M345 287l0 7M341 287l0 7M338 290l3 0M345 291l-4 0M345 289l-4 0M350 291l-5 0M348 287l-1 4M345 282l1 5M342 282l0 5M338 284l4 0M346 284l-4 0M350 284l-4 0M348 287l0-3M348 282l0 2M358 286l-8 0M358 290l-8-1M355 294l-1-5M358 292l-4 0M355 289l0-3M352 289l0-3M352 288l3 0M357 289l0-3M354 282l0 4M352 282l0 4M354 284l-2 0M383 297l-25 0M368 310l1-13M358 303l11 0M363 309l0-6M358 306l5-1M366 310l0-7M363 307l3-1M366 306l3 0M364 297l0 6M361 297l0 6M358 301l3 0M364 299l-3 0M369 300l-5 0M366 297l0 3M376 310l0-13M369 304l7 0M373 297l0 7M369 300l4 0M383 305l-7 0M383 300l-7 0M379 305l0-5M376 302l3 0M378 300l0-3M371 281l0 16M371 288l-13 0M364 297l0-9M358 293l6 0M371 293l-7 0M368 297l0-4M368 293l-1-5M369 293l1-5M367 291l3 0M364 281l0 7M364 285l-5 0M362 288l0-3M361 281l1 4M371 284l-7 0M367 288l0-4M371 286l-4 0M367 281l0 3M383 289l-12 0M377 297l0-8M371 292l6 1M374 297l1-5M383 292l-6 0M376 281l-1 8M376 284l-5 0M373 281l0 3M374 281l1 3M383 283l-7 1M380 289l-1-5M383 287l-3 0M378 281l1 3M429 312l-47 3M408 335l0-22M393 335l1-21M382 325l11 0M388 334l0-9M382 329l6 1M382 327l6 0M388 329l5 0M391 325l0 4M387 315l1 10M382 320l5 0M382 322l5 0M386 315l-1 5M393 318l-6 0M393 321l-6 0M390 321l0-3M393 323l15 1M402 335l-1-11M393 330l9 0M397 335l0-5M397 324l0 6M393 326l4 0M402 330l6 0M404 324l0 6M400 314l0 10M393 318l7 0M393 320l7 0M396 320l0 4M397 318l0 2M397 314l0 4M394 316l3 0M396 314l0 2M408 320l-8 0M405 324l0-4M404 314l0 6M430 324l-22 0M418 336l0-12M408 330l10 0M413 336l0-6M413 324l1 6M424 336l0-12M418 330l6 0M430 330l-6 1M417 324l0-11M408 320l9 0M412 324l0-4M413 313l0 7M408 316l5 0M423 324l-1-11M417 318l6 1M420 324l0-6M429 317l-6 0M411 279l-1 34M410 298l-27-1M396 314l-1-16M383 304l13 0M389 314l0-10M383 309l6-1M382 312l7 0M386 315l0-3M386 304l0 4M389 307l-3 0M389 309l7 1M392 314l0-5M392 312l4 0M394 310l0 2M393 304l0 5M389 297l0 7M383 300l6 0M386 300l0 4M396 300l-7 0M391 304l1-4M391 297l0 3M403 314l0-16M396 305l7 0M396 309l7 0M400 314l0-5M396 311l4 0M400 311l3 0M399 305l0 4M399 298l0 7M396 301l3 0M398 298l-1 3M403 302l-4 0M410 304l-7 0M410 310l-7 0M406 314l0-4M407 310l0-6M403 308l4 0M405 304l1 4M410 300l-7 0M406 304l1-4M407 300l0-2M397 280l1 18M398 286l-15 1M389 297l0-10M383 292l6 0M386 297l0-5M383 294l3 0M386 294l3 0M385 287l0 5M383 289l2 0M389 289l-4 0M387 292l0-3M398 291l-9 1M394 298l-1-6M389 294l4 0M392 292l0 2M398 294l-5 0M396 298l0-4M392 292l0-5M389 289l3 0M394 292l1-6M392 289l2 0M390 280l-1 7M386 280l0 7M386 283l-3 0M386 285l-3 0M390 284l-4 0M393 280l0 7M393 283l-3 0M392 287l0-4M393 281l-3 0M398 284l-5 0M395 286l1-2M397 282l-4 0M396 284l0-2M395 280l1 2M411 288l-13 0M403 298l1-10M398 292l6 0M398 295l6 0M401 298l0-3M400 292l0 3M411 293l-7 1M408 298l0-4M405 298l0-4M404 296l1 0M405 296l3 0M407 294l-1-6M404 291l2 0M411 290l-5 0M405 279l0 9M405 284l-7 0M401 288l0-4M403 288l0-4M401 280l0 4M403 280l0 4M411 283l-6 0M408 288l-1-5M409 279l0 4M429 297l-19 0M420 313l0-16M410 305l10 0M415 313l0-8M410 308l5 0M415 309l5 0M414 297l0 8M410 301l4 0M420 302l-6 0M418 297l0 5M429 304l-9-1M429 309l-9 0M424 313l0-4M428 290l-17 1M420 297l0-7M416 297l0-7M411 293l5 0M416 294l4 0M424 297l0-7M420 293l4 0M428 294l-4 0M418 279l0 11M418 284l-7 0M415 290l0-6M411 287l4 0M415 279l0 5M424 279l0 11M424 285l-6 1M428 283l-4 0M519 322l-89 1M471 381l-3-59M431 353l38-2M450 381l1-29M432 369l18 0M440 381l-1-12M432 375l7-1M436 369l0 5M439 375l11-1M445 381l0-6M444 369l0 6M440 352l-1 17M431 360l9 1M436 353l0 8M431 357l5 0M440 357l-4 0M450 362l-10 0M445 352l0 10M445 358l-5 0M445 355l-5 0M450 365l20-1M460 381l0-16M450 374l10 0M460 372l10 0M464 381l1-9M460 378l4 0M465 365l0 7M460 369l5 0M470 368l-5-1M460 352l1 13M451 357l9 0M456 357l0 8M461 362l-5 0M456 352l0 5M470 359l-9 1M465 365l1-5M465 352l1 8M466 356l-6 0M448 322l0 30M430 334l18 1M431 344l17-1M438 343l0 9M431 349l7 0M435 344l0 5M443 343l-1 9M442 347l-4 0M448 347l-6 1M439 334l0 9M430 339l9 1M436 340l0 4M434 334l0 5M444 335l0 8M444 340l-5 0M448 339l-4 0M437 323l0 11M430 330l7 0M448 328l-11 1M443 335l1-7M442 323l0 5M442 325l-5 0M468 335l-20 1M460 352l-1-16M448 344l11 0M453 352l0-8M448 348l5 0M455 336l0 8M448 341l7 0M452 336l0 5M469 345l-10 0M463 352l0-7M459 349l4 0M461 322l0 14M461 329l-13 1M455 336l0-7M455 322l0 7M461 326l-6 0M468 329l-7 0M519 359l-49-3M489 382l1-25M470 371l19 0M479 382l0-11M474 381l1-10M481 356l0 15M470 364l11 0M475 364l-1 7M470 368l4 0M474 356l1 8M470 360l5-1M481 359l-6 1M489 364l-8 1M489 368l-8-1M485 371l0-4M502 382l-1-24M489 371l12 0M496 382l1-11M489 377l7 0M489 364l12-1M495 357l0 7M519 371l-18 1M512 382l-1-11M501 377l11 0M507 371l1 6M519 376l-7 0M516 382l0-6M509 371l0-13M501 365l8 0M519 364l-10 1M491 357l-2-35M469 338l21 1M481 356l0-17M469 349l12 0M474 356l0-7M474 339l0 10M469 343l5 0M481 344l-7 0M477 349l0-5M481 348l10 0M486 357l1-9M481 343l9 0M479 322l0 17M468 330l11 0M473 330l1 9M468 335l5 0M479 334l-6 0M473 322l1 8M490 331l-11-1M485 322l0 9M519 336l-2 0-3 0-3 1-2 0-3 0-3 0-2 0-3 0-3 0-2 0-3 0M501 358l2-21M491 345l11 0M491 352l10 1M496 357l0-4M498 345l-1 8M496 337l0 8M519 347l-17 0M509 358l-1-11M502 352l6 0M512 347l0-11M508 347l0-11M502 341l6 0M508 341l4 0M502 337l0-15M490 329l12 0M495 337l0-8M490 334l5 0M495 322l0 7M513 336l-2-14M502 331l10 0M507 336l0-5M506 322l0 9M470 277l0 45M470 300l-41 1M451 322l0-21M429 313l22 0M441 323l0-10M435 323l-1-10M429 317l6 0M435 318l6 0M439 323l0-5M442 301l-1 12M435 301l1 12M429 306l7 1M432 301l0 5M442 307l-6 0M438 301l0 6M451 307l-9 1M447 313l0-5M444 313l-1-5M442 311l2 0M470 309l-19 1M463 322l-1-12M451 315l12 0M458 322l-1-7M458 319l5 0M456 310l0 5M470 317l-7 0M462 310l-1-10M451 304l11 0M456 310l0-6M455 300l0 4M450 278l0 23M450 288l-22 1M438 301l1-12M428 295l11 0M434 301l1-6M435 298l4 0M433 289l0 6M439 292l-6 0M450 294l-11 0M445 301l0-7M442 301l0-7M439 297l3 0M442 298l3 0M446 294l-1-6M442 294l0-5M441 278l0 11M433 278l1 11M433 285l-5 0M431 289l0-4M441 284l-8 0M437 278l0 6M441 282l-4 0M450 284l-9 0M445 289l0-5M446 278l0 6M459 277l1 23M459 289l-9 1M460 294l-10 0M459 283l-9 0M455 289l0-6M450 286l5 0M455 277l0 6M470 287l-11 0M470 292l-11 0M465 300l1-8M460 297l5-1M462 292l0 4M470 295l-4 0M464 292l0-5M464 277l-1 10M464 282l-5 0M470 282l-6 0M519 300l-49 3M496 322l1-21M481 322l-1-20M470 314l11-1M475 322l0-9M475 317l6 1M476 302l0 11M470 308l6 0M481 309l-5-1M481 310l15 0M489 322l-1-12M481 315l8 0M489 315l7 0M487 302l1 8M491 301l0 9M497 305l-6 0M507 322l1-22M496 313l11 0M496 307l12 0M502 307l1 6M508 309l-6 0M501 301l1 6M508 304l-7 0M505 307l0-3M519 310l-11 0M513 322l-1-12M507 317l6 0M507 314l6 0M514 310l0-10M508 305l6 0M519 305l-5 1M491 276l0 25M491 287l-21 0M481 302l1-15M470 296l12 0M477 302l0-6M470 300l7 0M475 287l0 9M470 292l5 0M482 292l-7 0M491 294l-9 0M486 302l0-8M481 276l1 11M474 277l0 10M474 283l-4 0M482 283l-8-1M479 287l0-4M477 277l0 5M491 281l-9 0M485 287l0-6M482 284l3 0M505 275l1 26M505 286l-14 0M506 295l-15 0M497 301l0-6M499 295l1-9M491 291l9 0M496 295l-1-4M506 291l-6 0M503 295l0-4M499 276l0 10M499 282l-8 0M519 288l-13 0M511 300l0-12M506 294l5 0M506 298l5 0M519 295l-8 0M515 295l0-7M511 291l4 0M519 283l-14-1M514 288l-1-5M513 275l1 8M519 279l-6-1M670 345l-2 1-2 1-3 2-2 0-2 2-3 0-2 2-2 1-2 1-3 1-2 1-2 1-2 2-2 1-3 1-2 1-2 1-2 1-3 2-2 0-2 2-2 1-2 1-2 2-3 1-2 1-2 1-3 1-2 1-2 2-2 0-3 1-2 1-2 2-3 0-2 2-2 1-3 0-2 2-2 1-2 1-3 1-2 1-2 1-2 1-3 1-2 2-2 1-2 1-3 1-2 1-2 1-2 1-3 1-2 2-2 1-2 1-3 1-2 1-2 1-2 1-3 1-2 2-2 1-2 1-3 1-2 1M590 480l0-3 0-2-1-3 0-2 0-3 0-2 0-3-1-2 0-3 0-2 0-3-1-2 0-3 0-2 0-3-1-2 0-3 0-3 0-2-1-3 0-2 0-3 0-2 0-3-1-2 0-3 0-2 0-3-1-2 0-3 0-2 0-3-1-3 0-2 0-3 0-2M519 428l67 4M562 480l0-3 0-2 0-3-1-2 0-3 0-3 0-2-1-3 0-2 0-3 0-3-1-2 0-3 0-3 0-2-1-3 0-2 0-3 0-3M519 457l3 0 2 1 3 0 2 0 3 0 3 1 2 0 3 0 2 0 3 0 3 1 2 0 3 0 2 0 3 0 3 0M537 480l0-3 0-2 0-3 0-3 0-2 0-3 0-3 0-2M519 471l3 0 2 0 3 0 2-1 3 0 3 0 2 0M527 480l1-3 0-3 0-4M528 458l0 3 0 3 0 3 1 3M537 471l3 0 3 0 2-1 3 0 3 0 2-1 3 0 3 0 2-1M547 480l0-3 0-2 0-3 0-2M556 480l0-3 0-3 0-2 0-3M547 459l0 3 0 3 1 2 0 3M552 460l0 3 1 3 0 3M553 465l-6 0M534 429l0 2 1 3 0 3 0 3 0 2 1 3 0 3 0 2 0 3 0 3 1 3M519 444l16-1M529 443l0 3 0 3 0 3 0 3 0 3M536 451l-7 0M526 428l1 15M519 434l7 0M519 437l8 1M535 435l-8 1M534 432l-8-1M530 428l0 4M559 441l-24 1M547 459l0-2 0-3 0-2 0-3 0-2 0-3 0-2M536 452l11-1M541 459l1-8M542 456l5 0M560 450l-13-1M553 460l-1-10M560 456l-7-1M554 450l0-8M547 430l0 12M542 429l0 13M542 436l-7-1M547 435l-5 0M554 430l0 12M554 437l-7 0M558 435l-4 0M560 454l28-2M572 480l0-3 1-2 0-3 0-3 0-2 0-3 1-3 0-2 0-3 0-3M561 468l3 0 3 0 3 0 3 1M560 460l14 1M567 460l0 8M568 454l0 6M560 456l8 1M564 457l0 3M573 466l16 1M579 480l0-14M573 471l6 1M573 475l6 0M579 475l11-1M585 466l0 9M580 453l1 13M574 458l7 0M588 459l-7 0M584 453l0 6M574 432l-1 21M559 440l14 0M567 440l0 14M559 446l8 0M573 447l-6 0M564 431l0 9M558 434l6 1M560 431l0 3M587 443l-14 0M579 453l1-10M573 448l6 0M587 447l-8 0M583 453l1-6M579 432l0 11M579 437l-6 0M586 437l-7 0M582 432l0 5M560 400l0 31M542 408l1 21M528 416l0 12M519 423l9 0M523 423l1 5M542 417l-14-1M542 422l-14 0M537 429l-1-7M532 429l0-7M542 425l-6 0M535 422l0-6M535 412l0 4M539 410l0 7M542 412l-3 0M560 416l-18-1M553 430l0-15M542 424l11 0M547 415l0 9M542 420l5 0M560 421l-7 0M552 403l0 12M552 410l-10 0M548 415l0-5M546 415l0-5M548 405l1 5M552 406l-4 0M560 410l-8-1M557 416l0-6M552 413l5 0M560 404l-8 0M557 410l0-6M584 413l-24 1M572 431l0-18M560 423l12 0M564 431l0-8M560 427l4 0M566 414l0 9M560 419l6 0M572 418l-6 1M572 416l-6 0M585 423l-13 0M577 432l1-9M572 427l6 0M574 423l0 4M585 427l-7 0M581 432l0-5M578 423l0-10M584 418l-6 0M581 423l1-5M580 418l1-5M583 404l-2 0-3 0-3 0-2 0-3 0-2-1-3 0-3 0-2 0M571 413l0-9M566 414l0-10M560 408l6 0M560 410l6 0M564 414l0-4M566 409l5-1M579 413l-1-9M572 394l0 10M565 397l0 7M563 398l-1 5M572 398l-7 0M582 396l-2 0-3 1-2 0-3 0M579 404l0-7M670 430l-2-1-3 0-2-1-3-1-2-1-2-1-2-1-3-1-2-1-3 0-2-1-3 0-2 0-2-2-3-1-2-1-2-1-3-1-2 0-3-1-2 0-3-1-2-2-2-1-2-1-2-1-3-1-2-1-2-2-3-1-2 0-3-1-2-1-2 0-3-1-2-1-2-1M586 430l2 0 3 0 2 0 3 0 2 0 3 0 2 0 3 1 2 0 3 0 2-1 3 1 2-1 3 0 2 0 3-1 2 1 3-1 2 1 3 0 2 0 3 1 2-1 3-1 2 0 3 0 2 0 3 1 2 0 3 0 2-1 3 0M640 480l-1-2-2-2-1-3-2-2-1-2-1-2-1-3-1-2-2-2-1-3-1-2-2-2-1-2-1-3-1-2-2-2-1-3-1-2-2-2-1-2-1-3 0-2M610 480l0-3 0-2 0-3 0-2 0-3 0-2 0-3 0-2-1-3 0-2 0-3 0-2 0-3 0-2 0-3 0-2-1-3 0-2 0-3 0-2M588 454l21 0M589 470l21-2M600 480l0-3 0-2-1-3 0-3M590 474l9 0M599 474l3-1 3 0 2-1 3 0M605 480l1-4 0-3M598 454l-1 15M589 462l8 0M594 454l0 8M588 458l6 0M604 454l1 15M604 462l-7 0M600 469l1-7M609 462l-5 0M596 430l0 3 0 3 1 2 0 3 0 3 0 2 0 3 0 3 0 2M587 445l10 0M586 437l10 0M591 437l0 8M587 442l4-1M608 443l-2 1-3 0-3 0-3 0M609 450l-3 0-3 0-3-1-3 0M602 454l0-4M604 450l-1-6M600 449l0-5M609 457l3 1 2 1 2 1 3 1 2 1 2 1 3 1 2 1 3 1 2 1M630 480l-1-2-1-3 0-2-1-3-2-2 0-2-2-3M615 480l1-3 0-2 1-3 0-3 1-2 0-3 1-3M610 468l2 0 3 0 3 0M639 478l0-2 0-3-1-2 1-3-1-2 0-3 0-3 0-2 0-3 0-2 0-3 0-3 0-2 0-3 0-2-1-3 1-3 0-2-1-3M626 454l2 1 3 1 2 1 3 1 2 2M670 449l-3 0-2 1-3 0-3 0-2 0-3 1-3 1-2 0-3 1-3 0-2 1-3 0M670 459l-2 1-3 1-2 1-3 0-2 1-3 1-2 1-2 1-3 0-2 2-3 0-2 2-2 1M651 480l0-3 2-2 0-3 1-3 1-3 2-2M621 412l0 3 0 3-1 3 0 3 0 3-1 3M670 394l-2-1-3 0-2-1-3 0-2 0-3-1-2 0-3 0-2-1-3-2-2 0-3 0-2-2-2 0-3-1-2-1-3 0-2-2-2 0-3 0-2-1-3 0-3 0-2 0-2-2-3-1-2 0M632 416l0-2 0-3 0-2 1-3-1-3 0-2 0-3 1-3 0-2 0-3-1-3 0-2M670 335l-2 1-3 0-2 1-3 0-3 0-2 1-2 1-3-1-3 0-2 0-3 1-2 0-3 1-2 0-3 1-2 1-3 1-2 0-3-1-2 1-3 0-2 0-3 1-2 0-3 1-2 0-3 0-2 0-3 0-2 1-3 0-2 0-3 1-2 0-3 1-3-1-2 0-3 0-2 0-3 1-2 0-3 1-2 0-3 0-2 0-3 1-2 0-3 0-2 1-3 0-2 1-3 0-2 1-3 0-2 0-3 1-2 0-3 0-2 1-3 0M609 375l-1-2-1-2-1-3-1-2-1-3-1-2-2-2-1-2-1-3-2-2 0-2-2-2-1-3M575 392l0-2 0-3 0-3-1-2 0-3 0-2 0-3 0-3 0-2 0-3-1-2 0-3 0-3 0-2 0-3 0-2 0-3M519 376l3 0 2 0 3 0 2 0 3 0 2 1 3 0 2 0 3 0 2 0 3 0 2 0 3 0 2 0 3 1 2 0 3 0 2 0 3 0 2 0 3 0 2 0M550 405l1-28M519 399l31 0M537 411l1-12M519 410l18-1M529 415l0-5M528 416l-9-1M524 417l0-2M524 415l-1-5M530 399l0 11M519 405l11 0M523 405l0 5M525 399l0 6M522 399l0 6M537 405l-7 0M534 409l0-4M533 399l0 6M543 408l0-9M537 405l6 0M543 403l7 0M547 406l0-3M546 399l0 4M535 377l0 22M519 385l16 0M527 385l-1 14M519 393l8 0M535 392l-8 0M531 399l0-7M535 396l-4 0M526 376l0 9M519 380l7 0M551 386l-16 0M542 399l1-13M535 393l7 0M539 399l-1-6M535 396l3 0M538 396l4 0M550 394l-8 0M547 399l0-5M551 390l-9-1M546 394l0-4M546 390l0-4M542 377l0 9M542 381l-7-1M542 384l-7 0M539 384l0-4M546 377l0 9M546 382l-4 0M551 383l-5 0M548 386l0-3M562 399l-1-21M550 393l12 1M550 398l12 0M555 402l0-4M557 393l0 5M554 393l1 5M551 386l10 1M557 387l-1 6M551 389l5 0M553 389l0 4M556 378l0 9M561 382l-5 0M561 387l14 1M568 395l0-8M562 394l6 1M569 378l1 9M551 351l-1 3 0 2 0 3-1 2 0 3 0 3-1 2 0 3-1 3 0 2M540 352l0 3-1 3 0 3 0 2 0 3-1 3 0 2-1 3 0 3M529 354l0 22M519 365l10-1M524 355l0 9M539 362l-3 0-4 1-3 0M538 371l-9-1M534 370l0-8M529 365l5 1M548 367l-10-2M543 377l0-3 0-2 0-3 0-3M538 370l5 1M550 358l-3 0-2 0-3 0-3 0M563 349l0 3 0 3-1 2-1 3 0 2-1 3 0 2 0 3-1 2 0 3-1 3M561 364l-3 0-3 0-3 0-3 0M607 344l-1-3 0-3 0-2-1-3 0-2 1-3-1-2 0-3 0-3-1-2-1-3-1-2 0-3 0-2 1-3-1-3 0-2-1-3 1-2-1-3 1-2-1-3 0-3 1-2-1-3 0-2-1-3 0-2M519 299l3 0 2 0 3 1 2 0 3 1 3 0 2 0 3 0 2 1 3 0 2 1 3 0 2 0 3 0 3 0 2 1 3 0 2 0 3 0 2 1 3 0 2 0 3 1 3 0 2 0 3 1 2 0 3 1 2 0 3 0 2 0 3 0 3 0M554 351l0-3 0-3 1-2 0-3 0-2 0-3 0-2-1-3 0-2 0-3 0-2 0-3 0-2 0-3-1-2 0-3 0-2 0-3 0-2M519 325l3-1 2-1 3 0 3-1 2 0 3 0 3-1 2-1 3 0 3-1 2 0 3-1 2-1M519 335l3 0 3 0 2 0 3 1 3 0 2 0 3 0 3 0 2 1 3 0 3 0 2 0 3 0M532 354l0-3 0-3 1-2 0-3 0-2 0-3 1-2M519 343l3 0 3 0 2 0 3 0 3 0M519 350l13 0M526 354l0-4M526 343l0 7M526 335l0 8M539 353l1-3 0-3 1-3 1-2 1-3 0-3M535 321l1 3 0 2 1 3 1 2 0 2 1 3M527 323l0 2 0 3 0 2 0 3 0 2M519 329l3 0 3 0 2 1M539 301l0 3 0 3 0 2 0 3 0 3 0 3-1 3M519 307l3 1 3 0 3 1 2 0 3 0 3 1 3 0M519 319l3 0 3 0 3-1 2 0 3 0 3-1 3 0M528 318l0 5M534 317l0 4M531 309l-1 9M528 300l1 3 0 3 1 3M519 303l10 0M525 299l0 4M553 310l-3 0-3 1-2 1-3 0-3 1M547 319l0-3 0-2 0-3M564 273l1 3 0 2 0 3 0 2 0 3 0 3 1 2 0 3 1 2 0 3 0 3 0 2M544 274l0 2 0 3 0 2 0 3-1 2 0 3 0 2 0 3 0 3 0 2 0 3M519 289l3-1 3 0 2 0 3 0 3 0 2 0 3 0 3 0 2 0M528 288l2 12M535 288l-1 13M534 295l-5 0M543 294l-9 0M528 275l0 2 1 3 0 3 0 2 1 3M519 280l9 0M523 275l0 5M535 274l0 3 1 3 0 2 0 3 1 3M565 286l-2 0-3 0-3 0-3 0-2 0-3 0-3 0-3 1M557 303l0-2-1-3-1-2 0-3-1-2-1-2-1-3M543 293l3 0 3 0 3 1 2 0M562 304l-1-3-1-2-1-3-1-2-1-3 0-2-1-3M592 272l-1 2-1 2-2 2-1 3-1 2-1 2-2 2-1 2-1 2-1 3-1 2-1 2-1 3-1 2-1 2M670 284l-2 1-3 1-2 2-3 0-2 1-2 1-3 1-2 1-2 2-3 0-2 1-3 1-2 1-2 1-3 0-2 1-2 2-3 0-2 1-3 1-2 1-2 2-2 1-2 2-3 0-2 2-3 0-2 1M636 299l-2-3-1-2-2-2-1-2-1-3 0-2-2-2-1-3-1-2-2-3-1-2-2-2M508 74l10 201M440 74l0 204M440 166l-99-1M381 280l-2-114M340 210l40 3M339 243l41 1M363 281l2-37M339 264l25-1M352 282l0-18M339 274l13 1M344 282l0-8M339 277l5 0M340 282l1-5M339 280l2 0M341 279l3 0M344 278l8 0M348 282l0-4M346 282l0-4M349 274l0 4M346 274l0 4M344 264l1 10M339 268l5 0M342 268l0 6M345 271l-3 0M341 264l0 4M344 266l-3 0M352 268l-8 0M348 274l0-6M345 272l3 0M352 271l-4 0M349 274l0-3M349 264l0 4M352 266l-3 0M352 273l12-1M357 281l0-9M352 278l5 0M354 282l0-4M352 280l2 0M357 278l6 0M360 281l0-3M357 279l3 1M360 272l0 6M357 275l3 0M364 275l-4 0M358 264l1 8M352 268l7 0M355 268l0 5M352 271l3 0M359 270l-4 0M357 272l0-2M356 264l0 4M358 266l-2 0M364 268l-5 0M364 271l-5 0M362 272l0-1M362 271l0-3M361 263l0 5M361 265l-3 0M353 243l-2 21M339 254l13 0M347 254l0 10M339 259l8 0M342 259l0 5M339 262l3 0M340 262l0 2M347 261l-5 0M342 254l0 5M352 260l-5 0M352 257l-5 0M349 254l0 3M346 243l0 11M339 247l7 0M339 250l7 0M343 250l0 4M346 252l-3 0M343 247l0 3M343 243l0 4M339 246l4-1M352 248l-6 0M348 254l0-6M346 250l2 1M346 252l2 0M352 251l-4 0M348 243l1 5M350 243l0 5M350 246l-2 0M365 253l-13 0M359 264l0-11M352 259l7-1M355 264l0-5M355 261l4 0M355 253l1 6M352 255l3 0M359 256l-3 0M364 257l-5 0M364 260l-5 0M361 263l0-3M362 260l0-3M364 255l-5 0M362 257l0-2M362 255l0-2M360 243l-1 10M360 248l-8-1M356 253l0-6M360 250l-4 0M358 253l0-3M358 250l0-2M357 243l0 4M355 243l0 4M365 247l-5 0M365 251l-5 0M362 253l0-2M362 251l0-4M360 249l2 0M363 243l0 4M363 245l-3 0M365 246l-2 0M364 259l17 1M364 273l17-1M372 281l0-9M367 281l1-9M364 277l3 0M364 275l4 0M367 277l5 0M376 281l0-9M372 276l4 0M376 276l5 0M371 260l1 12M364 265l8-1M367 265l1 7M364 269l3 0M365 269l0 4M372 269l-5 0M372 266l-5 0M369 269l0-3M367 260l0 5M371 262l-4 0M369 265l0-3M369 260l0 2M381 267l-9-1M377 272l0-5M376 260l1 7M376 263l-5 0M374 260l0 3M374 261l-3 0M381 263l-5 0M381 265l-4 0M378 267l0-2M379 265l0-2M365 253l15 0M374 253l0 7M369 253l0 7M364 257l5 0M367 257l0 3M367 253l0 4M374 257l-5 0M371 260l0-3M374 258l-3 0M372 253l0 4M377 253l-1 7M377 256l-3 0M381 257l-4 0M381 255l-4 0M378 257l0-2M371 244l0 9M365 249l6 0M368 249l0 4M371 251l-3 0M368 244l0 5M365 247l3 0M371 246l-3 0M369 244l0 2M375 244l0 9M375 249l-4 0M375 250l-4 0M373 253l0-3M373 250l0-1M375 246l-4 0M373 249l0-3M375 247l-2 0M373 244l0 2M380 248l-5-1M378 253l0-6M375 250l3 0M380 250l-2 0M357 211l0 32M339 228l18 0M348 228l0 15M339 237l9-1M345 237l0 6M339 239l6 0M341 237l1 2M348 239l-3 0M346 243l0-4M346 237l0 2M339 231l9 1M343 231l0 6M339 235l4 0M341 235l0 2M341 231l0 4M348 234l-5 1M346 237l-1-2M345 232l1 3M345 233l-2 0M342 228l1 3M345 228l0 4M357 236l-9 0M352 243l0-7M348 239l4 0M357 240l-5 0M354 243l0-3M353 243l0-3M357 238l-5 0M354 240l0-2M354 238l0-2M356 238l0-2M352 228l0 8M352 232l-4-1M352 234l-4 0M350 236l0-2M351 236l0-2M350 234l0-3M350 228l0 3M350 230l-2 0M349 228l0 2M357 232l-5 0M357 234l-5 0M354 236l1-2M354 234l0-2M354 228l0 4M354 230l-2 0M357 230l-3 0M348 211l-1 17M340 220l8 0M340 224l8 1M343 224l0 4M345 225l0 3M347 226l-2 0M345 220l0 5M343 220l0 4M340 223l3 0M341 220l0 3M345 223l-2 0M348 222l-3 1M346 225l0-3M346 220l0 2M340 216l8-1M343 215l0 5M340 218l3-1M341 218l0 2M341 216l0 2M345 215l0 5M345 217l-2 0M345 219l-2 0M348 217l-3 0M346 215l0 2M344 211l-1 4M340 213l4 0M341 213l0 3M343 214l-2 0M342 211l0 2M346 211l0 4M346 213l-2 0M348 214l-2 0M348 212l-2 0M357 218l-9 0M357 223l-9 0M351 228l0-5M348 225l3 0M349 228l0-3M347 226l2 0M349 227l2-1M350 225l0 2M354 228l-1-5M351 225l2 0M357 226l-4 0M355 228l0-2M355 226l0-3M351 223l0-5M348 220l3 0M350 223l-1-3M348 222l2 0M350 221l1 1M350 220l0 2M350 218l0 2M354 223l0-5M351 220l3 0M351 222l3 0M351 219l3 0M357 221l-3 0M353 211l0 7M353 214l-5 0M350 218l1-4M353 216l-3 0M351 211l0 3M353 212l-2 0M357 215l-4 0M354 218l0-3M353 216l1 0M357 216l-3 0M355 218l0-2M380 231l-23 1M369 244l0-13M362 243l0-12M357 237l5 0M357 241l5 0M360 243l0-2M359 237l0 4M361 237l0 4M361 239l-2 0M362 239l-1 0M359 232l0 5M357 235l2 0M362 234l-3 0M362 238l7 0M366 244l-1-6M362 241l3 0M365 241l4 0M368 244l0-3M366 231l0 7M362 235l4 0M369 235l-3 0M367 238l0-3M366 236l1 0M369 236l-2 0M380 236l-11 1M374 244l0-7M369 240l5 0M371 244l0-4M371 242l3 0M372 237l0 3M369 239l3 0M380 240l-6 0M377 244l0-4M374 242l3 0M375 244l0-2M380 242l-3 0M377 240l0-3M375 237l0-6M369 235l6-1M373 237l0-3M372 231l1 3M375 233l-2 0M380 234l-5 0M378 237l-1-3M375 235l2 0M377 234l0-3M367 212l-1 19M367 220l-10 1M367 225l-10 1M362 231l0-6M359 232l1-6M357 228l2 0M357 230l2 0M358 232l0-2M359 229l3 0M359 227l3 1M361 228l0 1M361 226l0 2M367 228l-5 0M364 231l0-3M366 230l-2 0M364 228l0-3M361 226l0-5M357 223l4 0M359 226l0-3M359 221l0 2M358 221l0 2M357 222l1 0M359 222l-1 0M361 222l-2 0M364 225l0-5M361 224l3-1M361 222l3 0M362 220l0 2M367 222l-3 0M367 217l-10-1M361 221l0-4M357 218l4 1M359 221l0-3M359 217l0 2M363 220l0-3M361 219l2 0M367 218l-4 0M365 220l0-2M365 218l0-1M362 212l0 5M362 214l-5 0M359 217l0-3M360 211l0 3M358 211l0 3M380 222l-13 1M373 231l-1-8M367 227l5 0M370 231l-1-4M367 229l2 0M368 231l0-2M370 230l3 0M371 231l0-1M370 223l0 4M367 225l3 0M372 225l-2 0M375 231l0-8M372 226l3 0M372 229l3 0M374 231l0-2M380 226l-5 0M380 228l-5 0M378 231l0-3M378 228l0-2M378 226l0-4M375 225l3 0M380 224l-2 0M373 212l1 11M373 217l-6 0M371 223l0-6M367 220l4 0M369 223l0-3M367 221l2 0M369 217l0 3M368 217l0 3M374 220l-3 0M369 212l1 5M369 214l-2 0M373 214l-4 0M380 217l-7-1M380 220l-6 0M376 223l0-3M378 222l0-2M377 220l0-4M373 218l4 0M375 220l0-2M377 212l0 4M377 214l-4 0M340 185l40 0M363 185l-1 27M340 198l22 0M352 198l0 13M340 205l12 0M346 205l1 6M344 205l0 6M340 207l4 0M341 205l0 2M340 206l1 0M346 207l-2 1M352 208l-5 0M349 211l0-3M351 211l0-3M350 205l0 3M345 198l0 7M340 201l5 0M342 201l0 4M343 198l0 3M345 200l-2 0M352 201l-7 0M348 205l0-4M345 203l3 0M350 205l0-4M348 203l2 0M352 203l-2 0M348 198l0 3M362 204l-10 0M358 211l-1-7M352 208l6 0M354 211l0-3M354 210l4 0M356 211l0-1M355 204l0 4M352 205l3 0M354 205l0 3M362 208l-4 0M360 208l0-4M357 206l3 0M356 198l0 6M356 200l-4 1M354 204l0-4M362 201l-6 0M359 198l0 3M350 185l1 13M340 192l10 0M346 192l0 6M343 192l0 6M340 195l3 0M351 195l-5 0M348 198l0-3M346 185l0 7M340 189l6 0M343 189l0 3M343 185l0 4M357 185l0 13M357 192l-7 0M353 198l0-6M351 194l2 0M357 194l-4 0M357 189l-7-1M363 192l-6 1M362 196l-5 0M359 198l0-2M380 198l-18 0M372 212l0-14M362 205l10 0M366 212l0-7M362 209l4 0M364 212l0-3M366 209l6 0M370 212l0-3M369 205l0 4M372 207l-3 0M366 198l0 7M362 202l4 0M372 201l-6 0M380 206l-8 0M376 212l0-6M372 209l4 0M380 210l-4 0M376 206l0-8M372 202l4 0M380 202l-4 0M372 185l1 13M373 191l-10 1M367 198l-1-6M363 195l4 0M373 195l-6 0M369 185l0 6M369 188l-6 0M366 192l1-4M373 189l-4 0M380 192l-7 0M380 195l-7 0M376 198l0-3M376 195l0-3M357 165l1 20M340 175l18 0M350 175l0 10M340 180l10 0M344 180l0 5M344 175l0 5M358 180l-8 0M350 165l0 10M341 169l9 1M346 169l0 6M350 172l-4 0M344 165l0 4M357 170l-7 1M354 175l0-5M353 165l0 5M353 168l-3 0M369 166l1 19M370 177l-12 0M364 185l0-8M370 181l-6 0M367 185l0-4M367 181l0-4M364 166l1 11M364 172l-7 0M370 171l-6 0M366 166l0 5M379 174l-9 0M380 180l-10-1M374 185l0-5M370 182l4 0M374 180l0-6M375 166l1 8M379 169l-4 0M440 222l-60-3M440 249l-60 3M407 279l-1-28M381 264l26 1M392 280l-1-16M381 273l11-1M386 280l1-7M381 276l6 0M383 280l1-4M383 273l0 3M387 276l5 1M390 280l0-4M390 272l0 4M386 264l0 9M381 268l5 0M392 269l-6 0M389 272l0-3M389 264l0 5M392 274l15 0M398 280l0-6M396 280l0-6M392 277l4 0M396 276l2 0M402 280l0-6M398 276l4 1M400 274l0 3M402 277l5-1M405 279l0-3M399 265l0 9M392 268l7 0M396 268l0 6M392 271l4 0M393 268l0 3M399 270l-3 1M395 265l0 3M407 270l-8-1M402 274l0-4M403 265l0 5M392 252l0 13M381 257l11 1M388 257l-1 7M381 260l7 0M383 260l0 4M387 262l-4 0M386 264l-1-2M383 257l0 3M392 261l-4 0M389 257l0 4M387 252l0 5M384 252l0 5M381 255l3 0M387 255l-3 0M392 255l-5-1M390 257l0-3M389 252l0 2M392 253l-3 0M398 251l0 14M398 257l-6 0M398 260l-6 0M395 265l0-5M395 260l0-3M395 251l0 6M395 254l-3 0M398 254l-3 0M406 257l-8 0M406 260l-8 0M401 265l0-5M398 262l3 0M401 260l0-3M401 251l0 6M401 254l-3 0M400 251l0 3M440 260l-33 1M426 279l-1-19M407 269l18-1M418 279l0-10M407 274l11 0M414 279l0-5M410 279l0-5M414 277l4 0M414 269l0 5M410 269l-1 5M418 274l7 0M415 260l0 9M410 261l0 8M407 265l3 0M407 267l3 1M415 265l-5-1M415 267l-5 0M421 260l0 8M421 264l-6 0M425 265l-4-1M440 269l-15-1M431 278l0-9M425 274l6 0M434 278l0-9M431 274l3 0M434 269l0-9M440 264l-6 1M437 269l0-4M423 260l0-10M413 261l0-11M406 256l7 0M410 261l0-5M410 258l3 0M409 251l0 5M413 253l-4 0M413 254l10 0M417 260l-1-6M417 257l6 0M419 260l0-3M417 250l0 4M432 260l0-11M423 256l9 0M426 260l0-4M427 250l0 6M423 253l4-1M440 254l-8 0M436 260l0-6M414 250l-1-29M397 251l1-31M380 239l17 0M390 252l1-13M380 245l10-1M386 252l0-8M380 248l6 0M383 252l0-4M383 250l3 0M383 245l0 3M386 249l4-1M386 239l0 5M380 242l6 0M383 242l0 3M384 239l0 3M390 242l-4 0M388 244l0-2M389 239l0 3M390 246l7 0M394 252l0-6M390 249l4 0M392 252l0-3M394 248l3 0M390 243l7 0M393 243l0 3M395 243l0 3M393 239l0 4M380 229l17 1M390 230l1 9M380 233l10 1M386 234l0 5M384 233l0 6M380 236l4 0M386 236l-2 0M390 236l-4 0M388 234l0 2M384 230l0 3M387 230l0 4M390 231l-3 1M389 234l0-2M397 235l-7 1M394 239l0-3M395 239l0-4M394 237l1 0M394 230l0 6M394 233l-4 0M397 232l-3 0M389 220l0 10M380 226l9 0M384 226l0 4M380 227l4 0M386 226l0 4M389 228l-3 0M384 220l0 6M380 223l4 0M389 223l-5 0M387 226l0-3M398 225l-9 0M394 230l0-5M393 220l0 5M393 223l-4 0M397 235l16 0M405 251l0-16M397 243l8 0M400 251l1-8M397 246l4 0M397 248l3 0M401 247l4 0M403 251l0-4M403 243l0 4M401 245l2 0M397 239l8 0M402 239l-1 4M399 239l0 4M405 242l-3 0M400 235l0 4M405 244l9 0M410 251l0-7M405 247l5 0M407 251l0-4M410 247l4 0M410 235l0 9M405 240l5 0M414 240l-4 0M414 238l-4 0M398 227l15 0M404 227l0 8M397 230l7 1M401 231l0 4M409 227l-1 8M408 231l-4 0M413 230l-5 0M411 235l0-5M408 233l3 0M407 221l0 6M403 220l0 7M398 223l5 0M400 220l0 3M407 223l-4 0M410 221l1 6M411 224l-4 0M413 224l-2 0M426 250l-1-29M413 233l13-1M414 241l12-1M420 250l0-10M414 246l6-1M417 250l0-4M416 240l0 6M420 246l6 0M423 240l0 6M420 233l0 7M414 237l6 0M416 233l0 4M426 237l-6 0M413 227l12 0M421 227l0 6M417 227l0 6M421 221l0 6M440 238l-14-1M434 249l0-12M426 244l8 0M430 249l0-5M440 244l-6 0M434 237l0-15M425 230l9-1M429 222l0 8M440 230l-6-1M440 192l-60 2M414 221l0-28M396 220l0-26M380 209l16 0M387 220l0-11M380 215l7 0M384 220l0-5M384 209l0 6M380 213l4 0M383 213l0 2M387 213l-3 0M387 215l9 0M392 220l0-5M389 220l0-5M389 218l3 0M391 209l0 6M396 213l-5 0M390 194l-1 15M380 201l10 0M384 201l0 8M380 205l4 0M390 204l-6 0M386 194l-1 7M390 197l-4 0M396 203l-6 0M396 198l-6 0M393 203l0-5M396 200l-3 0M393 194l-1 4M396 206l18 1M405 221l-1-15M396 213l9 0M400 220l0-7M396 217l4 0M400 217l5 0M399 206l0 7M396 210l3 0M405 210l-6 0M402 213l0-3M405 213l9 0M409 221l0-8M405 217l4 0M409 216l5 0M408 207l0 6M405 210l3 0M414 210l-6 0M411 207l0 3M405 193l1 14M396 200l9-1M400 200l0 6M396 203l4 0M401 193l-1 7M396 197l5 0M414 200l-9 0M409 207l0-7M409 193l0 7M440 206l-26 1M428 222l0-15M422 221l-1-14M414 213l7 0M418 221l0-8M414 217l4 0M418 218l4 0M417 207l1 6M421 213l7 1M440 215l-12 0M435 222l0-7M433 215l0-9M440 211l-7 0M429 207l0-14M414 200l15 0M423 207l1-7M418 207l0-7M421 193l0 7M440 199l-11 0M434 206l0-7M440 202l-6 0M434 199l0-7M416 193l0-27M399 193l2-27M380 180l20 1M389 194l1-14M380 187l10-1M384 194l0-7M380 191l4 0M384 189l6 1M384 180l0 7M380 182l4 1M382 180l0 3M387 180l0 6M390 189l10 0M394 194l0-5M395 181l0 8M400 184l-5 0M392 166l0 14M379 172l13 0M387 172l0 8M379 177l8-1M382 176l0 4M383 172l0 4M385 166l-1 6M389 166l-1 6M400 175l-8 0M396 181l0-6M401 170l-9 0M396 175l-1-5M397 166l0 4M400 180l16-1M407 193l1-13M400 188l7 0M404 193l0-5M407 187l9 0M412 193l0-6M407 190l5 0M413 179l-1 8M408 166l0 14M400 174l8-1M404 174l0 6M404 166l0 8M401 169l3 0M408 169l-4 0M416 172l-8 1M416 176l-8-1M412 175l0-2M429 193l-1-27M416 183l12-1M423 193l0-11M416 189l7-1M420 193l0-5M423 187l5 1M416 174l12-1M423 174l0 8M422 166l0 8M440 180l-12-1M435 192l0-12M428 186l7 0M440 186l-5 0M440 172l-12 0M434 180l0-8M440 176l-6 1M435 172l0-6M392 74l0 3 1 2 0 3 0 2 0 3 0 2 0 3 0 2 0 3 0 3 0 2 0 3 0 2 0 3 0 2 0 3 0 2 0 3 0 3 0 2 0 3 0 2 0 3 1 2 0 3 0 2 0 3 0 2 0 3 0 3 0 2 0 3 0 2 0 3 0 2 0 3M393 130l-52 0M370 166l-1-36M341 148l29-1M354 165l0-18M341 156l13 0M348 165l0-9M341 160l7 0M348 160l6 1M351 156l1 5M346 148l0 8M341 151l5 0M351 148l0 8M351 152l-5 1M354 152l-3 0M354 155l16 0M362 166l0-11M354 160l8-1M359 165l0-6M362 161l8 0M366 155l0 6M361 147l-1 8M354 151l6 0M357 151l0 4M366 147l0 8M366 151l-6 1M370 151l-4 0M354 130l-1 17M341 139l12 0M347 139l0 9M341 143l6 0M344 139l0 4M353 143l-6 0M350 139l0 4M347 130l0 9M341 134l6 0M363 130l0 17M363 138l-10 0M358 147l1-9M353 142l6 0M363 142l-4 0M358 130l0 8M369 139l-6 0M370 143l-7 0M394 148l-24 0M379 166l0-18M370 159l9 0M375 166l0-7M370 162l5 1M375 162l4 0M374 148l0 11M370 154l4 0M379 153l-5 0M376 148l0 5M376 150l-2 0M394 157l-15 0M389 166l-1-9M379 162l9 0M383 166l0-4M384 157l-1 5M388 160l-4 0M394 161l-6 0M387 157l0-9M379 152l8 0M384 148l0 4M394 153l-7 0M390 153l0-5M381 148l-1-18M369 141l12 0M375 148l0-7M369 135l11 0M375 135l0 6M374 130l0 5M394 140l-13 0M387 148l0-8M381 145l6 0M394 143l-7 0M387 140l1-10M380 135l8 0M385 140l-1-5M394 136l-6 0M390 140l0-4M364 74l0 3 0 2 0 3 0 2 0 3 1 2 0 3 0 2 0 3 0 2 0 3 0 3 0 2 0 3 0 2 0 3 0 2 0 3 1 2 0 3 0 2 0 3M365 102l-3-1-2 0-3-1-2-1-3 0-2-1-3 0-3-1-2 0M365 114l-2 0-3 0-3 0-2-1-3 0-3 0-2 0-3 0-2 0M352 130l0-3-1-3 0-2 0-3-1-3 0-3M341 122l10-1M345 130l1-8M359 130l0-3-1-3 0-2 0-3-1-3 0-3M351 120l7 1M366 121l-8 1M366 126l-7 0M362 126l0-5M353 113l0-3 0-2-1-3 0-3 0-3M365 106l-2 0-3 0-2 0-3 0-2 0M359 106l1-5M365 89l-3 0-3 0-2 0-3 0-2 1-3 0-2-1-3 1-2 0M355 100l0-3 0-3 0-2 0-3M349 98l0-3 0-3-1-3M365 97l-3 0-4 0-3-1M350 74l1 3 0 2 0 3 1 2 1 3 0 2M358 74l-1 3-1 2 0 3-1 2-1 3 0 2M393 103l-3 0-2 0-3-1-2 0-3 0-2-1-3 0-2 0-3 0-2 0-3 0M379 130l0-28M365 112l3 0 3 0 2 0 3 0 3 0M366 120l13 0M371 130l0-10M366 126l5 0M372 112l-1 8M371 101l0 3 0 3-1 2 0 3M379 107l-9 1M393 118l-14 1M386 130l0-12M379 123l7 0M383 119l0 4M393 123l-7 0M390 123l0-5M393 109l-14 0M386 118l1-9M379 113l8 0M383 119l1-6M386 109l-1-7M389 109l0-6M378 74l0 3 0 2 0 3 0 2 1 3 0 2 0 3 0 2 0 3 0 2 0 3M378 88l-14-2M379 93l-3 0-3 0-3 1-3 0-2 0M371 101l0-8M371 93l0-3 1-3M371 74l0 3 0 2-1 3 0 2 0 3M393 91l-14 0M393 82l-3 0-3-1-3 0-3 0-3 0M386 74l0 4 0 3M440 115l-47 2M440 147l-46-1M423 166l-1-19M407 166l1-19M394 154l14 0M394 161l14 0M400 166l0-5M405 166l-1-5M405 164l2 0M402 154l-1 7M400 146l0 8M404 146l1 8M408 150l-3 0M408 155l14 0M415 166l0-11M408 160l7-1M412 166l-1-6M412 162l3 0M415 162l8-1M419 166l0-4M415 158l7 0M415 147l-1 8M408 150l7 0M412 150l0 5M422 152l-7 0M440 158l-18-2M429 166l0-9M434 166l-1-9M440 163l-7 0M436 163l0-6M432 157l0-10M422 152l10 0M415 147l0-31M393 133l22 0M405 147l0-14M394 141l11 0M400 146l0-5M397 146l0-5M397 144l3 0M398 133l0 8M405 137l-7-1M405 138l10 1M410 147l0-8M405 142l5 0M411 133l0 6M404 116l0 17M393 125l11 0M398 125l-1 8M404 128l-6 0M401 125l0 3M400 117l0 8M393 120l7 0M415 126l-11 0M411 133l0-7M404 129l7 0M408 126l0 3M415 121l-11 0M409 126l0-5M440 130l-25 0M429 147l0-17M415 139l14 1M424 147l0-7M415 142l9 0M423 130l0 10M419 130l0 10M415 135l4 0M423 135l-4 0M440 140l-11 0M434 147l0-7M440 136l-11 0M433 140l0-4M434 136l0-6M431 130l-1-15M421 130l0-14M415 122l6-1M415 126l6 0M421 125l9-1M426 115l1 9M421 121l6 0M430 121l-3 0M440 124l-10 0M435 130l0-6M434 124l0-9M430 119l4 0M440 119l-6-1M440 122l-6 0M416 74l0 42M416 93l-23 2M416 106l-23-1M403 117l0-12M393 111l10 1M398 117l0-6M397 105l0 6M411 116l-1-10M404 105l0-11M398 105l1-11M393 100l6 0M399 99l5 0M416 98l-12 1M409 106l0-7M412 106l0-7M416 102l-4 0M409 99l0-5M416 85l-3 0-2-1-3 0-3 0-2 0-3 0-2 0-3 0-2 0M402 94l0-10M396 94l0-2 1-3 0-3 0-2M397 89l5-1M408 94l0-10M416 90l-8 0M407 74l0 10M440 98l-24-2M428 115l1-18M416 105l13-1M422 116l0-11M416 110l6 1M422 109l7 0M423 97l0 7M416 100l7 0M419 100l0 5M429 100l-6 0M440 105l-11 0M440 109l-11 0M435 115l0-6M431 115l1-6M432 112l3 0M434 109l0-4M433 105l0-8M427 74l1 23M427 86l-11 0M428 93l-12-1M421 96l0-4M421 92l0-6M440 88l-13 1M434 97l0-9M440 94l-6 0M440 82l-13 0M435 88l0-6M432 74l0 8M513 174l-73-2M515 214l-75 0M487 276l0-62M440 240l47 3M466 277l1-36M440 261l27 0M454 277l0-16M440 270l14 0M447 278l0-8M440 274l7 0M443 278l0-4M449 261l-1 9M454 271l13 0M460 277l1-6M457 277l0-6M461 261l0 10M454 267l7 0M457 261l0 6M467 265l-6 0M455 241l0 20M440 252l15 0M446 252l0 9M440 256l6 0M443 252l0 4M455 257l-9-1M450 252l0 5M448 240l-1 12M440 247l7 0M443 240l0 7M440 244l3 0M455 246l-8 0M451 240l-1 6M467 251l-12 0M462 261l0-10M467 257l-5 0M461 241l-1 10M460 246l-5 0M467 247l-7 0M467 259l20 0M476 277l-1-18M467 267l9 0M466 273l10 0M472 277l0-4M467 263l9 0M470 259l0 4M476 267l11 0M483 276l-1-9M482 271l5-1M482 259l0 8M476 262l6 0M487 262l-5 0M478 242l1 17M467 250l12-1M473 249l0 10M467 254l6 0M473 242l1 7M487 252l-8 0M459 214l-1 27M440 226l19 0M447 226l0 14M440 233l7 0M458 233l-11-1M454 226l0 7M454 229l-7 0M451 226l0 3M447 214l0 12M440 221l7 0M454 214l0 12M454 219l-7 0M459 219l-5 0M472 214l1 28M473 224l-14 1M464 241l-1-16M458 234l6 0M458 230l6 0M473 234l-9 0M464 214l0 11M464 219l-5 0M472 219l-8 1M487 226l-14 1M487 235l-14 0M480 242l0-7M482 235l0-8M487 220l-15-1M480 227l0-7M482 214l0 6M517 246l-30 1M504 275l0-28M487 263l17-1M497 276l-1-14M487 271l10 0M496 268l8 0M501 262l0 6M496 247l-1 15M487 255l8 1M487 259l8 1M504 255l-9-1M499 262l0-8M518 263l-14 1M518 271l-14-1M512 275l0-4M508 275l0-5M510 271l0-8M517 255l-13-1M513 263l-1-8M504 259l8 1M508 264l0-5M508 255l0 4M510 255l1-9M503 247l1-33M487 230l17 0M487 238l16 0M496 247l-1-9M494 230l1 8M497 214l-1 16M487 221l9 0M487 226l9 0M491 221l0 5M493 214l0 7M504 223l-8 0M516 232l-13 1M516 237l-13 2M508 247l0-9M516 242l-8 0M512 242l0-4M510 238l0-5M516 226l-12-1M511 233l0-8M510 225l0-11M475 214l-2-41M440 197l34 1M454 214l0-16M440 207l14 0M449 214l-1-7M445 214l-1-7M448 197l-1 10M440 202l7 0M454 203l-7 0M451 197l0 6M463 214l0-16M454 205l9 0M463 207l12 1M468 214l0-7M470 198l0 9M463 204l7-1M474 204l-4 0M456 172l0 26M440 186l16 0M448 186l0 11M440 193l8 0M445 193l0 4M456 191l-8 0M448 172l0 14M440 180l8 0M443 180l0 6M440 183l3 1M440 177l8 0M456 178l-8 0M473 187l-17 0M465 198l0-11M456 192l9 0M461 187l0 5M474 192l-9 0M470 192l0-5M464 173l0 14M464 178l-8 0M473 179l-9 1M467 187l1-7M464 184l3-1M498 214l-2-41M474 192l23 1M484 214l-1-21M474 202l10 0M475 207l9 0M479 202l0 5M474 197l10 0M478 193l0 4M484 203l13-1M484 208l13 0M491 214l0-6M494 214l0-6M490 203l0 5M489 193l0 10M485 173l1 20M473 181l13 1M478 181l1 12M473 187l6 0M486 187l-7 0M480 173l0 8M485 177l-5 0M496 183l-10-1M490 193l1-11M486 186l5 0M496 178l-11 0M490 182l0-4M491 173l0 5M514 195l-17 1M507 214l-1-18M497 204l10 1M497 209l10 0M501 214l1-5M501 196l0 8M507 199l-6 1M514 203l-7 0M515 208l-8 0M510 214l0-6M513 184l-17 0M507 196l0-12M496 189l11 0M501 196l0-7M514 190l-7 1M505 184l0-10M501 184l0-11M496 179l5 0M501 178l4 0M501 181l4 0M513 180l-8 0M510 184l-1-4M508 180l0-6M510 113l-70 1M473 173l-4-59M440 143l31 1M459 172l1-28M440 159l20 0M450 172l0-13M440 165l10 0M445 172l0-7M445 170l5-1M446 159l-1 6M440 162l5 0M450 165l10 1M455 172l0-7M451 143l0 16M440 152l11 0M445 152l-1 7M444 143l1 9M451 147l-7 0M460 152l-9 0M455 159l0-7M460 147l-9 1M455 152l0-4M456 143l0 5M460 156l12 0M460 164l12 0M467 173l0-9M467 168l6 0M467 156l0 8M472 159l-5 0M460 150l11 0M465 150l0 6M465 144l0 6M468 144l0 6M440 127l30 1M457 128l0 15M440 134l17-1M450 134l0 9M444 134l0 9M457 139l-7 0M453 134l0 5M450 128l0 6M445 127l0 7M440 131l5-1M464 128l-1 16M463 137l-6 0M463 133l-6 0M471 136l-8 0M470 132l-7 1M468 128l-1 4M456 114l0 14M448 114l0 14M440 120l8 0M456 122l-8-1M470 122l-14 0M462 128l0-6M462 114l1 8M462 117l-6 0M511 144l-40 1M497 173l0-29M485 173l0-29M472 157l13 0M479 173l0-16M472 166l7 0M472 160l7 1M476 157l0 3M479 164l6 0M479 169l6 0M479 145l0 12M472 151l7 0M475 151l0 6M475 145l0 6M485 151l-6-1M485 156l12 1M485 165l12 0M490 173l0-8M485 168l5 0M491 156l1 9M485 161l7 0M485 150l12 0M491 150l0 6M497 152l-6 0M491 144l0 6M487 144l0 6M512 163l-15-1M504 174l1-12M497 168l7 0M500 173l0-5M512 151l-15 0M505 162l0-11M497 155l8 1M502 162l0-6M512 157l-7-1M503 151l0-7M488 144l1-31M470 131l19 0M481 144l-1-13M471 137l10-1M476 145l-1-8M474 131l1 6M481 137l8 0M470 124l19 0M480 124l0 7M474 124l0 7M484 124l0 7M479 113l0 11M489 119l-10 0M484 124l0-5M484 113l0 6M511 131l-22 1M499 144l1-13M494 144l0-13M489 137l5 1M494 137l6 0M511 137l-11 0M506 144l0-7M499 141l7 0M506 137l0-6M501 131l0-18M489 121l12 0M489 125l12 1M494 131l0-6M498 131l0-6M494 121l0 4M510 122l-9-1M510 127l-9 0M506 131l0-4M505 127l1-6M505 121l1-8M501 116l5 0M477 74l-1 39M476 90l-36 1M458 114l0-23M440 102l18 1M448 114l1-11M440 107l8 0M448 108l10 0M452 114l0-6M453 103l1 5M448 91l0 12M440 96l8 0M443 91l1 5M458 95l-10 0M453 91l0 4M476 105l-18-1M467 114l0-9M472 113l0-8M476 108l-4 0M465 105l1-15M458 97l8 0M461 104l1-7M476 97l-10-1M470 105l0-9M466 101l4 0M476 100l-6 0M470 96l0-6M458 74l1 17M458 83l-18 1M449 91l1-8M446 91l0-7M454 91l0-8M448 74l0 10M469 74l-1 16M468 83l-10 0M463 90l0-7M464 74l0 9M477 82l-8-1M509 95l-33 0M492 113l0-18M483 113l1-18M476 105l8-1M484 105l8 0M500 113l-1-18M492 103l7 0M492 99l7 0M495 99l0 4M509 106l-9 0M509 102l-10 0M504 102l-1-7M493 74l-1 21M492 87l-16 0M485 95l0-8M481 95l0-8M476 91l5 0M486 74l-1 13M486 79l-9 1M481 87l0-8M485 84l-4 0M481 74l0 5M493 81l-7 0M508 85l-16 0M500 95l0-10M492 89l8 0M500 74l0 11M500 80l-7 1M497 85l0-5M496 74l-1 7M508 78l-8 1M670 189l-2 0-3 0-2-1-3 0-2 0-3 0-2 0-3 0-2-1-3 0-2 0-3 0-2 0-3-1-2 0-3 0-2 0-3-1-2 0-3 0-2 0-3-1-2 0-3 0-2 0-3-1-2 0-3 0-2 0-3 0-2-1-3 0-2 0-3 0-2-1-3 0-2 0-3 0-2 0-3-1-2 0-3 0-2 0-3-1-2 0-3 0-2 0-3 0-2-1-3 0-2 0-3 0-2-1-3 0-2 0-3 0-2 0-3-1-2 0-3 0-2 0-3-1-2 0M575 273l0-3 0-3 0-2 0-3 0-2 0-3 0-2 0-3-1-2 0-3 0-3 0-2 0-3 0-2 0-3 0-2 0-3 0-2-1-3 0-3 0-2 0-3 0-2 0-3 0-2 0-3-1-2 0-3 0-3 0-2 0-3 0-2 0-3 0-2 0-3-1-3M515 221l58-3M517 249l2 0 3 0 2 0 3 0 2 0 3 0 2 1 3 0 2 0 3 0 2 0 3 0 2 0 3 0 2 0 3 0 2 1 3 0 2 0 3 0 2 0 3 0 2 1M547 274l0-3 0-2 0-3 0-3 0-2 0-3 0-3 0-2 0-3M532 274l0-2 0-3 0-3 0-3 0-3 0-2-1-3 0-3 0-3M518 262l14-1M524 275l0-13M518 269l6-1M524 268l8 0M517 255l14-1M525 255l1 7M526 249l0 6M532 265l2-1 3 0 2 0 3 0 3 0 2 0M541 274l0-3 0-3 0-4M537 274l-1-3 0-3-1-4M536 269l5-1M537 250l0 3 0 3 1 3 0 2 0 3M532 258l6 0M547 256l-9 0M561 273l-1-2 0-3-1-2 0-3-1-2-1-3 0-2-1-3 0-2M547 261l11 0M547 265l3 1 2 1 3 0 2 1 3 0M553 261l0 3 1 3M558 259l3 1 2 0 3 0 3 0 3 1 3 0M568 251l-1 3-1 3 0 3M537 220l2 30M516 236l22 0M528 236l-1 13M516 242l12 0M523 242l-1 7M524 236l-1 6M538 244l-11 0M526 220l1 16M516 229l11 1M522 229l0 7M520 220l0 9M516 224l4 0M527 225l-7 1M538 227l-11 1M532 236l0-8M533 220l0 8M551 219l1 3 0 2 0 3 0 3 0 2 1 3 0 2 0 3 0 3 0 2 1 3 0 3M553 235l-15 1M553 245l-2-1-3 0-2 0-3 0-2 0-3 0M548 250l-1-6M546 244l0-9M544 219l-1 16M543 228l-5-1M552 229l-9 0M548 235l1-6M574 235l-3 0-3 0-2 0-3 0-2 1-3 0-3 0-2 0M564 251l0-3 0-2 0-3 0-2-1-3 0-3M553 243l3 0 3 0 2-1 3 0M561 251l-1-3 0-3 0-3M560 236l-1 7M574 244l-2 0-3 0-3 0-2 0M560 219l0 17M560 229l-8 0M560 224l-8 0M573 229l-13 0M566 235l0-6M566 219l0 10M538 177l2 43M514 198l25-1M530 198l0 22M515 210l15 0M522 210l1 10M521 198l-1 12M514 203l7 0M530 205l-10 0M525 198l0 7M525 201l-4 0M530 201l-5 0M540 210l-10 0M536 220l0-10M530 216l6 0M539 204l-9 0M534 210l0-6M534 198l0 6M539 201l-5 0M526 176l-1 22M514 188l11-1M514 194l11 0M519 194l0 4M519 188l0 6M525 190l-6 0M522 194l0-4M519 176l0 12M513 182l6 0M526 182l-7 0M538 186l-12 0M539 193l-14 0M531 198l0-5M528 198l0-5M531 193l0-7M525 189l6 0M534 193l0-7M531 177l0 9M531 181l-5 0M538 181l-7 0M572 196l-33-1M553 219l0-24M539 205l14 0M540 211l13 0M545 219l0-8M540 215l5-1M545 205l0 6M547 195l0 10M539 201l8 0M553 199l-6 1M573 210l-20-1M565 219l1-9M557 219l1-9M553 215l5 0M558 215l7 0M560 210l1-14M553 202l8 1M558 196l0 6M561 198l-3 0M572 204l-11 0M566 210l1-6M567 204l-1-8M557 179l0 17M557 189l-19-1M548 195l0-7M545 178l1 10M545 182l-7 0M541 178l0 4M550 179l1 9M551 183l-6-1M557 184l-6 0M553 188l1-4M566 180l0 16M566 189l-9 0M562 196l0-7M566 185l-9-1M572 186l-6 0M572 190l-6 0M620 271l-1-3 0-2 0-3 0-2 0-3-1-2 0-3 0-2 0-3-1-2 0-3-1-2 0-2 0-3 0-2-1-3 0-2-1-3 0-2 0-3-1-2 0-3 0-2 0-3 0-2-1-3 0-2 0-3-1-2 0-3 0-2-1-3 0-2 0-3 0-2M573 222l3 0 2 0 3 0 2 0 3 0 2 0 3 0 3 0 2 0 3 0 2 0 3-1 2 0 3 0 2 0 3 1M598 272l0-3 0-2 0-3 0-2 0-3-1-2 1-3-1-2 0-3 0-2 0-3 0-2 0-3 0-2 0-3 0-2 0-3-1-2 0-3 0-2M574 254l3 0 3 0 2 0 3 0 2-1 3 0 2 0 3 0 3-1M574 242l3 0 2-1 3 0 2 0 3-1 2 0 3-1 2 0 3 0M587 240l0 3 1 2 0 3 1 2 0 3M583 241l0 2 0 3-1 2 0 3-1 2M574 235l2 0 3 0 2-1 3 0 2 0 3-1 3 0 2-1 3 0M586 234l0 3 0 3M579 235l0 6M588 222l-2 11M579 222l0 13M574 230l5 0M587 226l-8 1M596 226l-9 1M597 248l3 0 3 0 3 1 3 0 3 0 2 0 3 1M597 232l2 0 3 1 3 0 2 1 3 0 3 0 2 1M606 222l-1 2-1 3 0 3-1 3M572 204l3 0 3 0 2 0 3 0 3 0 2-1 3 0 2 0 3 0 3 0 2 0 3 0 2 0 3 0 3 0M597 203l1 3 0 2 0 3 0 3 0 2 0 3 0 3M586 204l1 18M573 213l13 1M580 213l0 9M573 217l7 0M587 218l-7 0M580 204l-1 9M573 209l7-1M576 204l0 5M598 214l-12 0M592 222l-1-8M598 209l-12 0M592 214l0-5M593 203l0 6M613 211l-3 0-2 0-3 0-2 0-3 0-2 0M608 222l0-3-1-3 0-2 0-3M604 222l0-3 0-3 0-2 0-3M607 203l0 3 0 2 0 3M602 203l0 8M593 182l1 21M572 192l22 0M581 192l0 12M572 199l9 0M588 192l1 11M588 198l-7 0M594 196l-6 0M585 182l0 10M580 181l-1 11M594 186l-9 0M611 194l-3 1-3 0-3 0-3 0-3 0-2 0M601 203l1-8M606 203l0-3 0-3 0-2M601 199l5 1M611 199l-5-1M603 183l-1 12M602 190l-8 0M599 183l-1 7M670 234l-3 0-2 0-3 0-2 0-3-1-2 0-3 0-2-1-3 0-2-1-3 0-2 0-3 0-2 0-3-1-2 0-3 0-2 0-3 0-2-1-3 0-2 0M644 270l-1-3 0-2-1-3 0-2-1-3 0-3 0-2 0-3-1-3-1-2 0-3-1-2 0-3-1-2 0-3M617 252l3 0 3 0 2 1 3 0 2 0 3 0 3 0 2 0 3 1M631 230l0 3-1 3 0 3 0 3 0 2 0 3 0 3 0 3M616 240l2 1 3 1 2 1 3 1 2 1 2 2M670 250l-3 0-2 1-3-1-2 0-3 0-2-1-3 0-2 1-3-1-2 0-3 0-2 0M659 269l-1-2-1-3-1-2-2-3-1-2-2-2-1-3-1-2M638 231l0-3 1-2 0-3 1-2 0-3 1-2 0-3 1-3 0-2 1-3 0-2 1-3 0-2 1-3 0-3 1-2 0-3M613 213l2-1 3 0 2 0 3-1 2-1 3 0 2-1 3 0 2-1 2 0 3-1 2 0M628 230l-1-3-1-2-1-3 0-3-1-3-1-2 0-3M614 223l3 0 3-1 3 0 2-1M620 229l0-7M619 212l0 2 0 3 0 3 1 2M624 218l3 0 3 0 3 0 2-1 3 0 3 0M634 209l0 2 0 3 0 3M628 186l0 2 1 3 0 2 1 3 0 3 1 2 0 3 0 2 1 3M611 199l3 0 3 1 3 0 2 0 3 1 3 0 3 0M619 200l0 3 1 3 0 3 0 2M612 205l7-1M612 209l8 1M622 185l-2 15M610 190l3 1 3 0 3 0 2 1M617 191l0 9M616 184l1 7M629 194l-2 0-3 0-3 0M626 201l0-3-1-4M644 198l-3 0-2 0-3 0-3 0-3 0M639 187l0 2 0 3-1 3 0 3M635 186l0 3-1 3 0 3-1 3M634 190l-5 1M639 192l-5 0M670 217l-3-1-2 0-3 0-2 0-3-1-3 0-2 0-3 0-3-1-2 0-3 0M654 233l0-3 0-2-1-3 1-2 0-3 0-3 0-2M670 202l-3 0-2-1-3 0-2 0-3 0-3-1-2 0-3-1-2 0-3 0M657 215l0-3 0-3 1-3 0-3 0-3M670 208l-3 1-2 0-3 1-2 0-3 1M657 200l0-12M645 195l2-1 3-1 2 0 3-1 2 0M651 200l0-4-1-3M670 193l-3 1-2 0-2 0-3 0-3 0M578 74l-8 106M574 125l-64 3M545 178l2-52M512 151l34 1M529 177l-1-26M512 166l17 0M522 176l0-10M513 172l9 0M518 176l0-4M518 166l0 6M522 170l7 0M525 166l0 4M512 158l16 0M520 158l0 8M516 158l0 8M512 162l4 0M521 151l0 7M529 168l17 0M537 177l0-9M537 174l8 0M541 178l0-4M528 162l18-1M539 161l0 7M533 161l-1 7M536 151l0 10M531 127l1 24M511 141l20-1M521 141l0 10M511 145l10 0M517 145l0 6M532 145l-11 1M527 151l0-6M519 128l0 13M511 134l8 0M515 134l0 7M523 128l1 12M524 136l-5 0M531 133l-8 0M531 136l-7 0M528 127l0 6M547 138l-16 0M540 152l0-14M531 145l9 0M535 138l1 7M546 144l-6 0M547 141l-7 0M538 127l1 11M538 134l-7-1M547 133l-9 0M572 149l-26-2M571 166l-25 1M559 179l0-13M551 179l0-12M545 174l6 0M551 173l8 0M554 167l0 6M570 175l-11 0M565 175l0-9M559 171l6 0M571 170l-6 1M556 167l-1-19M546 159l10-1M566 166l-1-18M556 158l10 0M561 166l0-8M556 163l5 0M556 152l10 1M560 152l1 6M562 148l0 4M572 158l-6 0M571 162l-5 0M572 154l-6 0M561 148l2-23M547 135l15-1M554 148l0-13M546 143l8 0M551 148l0-5M554 141l8 0M554 144l8-1M553 126l0 9M558 126l0 8M558 130l-5 1M573 136l-11 0M567 148l0-12M562 142l5 0M573 142l-6 0M574 131l-12 0M569 136l0-5M570 131l0-6M543 74l4 52M545 99l-36-1M533 127l-1-29M510 113l22 1M521 128l0-15M510 119l11 0M516 128l-1-9M510 125l6-1M516 123l5 0M515 113l0 6M521 122l12-1M527 128l-1-6M525 114l0 8M521 118l4 0M518 98l0 15M509 106l9 0M513 106l1 7M513 98l0 8M532 105l-14 0M525 114l0-9M525 98l0 7M546 115l-14 0M539 127l0-12M533 121l6 1M546 120l-7 0M542 120l0-5M545 108l-13 1M540 115l0-7M536 115l0-7M539 108l0-9M545 103l-6-1M524 74l0 24M524 84l-16-1M515 98l-1-14M508 90l6 0M524 90l-10 1M520 98l-1-8M514 94l5 0M517 74l1 10M544 88l-20 2M534 98l-1-9M524 95l9 0M529 98l0-3M528 89l0 6M535 74l1 15M535 82l-11 0M531 89l0-7M536 86l-5 0M543 81l-8 1M540 88l0-6M540 74l0 8M576 106l-31 1M558 126l1-20M546 118l13-1M553 126l1-8M546 113l13 0M552 113l0 5M554 107l0 6M575 114l-16 1M568 125l0-11M558 121l10 0M575 120l-7 0M572 125l-1-5M568 114l0-8M564 115l1-9M559 111l5 1M564 111l4 0M558 74l3 32M559 92l-15 1M554 107l-1-15M545 99l9 0M545 102l9 0M549 107l0-5M548 93l1 6M560 101l-6-1M558 81l-15 1M553 92l-1-11M544 86l9 0M548 93l0-7M547 81l1 5M559 85l-6 1M551 74l0 7M577 93l-17 1M567 106l1-13M560 99l7 0M576 100l-9 0M570 74l-2 19M569 85l-10 0M564 93l1-8M577 83l-8 0M572 74l1 9M670 134l-3 0-2 0-3 0-2 1-3 0-2 0-3 0-2 0-3 1-3 0-2 0-3 0-2 0-3 1-2 0-3 0-2 0-3 1-3 0-2 0-3 0-2 0-3 0-2 1-3 0-2 0-3 0-3 0-2 0-3 1-2 0-3 0-2 0-3 0-2 1-3 0-3 0-2 0M620 185l1-3 0-2 0-3 0-3 0-2 0-3 0-3 0-2 0-3 1-2 0-3 0-3 0-2 0-3 0-3 1-2 0-3 0-2M595 183l-1-43M572 157l23-1M571 173l24-2M583 182l1-10M577 181l1-8M591 182l0-10M583 177l8 0M587 182l-1-5M582 157l1 15M571 165l11 0M576 157l0 8M582 162l-6 0M595 162l-13 1M590 172l-1-9M595 167l-5 0M589 157l0 6M581 141l0 16M572 150l9 0M575 150l1 7M572 154l3 0M595 148l-14-1M589 157l0-10M588 140l1 7M595 160l27 2M595 170l26 1M606 184l0-14M595 178l11-1M600 183l0-6M600 170l0 7M606 179l3 0 3 0 3-1 3 0 3 0M615 184l0-6M610 184l1-5M614 171l0 7M606 161l-1 9M601 160l1 10M595 165l6 0M614 161l0 10M614 165l-8 0M610 138l0 23M595 149l15 0M603 149l1 12M595 156l8 0M600 156l0 4M603 139l0 10M622 151l-3 1-3 0-3 0-3 0M622 146l-3 0-3 0-3 0-3 0M616 152l-1-6M616 138l-1 8M670 156l-3 1-2 0-3 0-2 0-3 0-2 1-3 0-2 0-3 0-2 0-3 1-3 0-2 1-3 0-2 0-3 0-2 0-3 1-2 0M644 187l-1-3 0-2 0-3 0-2-1-3 0-2 0-3-1-2 0-3-1-2 0-3M621 170l3 0 2 0 3 0 2 0 3 0 3 0 2 0 3 0M632 186l0-3 0-2-1-3 0-2-1-3 0-3M621 179l2 0 3 0 3 0 2 0M631 178l3 0 3 0 3 0 3 0M637 186l0-2 1-3 0-3M632 160l0 2 0 3 0 3 0 2M651 188l0-3 0-3 1-3 0-2 1-3 0-3 0-2 0-3 0-3 0-2 1-3M642 170l2 1 3 0 3 0 2 0M641 166l3-1 3 0 3-1 3-1M648 158l-1 3 0 4M670 173l-2-1-3-1-2 0-3-1-2 0-3-1-2 0M670 177l-3 0-2 1-3 1-3 0-2 1-3 0-2 1M660 188l-1-3 0-3 0-3M661 179l0-3 0-3-1-2M660 170l0-2 1-3 0-3 1-2 0-3M642 159l1-3 0-2 0-3 0-2 0-3 0-2 1-3 0-3 0-2M622 151l3 0 2 0 3 0 3 0 2 0 3 0 2 0 3 1M634 160l0-9M627 160l0-3 0-3-1-3M631 137l0 3 0 3 0 2-1 3 0 3M623 142l8 0M637 136l0 3 0 3-1 3 0 3 0 3M644 145l-8-1M661 157l-1-3 0-2 0-3-1-3 0-3 0-3 0-2-1-3M644 144l2 0 3 0 2 0 3 0 3 0 2 0M651 158l1-3 0-3 1-2 0-3 0-3M652 152l3 0 3 0 2 0M652 135l0 9M670 144l-11 2M621 74l0 3 0 2 0 3 0 2 0 3 1 2 0 3 0 2 0 3 0 2 1 3 0 2 0 3 0 2 0 3 0 3 0 2 1 3 0 2 0 3 0 2 0 3 0 2 0 3 1 2M623 107l-3 0-2 0-3 0-3 0-2 0-3 0-3 0-2 0-3 0-3 0-2 0-3 0-2 0-3 0-3 0-2 0-3 0-3 0M604 139l-1-32M574 126l30-2M590 140l-1-15M580 141l-1-16M574 132l6 0M580 132l9-1M584 125l0 6M589 131l15 1M598 139l1-7M596 124l0 8M587 107l1 18M575 118l13 1M582 118l0 7M581 107l0 11M575 113l6 0M587 112l-6 0M603 117l-15 1M596 124l0-7M592 125l0-8M594 107l1 10M624 120l-3 0-2 0-3 0-2 0-3 0-2 0-3 0-2 0M612 138l1-18M604 130l9-1M604 134l9-1M609 120l-1 9M613 124l-4 0M624 129l-3 0-3 0-2 0-3 1M619 138l0-9M612 134l7 0M613 120l1-13M596 74l2 33M597 94l-20-1M589 107l-1-13M576 99l12 1M582 107l0-7M582 93l0 7M597 100l-9 0M596 84l-19 2M587 94l0-9M583 93l-1-8M583 90l4 0M597 89l-10 0M592 94l1-5M585 74l-1 11M584 80l-7 1M622 93l-3 0-2 0-3 0-2 0-3-1-2 0-3 0-2 0-3-1-2 0M606 107l2-15M597 98l10 0M616 107l0-3-1-3 0-3 0-2 0-3M607 98l8-1M622 100l-7 0M619 100l0-7M606 74l2 18M607 82l-11 1M602 74l1 8M607 78l-5 0M621 82l-3 0-2 0-3 0-3 1-3 0M615 93l0-3 0-2 0-3 0-3M614 74l1 8M670 98l-2 0-3 1-2 0-3 0-2 1-3 0-2 1-3 0-2 0-3 1-2 0-3 1-2 0-3 0-2 1-3 0-2 0-3 1-2 0M648 136l0-3 0-3 0-2 0-3 0-3 1-2 0-3 0-3 0-2 0-3 0-3 0-2 0-3M624 122l2 0 3 0 3 0 3 0 2-1 3 0 3-1 2 0 3 0M635 137l1-3 0-3 0-2 1-3 0-2 1-3M624 129l3 0 3 0 3 0 3 1M629 137l0-8M630 122l0 7M637 127l3 0 2-1 3 0 3 0M643 120l1 6M637 103l0 2 0 3 0 3-1 2 0 3 0 3-1 2M623 114l3 0 2 0 3 0 3-1 2 0M629 114l-1 8M623 118l3 0 2 0M629 104l0 10M648 113l-3 0-3 0-3 0-3 0M670 116l-3 0-2 1-3 0-3 0-3 1-2 0-3 0-3 0M670 124l-3 0-2 0-3 0-3 0-3 0-2 0-3 0-3 0M656 135l1-11M648 128l3 0 3 0 3 0M661 124l0-7M655 124l-1-6M660 117l0-2 0-3 0-2 0-3 0-2-1-3 0-2M648 108l3 0 3 1 3 0 3 0M648 114l3 0 3-1 3 0 3 0M653 100l-1 8M670 106l-3 1-2 0-3 0-2 0M649 74l0 3 0 2 1 3 0 3 0 2 0 3 0 3 0 2 1 3 0 3M639 74l0 3 0 2 0 3 0 2 0 3 0 3 0 2 0 3 0 2 1 3 0 3M639 88l-2 0-3 0-2 1-3 0-2 0-3 0-2 0M629 104l0-2 0-3 0-3 0-2 0-3 0-2M622 96l7 1M640 98l-3 0-3 0-2 0-3 0M635 103l-1-5M639 93l-2-1-3 0-2 0-3-1M628 74l1 15M628 80l-7 1M639 84l-3-1-2 0-3 0-2-1M634 88l0-5M634 74l-1 9M650 89l-3 0-2 1-3 0-3 0M650 85l-3-1-3 0-2 0-3-1M644 90l0-6M649 79l-10 1M644 84l0-4M670 90l-3 0-3 0-3 0-2 1-3 0-3 0-3 0M661 99l-1-8M660 74l0 3-1 3 0 2-1 3 0 3 0 3M659 83l-9 0M654 91l1-8M656 74l-1 9M670 85l-11-1M662 91l1-4 0-3" fill="none" stroke="#000" stroke-width="0.9"/></g><path transform="translate(0.5 0.5)" d="M222 100l4-1 3-2 4 0 3-2 3 0 3 1 3 0 3 0 4 1 3 0 4 1 3-1 4 1 3 0 3 0 4 0 3 0 2 1 4 0 3 0 2 1 4-1 3 0 3-2 4 0 2-1 4-1 3 0 2-1 4 1 2-1 4-1 3 0 3 0 2-1 3 0 4-1M222 100l3 0 3 1 4 0 4 0 4-2 2-2 3-1M320 92l4-1 2 0 4 0 3 1 3-1 3 0 0-3 1-4 0-3 1-4M341 92l4 0 3 0 3 1 3-1 4-1 3 0 4 1 3 0 0 4 4 0 3 0 3 0 3 0 4 0 3 0 4 0-1-3 0-3 1-3 3-1 3 1 4 0 3 0 0-5 4-1 4 1 3 0 3-5 3 0 3-2M448 76l2 2 1 4 1 4 2 3 2 2 3 1 3 3 3 3 1 1 0-3 0-4 4 0 4 0 4 0 3 0 3 4 3 0 4 0 3 0 4-1 3 1 3 0 3 0 3 0 4 0-1-4 1-5 3 0 4-1-1-3-1-3-1-3-3 0-4 0-3-1M466 99l0 4 0 2-1 3 0 4 0 2M320 119l3-2 3-2 2-1 5-2 2-2 2 0 4-2 3 0 2 0 4-1 4-1 4 0 3 0 4-1 1 3 2 5 4 0 3 0 4-1 3 1 3 0 3 0 4 0 3 0 2-1 4 0 2-2 4 1 3-1 3-1 3-1 2-1 4-1 3-1 3 3 3 1 3 2 2 1 3 0 4 1 3 0 3 2 3 1 1 3 1 3 4 0 2 0 3-1 4 1 2 0 4-1 3 1 2 1 4 0 2 0 3 0 3-1 4-1 2-1 3-1 4 1 4 0 3 2 4 0 2-2 3-1 3-1 3-2 3 0 3-1 3-1 2-1 4-1 3 0 4 0 3 0 4 1 3 0 4 2 2 2 3 1 3 1 3 2 1 2 3 1 3 2M425 108l-1 4-2 4-2 2-1 4-2 2-2 2-2 3-2 2-1 3-4 2-2 2-3 1-3 2-3 2M392 143l2 1 4 1 3 2 2 1 3 2 4 2 3 1 3 0 3 1 3 2 2 0 3 1 4 1 2 1 4 1 3 1 3 0 3 1 3 1 2 0 4 1 3 1 3 1 3 1 3 1 4 2 0 4 0 2-1 4M320 146l3-1 3-1 2-1 4 0 3-2 3 0 4-1 1 0 4-1 3 0 2 0 4 0 3-1 3 1 3 1 3 1 3 1 2 1 4 0 3 1 4-1 4 0 4 0M320 141l3 0 3 0 3 0 3-1 4 1 2-1 3-1 3 1 2 0 4-1 3 1 3-1 3 0 3 1 4 0 2 2 3 0 3 1 2 1 4 1 3 1 3 2 3 1 3 2 3 2 4 2 2 1 3 1 3 2 3 2 3 2 3 2 2 1 2 2 3 2 2 2 3 1 2 3 3 2 1 1 4 3 2 2 3 0 4 1 3 1 3 0 4 1 3 0 3 0 3 0 3 0 3 0 4 1 2-1 3 0 4 0 2 1 3-1 4 1 3-1 3 1 3-1 3 0 3 0 2 0 4 0 3 1 3-1 3 0 3 1 3 0 3-1 4 0 3 1 3 0 3 0 2-1 4 0 3 1 3 0 3 0 3 0 3-1 3 1" fill="none" stroke="#000" stroke-width="1"/></g>
<path d="M200.0 75.0L199.8 75.0L200.0 75.1L200.4 74.7L200.2 75.2L200.6 74.8L201.5 75.0L201.8 75.0L202.1 74.8L202.6 75.3L203.1 75.2L203.8 74.7L204.6 75.1L205.0 74.7L206.2 75.0L207.0 75.3L207.9 75.3L208.6 75.2L209.7 75.3L211.0 74.7L211.6 74.8L213.4 75.0L214.3 74.9L215.5 74.9L216.7 75.1L218.3 75.3L219.7 75.3L221.3 75.3L222.7 74.8L224.4 75.3L226.0 75.0L227.5 74.8L229.2 75.1L230.6 74.7L232.7 75.3L234.0 75.2L236.1 74.8L237.9 75.2L240.2 74.7L242.0 74.7L244.0 74.9L246.2 75.3L248.0 75.3L249.9 74.7L252.3 74.7L254.2 74.9L256.7 74.8L258.5 75.3L261.0 75.3L263.7 74.9L265.7 75.0L268.2 75.1L270.5 75.1L273.2 75.0L275.3 75.2L277.6 74.9L280.6 75.0L282.9 74.7L285.3 75.1L287.6 75.1L290.6 74.7L293.3 75.0L295.9 74.9L298.6 75.2L300.8 74.7L304.0 75.3L306.4 75.0L309.4 74.9L312.0 74.9L314.8 75.1L317.5 74.9L320.7 74.7L323.4 75.2L326.0 74.8L329.3 74.8L331.7 75.0L334.9 74.7L337.6 74.9L340.8 75.0L343.8 74.8L346.4 75.1L349.7 75.0L352.2 74.7L355.3 74.8L358.5 75.2L361.0 74.8L364.4 75.1L367.4 74.9L369.9 74.9L373.4 74.8L376.1 74.9L379.1 74.9L382.5 74.8L384.9 75.3L388.5 75.3L391.2 75.3L394.5 74.8L397.4 75.2L400.3 75.0L403.1 74.9L406.0 74.7L409.2 74.9L412.4 74.7L415.4 75.1L418.4 75.3L421.4 75.1L423.7 75.2L426.8 74.9L430.0 75.0L432.8 75.3L435.9 74.9L438.5 75.3L441.6 75.2L444.4 74.8L447.4 75.2L450.0 75.2L453.4 75.2L456.1 74.7L458.8 75.3L461.2 74.8L464.1 75.0L467.0 75.0L470.0 74.7L472.2 74.7L475.0 74.7L478.3 75.2L480.3 75.0L483.1 74.9L485.8 75.1L488.5 74.9L490.8 74.9L493.3 75.0L496.3 74.9L498.3 74.8L501.0 75.1L503.7 74.9L506.2 75.1L508.3 74.9L510.7 75.1L513.0 75.1L515.3 74.8L517.6 75.1L519.5 74.9L522.0 75.3L524.5 74.9L526.6 75.2L528.3 75.0L530.2 75.2L532.6 75.3L534.7 75.1L536.6 75.0L538.1 75.1L539.9 74.8L542.3 74.7L543.6 74.7L545.9 74.8L547.1 75.2L548.8 75.2L550.8 75.2L552.6 75.1L554.0 74.7L555.5 75.0L556.9 74.7L558.4 75.3L559.3 74.9L560.9 75.2L562.0 74.8L563.2 75.1L564.7 74.9L565.6 74.9L566.6 74.9L567.4 75.0L569.0 74.9L569.8 74.8L570.6 75.2L571.4 75.0L572.0 75.1L573.0 74.8L573.0 75.2L574.2 75.0L574.4 75.2L574.7 74.8L575.1 75.1L575.5 74.8L576.0 75.3L576.0 75.1L576.2 75.2L576.4 74.8L576.4 75.0L576.2 75.0L576.4 76.1L576.3 77.5L576.5 79.6L576.4 81.9L576.8 84.0L576.9 86.7L577.3 89.2L577.2 92.0L577.5 94.3L577.6 97.1L577.5 99.0L577.6 100.9L577.5 103.3L577.9 105.7L578.1 107.3L577.8 109.5L577.8 112.0L578.4 114.3L578.1 116.4L578.2 118.2L578.6 119.9L578.3 122.4L578.7 124.0L578.8 126.2L579.2 128.6L579.1 130.4L579.7 132.5L579.8 134.4L580.6 136.2L580.4 137.9L580.3 140.2L580.4 142.0L580.0 144.2L580.3 145.5L580.0 147.5L579.4 149.6L578.6 151.4L578.4 153.4L577.5 155.4L577.4 157.6L576.4 160.0L576.0 161.4L575.5 163.3L575.2 165.4L574.5 167.0L574.0 169.4L573.1 171.6L572.9 173.2L572.5 175.3L571.5 177.8L571.1 179.8L570.5 181.7L569.7 183.5L569.0 185.8L568.9 187.4L568.2 189.0L567.5 191.4L566.4 193.6L566.0 195.4L564.9 197.4L564.3 199.3L563.2 201.1L562.6 203.2L561.7 205.2L561.0 207.0L560.1 208.7L559.3 210.5L559.1 213.0L558.0 214.7L557.4 217.2L557.0 219.3L556.1 220.9L555.4 222.8L554.8 224.9L554.1 226.4L553.8 228.0L552.9 231.2L552.1 234.6L551.7 236.2L551.2 237.0L550.3 237.1L548.1 237.6L545.2 237.4L542.4 237.7L540.0 238.1L539.0 238.0L538.1 240.9L537.8 243.4L536.2 243.7L532.8 244.2L531.0 244.5L530.3 245.6L529.2 248.1L528.3 251.0L527.2 253.9L526.7 254.6L529.0 257.0L529.1 258.3L530.0 261.0L531.2 262.1L531.9 263.0L533.6 264.1L535.4 266.1L537.0 267.4L539.0 268.3L540.9 270.1L542.3 271.3L544.2 272.7L545.7 273.7L547.4 275.4L549.1 276.4L550.7 277.6L551.9 278.6L553.6 279.9L555.6 281.3L557.2 282.5L559.5 283.7L561.4 285.0L563.3 286.0L565.6 287.1L567.0 288.5L568.9 289.1L570.0 290.0L571.3 291.7L572.4 293.7L573.5 294.6L574.3 295.9L576.3 297.2L577.7 298.9L579.3 300.6L581.4 302.6L583.7 305.0L584.6 306.0L586.0 307.7L587.4 308.9L589.2 310.8L591.0 312.3L592.4 314.3L593.8 316.5L595.6 317.6L597.5 319.4L599.2 321.1L600.4 322.4L602.3 323.9L603.8 325.2L604.9 326.2L608.2 327.6L610.9 328.4L614.2 329.0L616.2 328.6L618.1 329.1L618.6 328.7L618.7 329.1L618.5 331.1L618.7 333.8L618.9 337.5L619.7 340.3L619.9 343.3L620.0 345.5L619.8 346.0L623.6 347.0L625.3 346.6L626.5 346.8L628.8 346.2L630.4 346.4L632.4 346.0L634.9 346.2L637.7 346.3L639.8 347.4L641.5 348.4L643.3 349.3L645.3 350.5L647.0 352.0L649.4 353.8L651.2 355.3L653.6 357.3L655.6 358.8L657.3 360.2L659.1 361.5L660.3 363.2L661.5 363.7L661.9 364.8L662.3 364.8L661.8 365.9L660.2 367.9L657.3 371.0L656.5 372.3L655.0 373.3L653.6 374.6L652.8 375.8L651.1 377.3L649.3 379.3L647.8 380.6L646.2 382.9L644.8 384.8L643.7 385.9L642.3 388.1L640.9 389.4L639.7 391.4L638.4 393.2L636.9 394.6L635.2 396.4L634.2 398.3L632.3 400.7L631.2 402.4L630.0 403.8L629.1 405.6L628.5 406.9L627.8 408.0L627.2 411.5L627.6 413.3L628.8 414.7L629.6 417.0L629.8 419.5L629.7 422.1L629.2 425.1L629.2 426.9L628.9 428.0L628.1 428.7L626.2 430.4L624.1 432.3L621.0 433.8L619.2 434.4L616.5 434.6L614.3 435.0L611.1 435.1L608.3 435.4L606.6 436.0L605.1 436.3L604.3 436.0L604.3 436.8L603.9 437.8L603.7 440.1L603.2 442.4L602.4 445.2L601.8 448.6L600.7 451.7L599.9 454.0L599.7 456.7L599.1 459.0L598.5 460.4L598.7 460.7L598.3 460.3L597.6 459.6L596.9 458.0L595.0 456.2L593.6 454.1L591.7 452.4L590.2 450.3L588.5 448.1L586.2 445.6L584.4 444.1L583.0 442.8L581.0 441.4L578.9 440.5L576.8 439.3L575.1 438.8L572.7 437.7L571.1 436.9L568.8 436.7L567.3 436.0L565.2 435.0L562.9 434.5L561.6 434.2L559.9 433.9L558.2 432.5L556.0 431.6L554.4 430.0L553.2 428.7L551.6 427.2L550.2 425.2L549.0 423.7L547.7 421.4L546.0 419.7L544.8 418.0L543.5 416.6L542.2 415.1L540.2 412.9L538.9 411.7L537.2 410.1L535.7 408.2L533.9 406.6L532.8 406.0L531.4 404.7L529.2 403.2L526.9 403.0L524.9 402.3L522.4 401.3L520.6 400.2L518.6 398.7L517.1 397.9L515.0 396.0L513.0 394.7L511.2 393.5L509.5 392.4L507.6 391.1L505.1 390.4L503.3 389.7L501.8 388.9L500.0 387.8L498.2 386.2L496.9 385.5L494.2 384.0L492.7 383.2L491.2 382.9L488.8 381.9L486.9 381.0L485.1 380.4L482.7 379.0L480.7 378.0L478.2 377.5L476.2 376.2L474.3 375.0L472.9 374.5L470.6 372.9L468.7 371.6L466.8 371.0L464.8 369.3L463.1 368.0L461.6 367.3L460.1 366.1L458.3 365.0L456.6 363.4L454.4 363.0L452.4 361.4L451.0 360.3L449.4 359.1L447.6 358.7L446.0 357.5L444.8 356.0L443.1 354.8L442.1 352.9L440.5 350.8L439.8 349.2L438.3 348.0L437.5 345.9L435.9 344.8L434.4 343.4L432.0 341.8L430.0 341.2L427.9 339.6L426.0 338.6L424.7 338.0L422.0 336.6L420.0 335.0L418.0 333.7L416.8 333.1L414.8 331.4L412.6 330.6L410.1 329.8L407.8 328.6L405.3 327.7L403.0 327.0L400.7 327.2L398.8 326.9L396.6 326.9L393.5 327.6L390.8 328.4L387.8 329.0L384.9 329.1L383.1 328.2L381.0 327.8L379.1 326.9L377.1 327.1L374.7 328.4L373.1 329.5L370.5 330.2L368.9 331.3L366.5 332.1L364.6 333.5L362.6 334.7L360.2 336.4L359.7 338.9L358.7 342.2L357.1 344.2L356.1 345.9L354.4 346.6L351.1 346.6L349.2 345.9L346.7 344.5L343.9 343.7L341.8 342.8L339.3 342.0L337.2 340.9L335.1 340.0L332.8 338.9L330.6 338.1L328.8 337.4L326.4 336.4L324.0 336.2L321.1 336.2L319.1 335.7L316.6 335.4L314.7 335.0L313.2 333.6L311.6 331.5L310.4 329.1L309.2 326.6L308.5 323.2L308.2 321.8L308.8 321.4L310.4 319.4L311.7 317.2L313.1 314.8L314.7 313.1L316.6 310.8L317.3 308.2L317.4 306.5L317.9 304.3L318.0 301.5L318.0 299.5L317.4 297.3L316.3 295.1L315.1 292.2L314.5 290.3L313.4 288.4L312.6 286.2L311.9 284.4L310.8 282.0L310.0 279.9L308.9 278.2L308.2 276.1L306.9 274.3L306.0 272.1L305.0 270.4L304.0 269.0L302.9 267.0L302.0 265.3L300.9 263.2L299.5 261.2L298.4 259.6L296.9 258.0L295.5 256.6L294.0 254.4L292.9 253.1L290.9 251.1L289.6 249.5L288.6 248.2L287.0 247.0L285.2 245.1L283.9 243.5L282.5 242.1L280.8 240.3L279.2 239.2L277.7 238.0L275.0 236.4L273.4 235.6L270.8 233.8L269.0 233.2L266.9 232.5L265.3 232.3L262.8 231.7L260.7 231.8L258.0 231.4L256.2 231.3L254.4 231.6L252.6 231.9L251.0 231.8L248.8 231.7L247.0 232.4L244.8 232.1L242.8 232.5L240.0 232.5L238.3 232.3L236.3 232.8L234.3 232.6L232.6 232.4L230.6 232.8L228.5 232.6L225.9 232.1L223.9 232.3L221.6 232.7L219.5 232.6L218.0 232.1L216.0 232.3L213.6 232.2L212.0 232.4L209.3 232.4L207.3 232.7L205.4 232.2L202.9 232.5L200.7 232.5L198.8 232.9L197.0 232.6L195.1 233.0L193.7 233.1L192.0 233.5L189.7 233.8L187.5 234.8L185.3 235.6L183.7 236.3L182.3 237.2L180.7 238.0L178.3 239.3L176.4 241.7L174.6 243.0L174.0 243.6L173.6 243.5L173.4 242.1L172.6 241.2L171.1 239.5L169.7 237.0L168.1 235.0L166.2 233.2L163.7 231.4L162.0 230.0L159.4 229.0L157.7 228.9L155.6 228.4L153.4 228.4L150.6 227.8L148.3 228.1L145.2 228.4L142.8 228.3L140.0 228.7L137.2 228.5L134.1 228.9L132.3 228.9L130.1 229.2L128.2 229.5L127.2 229.4L126.0 229.6L126.0 229.6L125.9 228.8L126.0 226.3L126.2 223.4L126.7 220.2L126.5 218.2L126.9 217.3L126.8 217.2L127.1 216.7L127.9 216.9L128.9 216.1L129.5 215.1L130.6 214.5L132.3 213.5L133.7 212.8L135.0 211.6L137.0 210.4L138.6 209.4L140.2 207.9L142.8 207.0L144.7 205.7L146.4 204.2L149.1 202.4L151.1 201.5L153.3 200.0L155.5 198.5L157.9 197.0L160.3 195.8L162.9 194.2L165.1 192.9L167.4 191.5L169.4 190.6L171.4 189.1L173.3 188.5L175.3 187.7L177.4 187.0L179.3 186.1L180.7 185.4L183.0 184.4L185.6 184.3L188.4 183.5L190.5 183.7L193.5 183.2L196.2 182.8L198.8 183.2L201.5 182.8L203.8 183.3L206.8 183.1L208.7 183.2L211.5 183.6L213.5 184.3L215.6 184.1L217.5 184.1L218.8 184.9L220.1 184.6L221.4 185.0L222.5 185.0L222.9 185.3L222.9 185.4L223.1 184.9L223.0 183.4L222.7 181.4L223.1 178.7L222.7 175.8L222.6 172.6L223.0 169.6L223.0 166.4L222.6 163.6L222.8 161.7L222.9 160.3L222.9 160.0L224.0 160.1L226.2 160.2L229.0 159.9L231.7 159.7L234.3 160.0L235.0 160.0L234.7 159.5L235.0 157.3L234.8 154.3L235.0 151.7L234.5 150.0L234.5 149.8L232.7 145.7L231.9 144.6L231.6 143.1L231.2 141.8L229.9 140.2L229.1 138.7L228.9 137.0L227.5 134.9L226.8 132.8L225.8 130.7L224.8 128.8L223.8 126.9L222.8 124.8L221.9 122.0L221.3 120.2L220.4 118.0L219.3 115.6L218.4 113.9L217.7 111.6L216.5 110.0L215.3 108.2L214.9 105.9L213.7 103.7L212.4 101.3L211.4 98.6L210.0 96.7L208.9 94.0L207.7 91.5L206.9 89.4L206.0 86.9L204.4 84.6L203.4 82.5L202.8 80.9L201.8 79.0L201.0 77.5L200.8 76.4L200.6 75.8L200.0 75.1L200.0 75.0Z" fill="none" stroke="#000" stroke-width="0.8"/>
<polygon points="347.0,191.0 356.0,190.0 362.0,193.0 361.0,206.0 352.0,205.0 346.0,200.0" fill="#a36834" stroke="#000" stroke-width="1"/><polygon points="307.0,267.0 320.0,266.0 321.0,274.0 308.0,275.0" fill="#a36834" stroke="#000" stroke-width="1"/>
<polygon points="232.0,165.0 235.0,162.5 241.0,162.0 242.0,164.0 238.0,166.0" fill="#a6f6fc" stroke="#000" stroke-width="0.7"/><polygon points="283.6,137.5 286.0,137.0 291.4,144.0 289.0,145.5" fill="#a6f6fc" stroke="#000" stroke-width="0.7"/><polygon points="319.4,151.5 321.0,150.3 322.8,151.8 321.0,152.9" fill="#a6f6fc" stroke="#000" stroke-width="0.7"/><polygon points="240.5,77.0 242.5,77.0 243.0,84.0 242.0,92.0 240.5,91.0 241.0,84.0" fill="#a6f6fc" stroke="#000" stroke-width="0.7"/><polygon points="162.8,200.0 165.0,198.0 167.3,199.5 165.0,201.6" fill="#a6f6fc" stroke="#000" stroke-width="0.7"/><polygon points="499.0,182.0 501.0,178.0 505.0,172.0 507.0,166.0 510.0,161.0 511.5,162.5 508.5,168.0 506.0,174.0 502.0,180.0 500.5,183.0" fill="#a6f6fc" stroke="#000" stroke-width="0.7"/><polygon points="552.5,321.0 556.0,319.5 561.0,322.5 559.0,325.0 554.0,324.0" fill="#a6f6fc" stroke="#000" stroke-width="0.7"/><polygon points="493.0,367.0 495.5,366.0 497.0,368.0 494.5,369.5" fill="#a6f6fc" stroke="#000" stroke-width="0.7"/><polygon points="399.0,303.0 401.0,302.0 402.0,304.0 400.0,305.0" fill="#a6f6fc" stroke="#000" stroke-width="0.7"/><polygon points="455.0,282.0 457.0,281.0 458.0,283.0 456.0,284.0" fill="#a6f6fc" stroke="#000" stroke-width="0.7"/>
<polygon points="366.0,333.0 371.8,334.0 371.0,339.0 368.5,344.0 365.5,343.5 367.5,338.0" fill="#a36834" stroke="#000" stroke-width="0.7"/><polygon points="383.5,328.5 391.0,329.5 390.5,334.0 392.5,340.5 388.0,341.0 386.0,335.0" fill="#a36834" stroke="#000" stroke-width="0.7"/>
<path d="M245.3 428.2L246.2 428.8L249.0 428.7L253.1 428.6L254.4 428.2L257.4 428.0L259.2 428.0L261.2 427.9L263.1 428.3L265.2 427.8L267.7 428.6L269.0 429.3L271.4 431.5L273.2 432.3L274.8 435.1L276.3 436.4L278.3 437.9L280.0 438.7L282.3 439.5L284.7 439.2L287.3 438.7L289.0 438.7L290.3 438.8L292.8 440.2L293.6 441.8L295.9 442.6L298.0 443.2L300.2 443.4L301.5 444.6L303.4 444.9L305.5 445.3L308.4 446.0L310.7 445.9L311.8 445.8L313.7 446.6L316.6 447.3L317.8 448.3L320.0 448.5L321.9 449.8L323.3 450.4L325.1 451.7L328.2 453.6L327.6 456.8L327.3 457.0L328.5 458.0L330.0 459.9L332.2 460.9L333.4 462.8L335.7 465.9L336.9 467.6L338.7 468.6L340.3 470.7L342.4 472.7L343.6 475.1L345.4 477.3L347.1 479.1L348.2 480.3L348.5 481.0L347.8 480.5L347.2 481.0L346.6 481.4L345.5 481.2L344.5 480.5L341.5 480.6L339.8 481.1L338.0 480.8L335.7 480.4L332.9 480.7L330.1 480.4L327.3 481.3L324.3 481.1L320.3 481.6L317.5 480.5L314.6 481.0L311.4 480.6L308.0 481.1L305.5 480.6L302.6 481.3L300.3 481.0L297.4 480.8L294.9 480.6L293.1 480.5L291.5 481.2L289.8 480.4L288.3 480.9L287.0 481.6L287.2 481.0L286.7 481.0L286.9 480.1L286.1 478.9L286.5 476.9L285.4 474.2L286.2 471.7L286.1 469.4L285.6 466.7L285.6 463.9L286.6 462.4L287.0 460.0L288.1 457.4L287.9 455.5L287.7 453.4L287.1 450.4L285.6 448.8L284.3 446.9L281.7 446.7L280.0 445.4L276.7 446.1L273.3 444.3L271.9 443.9L269.0 444.1L267.0 444.1L264.5 444.0L262.0 443.6L259.8 443.2L256.8 441.6L255.4 439.8L253.8 437.9L252.0 435.4L250.6 433.2L247.5 431.4L245.8 429.0L245.3 428.2Z" fill="#a36834" stroke="#000" stroke-width="0.8"/>
</g></svg>
<div class="a" style="left:0;top:478px;width:669px;height:1px;background:#f0eee8"></div><div class="a" style="left:0;top:479px;width:669px;height:2px;background:#858580"></div>
</body></html>
